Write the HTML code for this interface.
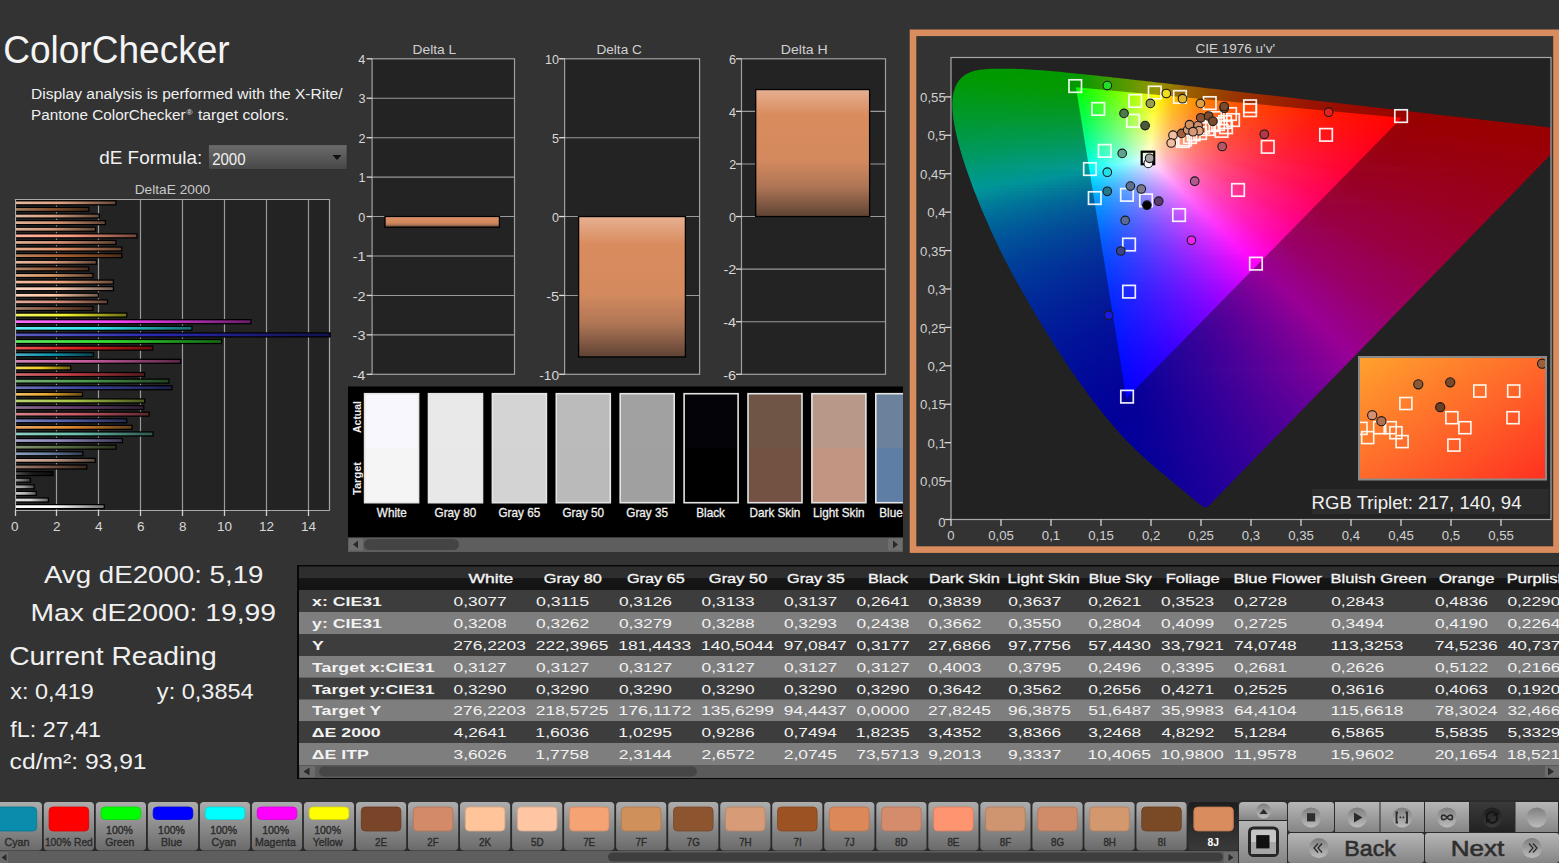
<!DOCTYPE html>
<html><head><meta charset="utf-8"><title>ColorChecker</title>
<style>html,body{margin:0;padding:0;background:#333;overflow:hidden;width:1559px;height:863px;font-family:"Liberation Sans",sans-serif}svg{display:block}</style>
</head><body>
<svg width="1559" height="863" viewBox="0 0 1559 863" font-family="Liberation Sans, sans-serif"><defs><linearGradient id="dd" x1="0" y1="0" x2="0" y2="1"><stop offset="0" stop-color="#6c6c6c"/><stop offset="1" stop-color="#474747"/></linearGradient><linearGradient id="b0" x1="0" y1="0" x2="1" y2="0"><stop offset="0" stop-color="#ffffff"/><stop offset="0.45" stop-color="#ffffff"/><stop offset="1" stop-color="#737373"/></linearGradient><linearGradient id="b1" x1="0" y1="0" x2="1" y2="0"><stop offset="0" stop-color="#e2e2e2"/><stop offset="0.45" stop-color="#d8d8d8"/><stop offset="1" stop-color="#616161"/></linearGradient><linearGradient id="b2" x1="0" y1="0" x2="1" y2="0"><stop offset="0" stop-color="#cacaca"/><stop offset="0.45" stop-color="#b8b8b8"/><stop offset="1" stop-color="#535353"/></linearGradient><linearGradient id="b3" x1="0" y1="0" x2="1" y2="0"><stop offset="0" stop-color="#b3b3b3"/><stop offset="0.45" stop-color="#9a9a9a"/><stop offset="1" stop-color="#454545"/></linearGradient><linearGradient id="b4" x1="0" y1="0" x2="1" y2="0"><stop offset="0" stop-color="#999999"/><stop offset="0.45" stop-color="#777777"/><stop offset="1" stop-color="#363636"/></linearGradient><linearGradient id="b5" x1="0" y1="0" x2="1" y2="0"><stop offset="0" stop-color="#535353"/><stop offset="0.45" stop-color="#1a1a1a"/><stop offset="1" stop-color="#0c0c0c"/></linearGradient><linearGradient id="b6" x1="0" y1="0" x2="1" y2="0"><stop offset="0" stop-color="#9b8074"/><stop offset="0.45" stop-color="#7a5646"/><stop offset="1" stop-color="#37271f"/></linearGradient><linearGradient id="b7" x1="0" y1="0" x2="1" y2="0"><stop offset="0" stop-color="#d3b3a4"/><stop offset="0.45" stop-color="#c49a86"/><stop offset="1" stop-color="#58453c"/></linearGradient><linearGradient id="b8" x1="0" y1="0" x2="1" y2="0"><stop offset="0" stop-color="#8fa3be"/><stop offset="0.45" stop-color="#6a84a8"/><stop offset="1" stop-color="#303b4c"/></linearGradient><linearGradient id="b9" x1="0" y1="0" x2="1" y2="0"><stop offset="0" stop-color="#869574"/><stop offset="0.45" stop-color="#5d7245"/><stop offset="1" stop-color="#2a331f"/></linearGradient><linearGradient id="b10" x1="0" y1="0" x2="1" y2="0"><stop offset="0" stop-color="#a7a3ca"/><stop offset="0.45" stop-color="#8a84b8"/><stop offset="1" stop-color="#3e3b53"/></linearGradient><linearGradient id="b11" x1="0" y1="0" x2="1" y2="0"><stop offset="0" stop-color="#8fd0c1"/><stop offset="0.45" stop-color="#6ac0ac"/><stop offset="1" stop-color="#30564d"/></linearGradient><linearGradient id="b12" x1="0" y1="0" x2="1" y2="0"><stop offset="0" stop-color="#e8a764"/><stop offset="0.45" stop-color="#e08a30"/><stop offset="1" stop-color="#653e16"/></linearGradient><linearGradient id="b13" x1="0" y1="0" x2="1" y2="0"><stop offset="0" stop-color="#7f88c1"/><stop offset="0.45" stop-color="#5460ac"/><stop offset="1" stop-color="#262b4d"/></linearGradient><linearGradient id="b14" x1="0" y1="0" x2="1" y2="0"><stop offset="0" stop-color="#d6838c"/><stop offset="0.45" stop-color="#c85a66"/><stop offset="1" stop-color="#5a282e"/></linearGradient><linearGradient id="b15" x1="0" y1="0" x2="1" y2="0"><stop offset="0" stop-color="#8c7092"/><stop offset="0.45" stop-color="#66406e"/><stop offset="1" stop-color="#2e1d31"/></linearGradient><linearGradient id="b16" x1="0" y1="0" x2="1" y2="0"><stop offset="0" stop-color="#bcd373"/><stop offset="0.45" stop-color="#a6c444"/><stop offset="1" stop-color="#4b581f"/></linearGradient><linearGradient id="b17" x1="0" y1="0" x2="1" y2="0"><stop offset="0" stop-color="#eebe64"/><stop offset="0.45" stop-color="#e8a830"/><stop offset="1" stop-color="#684c16"/></linearGradient><linearGradient id="b18" x1="0" y1="0" x2="1" y2="0"><stop offset="0" stop-color="#6d73b8"/><stop offset="0.45" stop-color="#3c44a0"/><stop offset="1" stop-color="#1b1f48"/></linearGradient><linearGradient id="b19" x1="0" y1="0" x2="1" y2="0"><stop offset="0" stop-color="#79b57a"/><stop offset="0.45" stop-color="#4c9c4e"/><stop offset="1" stop-color="#224623"/></linearGradient><linearGradient id="b20" x1="0" y1="0" x2="1" y2="0"><stop offset="0" stop-color="#ca6b70"/><stop offset="0.45" stop-color="#b83a40"/><stop offset="1" stop-color="#531a1d"/></linearGradient><linearGradient id="b21" x1="0" y1="0" x2="1" y2="0"><stop offset="0" stop-color="#f4d95b"/><stop offset="0.45" stop-color="#f0cc24"/><stop offset="1" stop-color="#6c5c10"/></linearGradient><linearGradient id="b22" x1="0" y1="0" x2="1" y2="0"><stop offset="0" stop-color="#d383b5"/><stop offset="0.45" stop-color="#c45a9c"/><stop offset="1" stop-color="#582846"/></linearGradient><linearGradient id="b23" x1="0" y1="0" x2="1" y2="0"><stop offset="0" stop-color="#4cacbf"/><stop offset="0.45" stop-color="#1090aa"/><stop offset="1" stop-color="#07414c"/></linearGradient><linearGradient id="b24" x1="0" y1="0" x2="1" y2="0"><stop offset="0" stop-color="#e85858"/><stop offset="0.45" stop-color="#e02020"/><stop offset="1" stop-color="#650e0e"/></linearGradient><linearGradient id="b25" x1="0" y1="0" x2="1" y2="0"><stop offset="0" stop-color="#64e864"/><stop offset="0.45" stop-color="#30e030"/><stop offset="1" stop-color="#166516"/></linearGradient><linearGradient id="b26" x1="0" y1="0" x2="1" y2="0"><stop offset="0" stop-color="#5e5ec4"/><stop offset="0.45" stop-color="#2828b0"/><stop offset="1" stop-color="#12124f"/></linearGradient><linearGradient id="b27" x1="0" y1="0" x2="1" y2="0"><stop offset="0" stop-color="#64eef4"/><stop offset="0.45" stop-color="#30e8f0"/><stop offset="1" stop-color="#16686c"/></linearGradient><linearGradient id="b28" x1="0" y1="0" x2="1" y2="0"><stop offset="0" stop-color="#f470f4"/><stop offset="0.45" stop-color="#f040f0"/><stop offset="1" stop-color="#6c1d6c"/></linearGradient><linearGradient id="b29" x1="0" y1="0" x2="1" y2="0"><stop offset="0" stop-color="#f4f464"/><stop offset="0.45" stop-color="#f0f030"/><stop offset="1" stop-color="#6c6c16"/></linearGradient><linearGradient id="b30" x1="0" y1="0" x2="1" y2="0"><stop offset="0" stop-color="#a78370"/><stop offset="0.45" stop-color="#8a5a40"/><stop offset="1" stop-color="#3e281d"/></linearGradient><linearGradient id="b31" x1="0" y1="0" x2="1" y2="0"><stop offset="0" stop-color="#e2ac9b"/><stop offset="0.45" stop-color="#d8907a"/><stop offset="1" stop-color="#614137"/></linearGradient><linearGradient id="b32" x1="0" y1="0" x2="1" y2="0"><stop offset="0" stop-color="#ffd6be"/><stop offset="0.45" stop-color="#ffc8a8"/><stop offset="1" stop-color="#735a4c"/></linearGradient><linearGradient id="b33" x1="0" y1="0" x2="1" y2="0"><stop offset="0" stop-color="#fad6c4"/><stop offset="0.45" stop-color="#f8c8b0"/><stop offset="1" stop-color="#705a4f"/></linearGradient><linearGradient id="b34" x1="0" y1="0" x2="1" y2="0"><stop offset="0" stop-color="#f4bea0"/><stop offset="0.45" stop-color="#f0a880"/><stop offset="1" stop-color="#6c4c3a"/></linearGradient><linearGradient id="b35" x1="0" y1="0" x2="1" y2="0"><stop offset="0" stop-color="#e2b28e"/><stop offset="0.45" stop-color="#d89868"/><stop offset="1" stop-color="#61442f"/></linearGradient><linearGradient id="b36" x1="0" y1="0" x2="1" y2="0"><stop offset="0" stop-color="#b38870"/><stop offset="0.45" stop-color="#9a6040"/><stop offset="1" stop-color="#452b1d"/></linearGradient><linearGradient id="b37" x1="0" y1="0" x2="1" y2="0"><stop offset="0" stop-color="#e5b8a0"/><stop offset="0.45" stop-color="#dca080"/><stop offset="1" stop-color="#63483a"/></linearGradient><linearGradient id="b38" x1="0" y1="0" x2="1" y2="0"><stop offset="0" stop-color="#be8864"/><stop offset="0.45" stop-color="#a86030"/><stop offset="1" stop-color="#4c2b16"/></linearGradient><linearGradient id="b39" x1="0" y1="0" x2="1" y2="0"><stop offset="0" stop-color="#e8ac8e"/><stop offset="0.45" stop-color="#e09068"/><stop offset="1" stop-color="#65412f"/></linearGradient><linearGradient id="b40" x1="0" y1="0" x2="1" y2="0"><stop offset="0" stop-color="#dfac94"/><stop offset="0.45" stop-color="#d49070"/><stop offset="1" stop-color="#5f4132"/></linearGradient><linearGradient id="b41" x1="0" y1="0" x2="1" y2="0"><stop offset="0" stop-color="#ffb5a0"/><stop offset="0.45" stop-color="#ff9c80"/><stop offset="1" stop-color="#73463a"/></linearGradient><linearGradient id="b42" x1="0" y1="0" x2="1" y2="0"><stop offset="0" stop-color="#dcb29a"/><stop offset="0.45" stop-color="#d09878"/><stop offset="1" stop-color="#5e4436"/></linearGradient><linearGradient id="b43" x1="0" y1="0" x2="1" y2="0"><stop offset="0" stop-color="#dfaf94"/><stop offset="0.45" stop-color="#d49470"/><stop offset="1" stop-color="#5f4332"/></linearGradient><linearGradient id="b44" x1="0" y1="0" x2="1" y2="0"><stop offset="0" stop-color="#e2b8a0"/><stop offset="0.45" stop-color="#d8a080"/><stop offset="1" stop-color="#61483a"/></linearGradient><linearGradient id="b45" x1="0" y1="0" x2="1" y2="0"><stop offset="0" stop-color="#a77f64"/><stop offset="0.45" stop-color="#8a5430"/><stop offset="1" stop-color="#3e2616"/></linearGradient><linearGradient id="b46" x1="0" y1="0" x2="1" y2="0"><stop offset="0" stop-color="#e8b8a0"/><stop offset="0.45" stop-color="#e0a080"/><stop offset="1" stop-color="#65483a"/></linearGradient><linearGradient id="dbar" x1="0" y1="0" x2="0" y2="1"><stop offset="0" stop-color="#e6b092"/><stop offset="0.2" stop-color="#d98c5e"/><stop offset="0.55" stop-color="#d48a5e"/><stop offset="0.76" stop-color="#b07656"/><stop offset="0.92" stop-color="#7a5440"/><stop offset="1" stop-color="#5e4232"/></linearGradient><clipPath id="hs"><path d="M1207.80 506.75 L1207.79 506.75 L1207.77 506.74 L1207.76 506.74 L1207.73 506.73 L1207.71 506.73 L1207.69 506.73 L1207.66 506.74 L1207.64 506.75 L1207.61 506.77 L1207.59 506.80 L1207.56 506.84 L1207.54 506.88 L1207.51 506.91 L1207.48 506.95 L1207.45 506.98 L1207.42 507.00 L1207.38 507.01 L1207.34 507.01 L1207.30 507.01 L1207.26 507.00 L1207.22 507.00 L1207.17 506.99 L1207.13 506.99 L1207.08 507.00 L1207.04 507.02 L1206.99 507.05 L1206.95 507.09 L1206.90 507.13 L1206.85 507.17 L1206.80 507.20 L1206.75 507.23 L1206.70 507.26 L1206.64 507.27 L1206.59 507.27 L1206.53 507.27 L1206.47 507.27 L1206.40 507.27 L1206.34 507.26 L1206.27 507.26 L1206.20 507.26 L1206.13 507.26 L1206.05 507.26 L1205.97 507.26 L1205.89 507.26 L1205.80 507.26 L1205.72 507.26 L1205.63 507.26 L1205.53 507.26 L1205.44 507.27 L1205.35 507.28 L1205.26 507.30 L1205.17 507.31 L1205.07 507.32 L1204.96 507.32 L1204.84 507.30 L1204.70 507.27 L1204.56 507.22 L1204.40 507.16 L1204.24 507.09 L1204.07 507.00 L1203.88 506.91 L1203.67 506.80 L1203.45 506.67 L1203.21 506.53 L1202.94 506.36 L1202.66 506.19 L1202.36 505.99 L1202.04 505.79 L1201.70 505.56 L1201.35 505.32 L1200.99 505.07 L1200.62 504.80 L1200.23 504.52 L1199.84 504.23 L1199.44 503.93 L1199.02 503.61 L1198.58 503.27 L1198.12 502.91 L1197.64 502.53 L1197.12 502.12 L1196.57 501.68 L1196.00 501.22 L1195.40 500.74 L1194.77 500.24 L1194.12 499.72 L1193.46 499.17 L1192.77 498.61 L1192.06 498.02 L1191.34 497.42 L1190.60 496.79 L1189.84 496.14 L1189.06 495.47 L1188.26 494.78 L1187.43 494.07 L1186.58 493.34 L1185.69 492.60 L1184.78 491.84 L1183.85 491.07 L1182.90 490.28 L1181.92 489.47 L1180.91 488.63 L1179.86 487.77 L1178.77 486.87 L1177.63 485.94 L1176.44 484.96 L1175.21 483.96 L1173.94 482.92 L1172.64 481.86 L1171.29 480.76 L1169.91 479.63 L1168.50 478.47 L1167.06 477.28 L1165.59 476.07 L1164.10 474.84 L1162.57 473.59 L1161.02 472.30 L1159.42 470.98 L1157.77 469.60 L1156.08 468.16 L1154.34 466.65 L1152.55 465.09 L1150.71 463.49 L1148.83 461.84 L1146.91 460.13 L1144.93 458.36 L1142.91 456.52 L1140.84 454.59 L1138.72 452.56 L1136.57 450.49 L1134.40 448.40 L1132.19 446.25 L1129.92 444.02 L1127.58 441.66 L1125.16 439.14 L1122.62 436.42 L1119.96 433.48 L1117.18 430.33 L1114.28 427.01 L1111.28 423.52 L1108.18 419.85 L1105.01 416.02 L1101.76 412.01 L1098.44 407.84 L1095.08 403.48 L1091.64 398.95 L1088.10 394.24 L1084.50 389.35 L1080.82 384.29 L1077.09 379.06 L1073.32 373.68 L1069.52 368.14 L1065.69 362.46 L1061.82 356.58 L1057.87 350.50 L1053.87 344.23 L1049.84 337.81 L1045.79 331.29 L1041.76 324.69 L1037.76 318.05 L1033.82 311.40 L1029.88 304.68 L1025.90 297.83 L1021.93 290.90 L1017.98 283.91 L1014.10 276.91 L1010.31 269.93 L1006.64 263.00 L1003.13 256.18 L999.76 249.39 L996.49 242.58 L993.31 235.77 L990.25 229.02 L987.29 222.34 L984.45 215.78 L981.74 209.38 L979.16 203.17 L976.70 197.10 L974.37 191.14 L972.15 185.29 L970.05 179.58 L968.08 174.03 L966.22 168.64 L964.50 163.45 L962.89 158.47 L961.42 153.70 L960.08 149.13 L958.88 144.73 L957.79 140.52 L956.82 136.47 L955.94 132.58 L955.17 128.85 L954.47 125.26 L953.88 121.84 L953.39 118.60 L953.01 115.53 L952.73 112.61 L952.54 109.83 L952.43 107.17 L952.40 104.61 L952.44 102.13 L952.56 99.76 L952.77 97.52 L953.06 95.39 L953.44 93.37 L953.89 91.46 L954.41 89.64 L954.99 87.90 L955.64 86.24 L956.36 84.67 L957.17 83.20 L958.04 81.82 L958.99 80.53 L959.99 79.32 L961.05 78.20 L962.15 77.14 L963.28 76.16 L964.47 75.26 L965.72 74.45 L967.02 73.72 L968.37 73.07 L969.76 72.49 L971.19 71.95 L972.64 71.46 L974.12 71.01 L975.62 70.61 L977.17 70.27 L978.75 70.00 L980.36 69.77 L982.00 69.57 L983.66 69.41 L985.33 69.26 L987.01 69.11 L988.71 68.98 L990.43 68.87 L992.18 68.80 L993.95 68.74 L995.72 68.70 L997.50 68.68 L999.28 68.66 L1001.06 68.64 L1002.83 68.63 L1004.60 68.63 L1006.37 68.63 L1008.14 68.65 L1009.93 68.68 L1011.72 68.72 L1013.52 68.76 L1015.34 68.82 L1017.16 68.88 L1018.99 68.94 L1020.82 69.02 L1022.67 69.10 L1024.53 69.19 L1026.41 69.29 L1028.30 69.40 L1030.22 69.51 L1032.17 69.63 L1034.12 69.76 L1036.10 69.89 L1038.09 70.04 L1040.10 70.18 L1042.13 70.34 L1044.19 70.50 L1046.27 70.67 L1048.37 70.84 L1050.49 71.02 L1052.63 71.21 L1054.79 71.40 L1056.98 71.60 L1059.19 71.81 L1061.43 72.02 L1063.70 72.24 L1066.00 72.46 L1068.32 72.69 L1070.67 72.92 L1073.04 73.16 L1075.45 73.41 L1077.88 73.66 L1080.35 73.91 L1082.86 74.17 L1085.40 74.44 L1087.97 74.71 L1090.57 74.98 L1093.21 75.27 L1095.88 75.55 L1098.58 75.85 L1101.32 76.14 L1104.10 76.45 L1106.91 76.76 L1109.76 77.07 L1112.63 77.39 L1115.55 77.72 L1118.50 78.05 L1121.48 78.38 L1124.51 78.72 L1127.59 79.07 L1130.70 79.42 L1133.85 79.77 L1137.04 80.13 L1140.27 80.49 L1143.54 80.86 L1146.85 81.24 L1150.20 81.62 L1153.60 82.00 L1157.03 82.39 L1160.50 82.79 L1164.01 83.19 L1167.56 83.60 L1171.15 84.01 L1174.78 84.42 L1178.46 84.85 L1182.17 85.27 L1185.93 85.70 L1189.72 86.14 L1193.56 86.58 L1197.44 87.03 L1201.36 87.48 L1205.32 87.93 L1209.31 88.39 L1213.34 88.86 L1217.41 89.33 L1221.53 89.80 L1225.68 90.28 L1229.88 90.76 L1234.10 91.25 L1238.36 91.74 L1242.65 92.23 L1246.96 92.72 L1251.30 93.22 L1255.69 93.72 L1260.11 94.23 L1264.56 94.73 L1269.03 95.25 L1273.52 95.76 L1278.02 96.27 L1282.53 96.79 L1287.06 97.31 L1291.62 97.84 L1296.21 98.37 L1300.80 98.90 L1305.40 99.43 L1309.98 99.96 L1314.54 100.49 L1319.06 101.01 L1323.55 101.53 L1328.01 102.04 L1332.46 102.55 L1336.90 103.06 L1341.31 103.57 L1345.71 104.07 L1350.10 104.57 L1354.47 105.08 L1358.85 105.58 L1363.23 106.08 L1367.61 106.58 L1371.97 107.09 L1376.30 107.58 L1380.58 108.07 L1384.80 108.56 L1388.94 109.03 L1393.03 109.50 L1397.06 109.96 L1401.05 110.41 L1404.99 110.86 L1408.87 111.30 L1412.69 111.73 L1416.46 112.16 L1420.17 112.59 L1423.82 113.00 L1427.42 113.42 L1430.97 113.83 L1434.45 114.23 L1437.88 114.63 L1441.24 115.01 L1444.54 115.40 L1447.77 115.77 L1450.93 116.13 L1454.02 116.49 L1457.05 116.84 L1460.01 117.18 L1462.91 117.52 L1465.75 117.84 L1468.53 118.16 L1471.26 118.48 L1473.92 118.78 L1476.51 119.08 L1479.05 119.37 L1481.52 119.65 L1483.94 119.92 L1486.31 120.19 L1488.64 120.46 L1490.92 120.72 L1493.16 120.97 L1495.33 121.22 L1497.46 121.47 L1499.54 121.71 L1501.58 121.95 L1503.58 122.18 L1505.56 122.41 L1507.50 122.63 L1509.42 122.85 L1511.30 123.07 L1513.15 123.28 L1514.97 123.49 L1516.75 123.70 L1518.49 123.90 L1520.20 124.09 L1521.88 124.29 L1523.52 124.48 L1525.13 124.66 L1526.70 124.84 L1528.24 125.02 L1529.75 125.20 L1531.21 125.37 L1532.64 125.53 L1534.04 125.69 L1535.39 125.84 L1536.71 125.99 L1537.99 126.13 L1539.23 126.27 L1540.44 126.41 L1541.62 126.54 L1542.76 126.67 L1543.87 126.79 L1544.91 126.91 L1545.86 127.02 L1546.77 127.13 L1547.65 127.23 L1548.53 127.33 L1549.45 127.44 L1550.43 127.55 L1551.50 127.67 L1552.67 127.81 L1553.93 127.95 L1555.25 128.11 L1556.60 128.26 L1557.96 128.42 L1559.31 128.57 L1560.63 128.73 L1561.88 128.87 L1563.11 129.01 L1564.36 129.16 L1565.60 129.30 L1566.82 129.44 L1567.98 129.57 L1569.06 129.70 L1570.04 129.81 L1570.90 129.91 L1571.62 129.99 L1572.24 130.06 L1572.77 130.12 L1573.21 130.18 L1573.58 130.22 L1573.89 130.25 L1574.16 130.29 L1574.39 130.31 Z"/></clipPath><clipPath id="plot"><rect x="951.0" y="57.5" width="600.0" height="462.0"/></clipPath><clipPath id="tri"><path d="M1401.70 117.71 L1076.00 87.28 L1126.44 398.17 Z"/></clipPath><linearGradient id="r0" gradientUnits="userSpaceOnUse" x1="972.0" y1="0" x2="1053.0" y2="0"><stop offset="0.000" stop-color="#009900"/><stop offset="1.000" stop-color="#009900"/></linearGradient><linearGradient id="r1" gradientUnits="userSpaceOnUse" x1="964.0" y1="0" x2="1084.0" y2="0"><stop offset="0.000" stop-color="#009900"/><stop offset="0.933" stop-color="#039900"/><stop offset="1.000" stop-color="#0f9900"/></linearGradient><linearGradient id="r2" gradientUnits="userSpaceOnUse" x1="960.0" y1="0" x2="1112.0" y2="0"><stop offset="0.000" stop-color="#009900"/><stop offset="0.763" stop-color="#039900"/><stop offset="1.000" stop-color="#3d9900"/></linearGradient><linearGradient id="r3" gradientUnits="userSpaceOnUse" x1="957.0" y1="0" x2="1138.0" y2="0"><stop offset="0.000" stop-color="#009902"/><stop offset="0.663" stop-color="#049900"/><stop offset="0.967" stop-color="#639900"/><stop offset="1.000" stop-color="#6f9900"/></linearGradient><linearGradient id="r4" gradientUnits="userSpaceOnUse" x1="955.0" y1="0" x2="1165.0" y2="0"><stop offset="0.000" stop-color="#009906"/><stop offset="0.581" stop-color="#039900"/><stop offset="0.843" stop-color="#639900"/><stop offset="0.967" stop-color="#999500"/><stop offset="1.000" stop-color="#998600"/></linearGradient><linearGradient id="r5" gradientUnits="userSpaceOnUse" x1="953.0" y1="0" x2="1191.0" y2="0"><stop offset="0.000" stop-color="#009909"/><stop offset="0.525" stop-color="#049900"/><stop offset="0.752" stop-color="#639900"/><stop offset="0.857" stop-color="#999600"/><stop offset="0.979" stop-color="#996300"/><stop offset="1.000" stop-color="#995d00"/></linearGradient><linearGradient id="r6" gradientUnits="userSpaceOnUse" x1="952.0" y1="0" x2="1217.0" y2="0"><stop offset="0.000" stop-color="#00990c"/><stop offset="0.475" stop-color="#039900"/><stop offset="0.679" stop-color="#639900"/><stop offset="0.774" stop-color="#999600"/><stop offset="0.883" stop-color="#996300"/><stop offset="1.000" stop-color="#994300"/></linearGradient><linearGradient id="r7" gradientUnits="userSpaceOnUse" x1="951.0" y1="0" x2="1243.0" y2="0"><stop offset="0.000" stop-color="#00990f"/><stop offset="0.438" stop-color="#049904"/><stop offset="0.620" stop-color="#639900"/><stop offset="0.705" stop-color="#999500"/><stop offset="0.805" stop-color="#996200"/><stop offset="0.969" stop-color="#993700"/><stop offset="1.000" stop-color="#993100"/></linearGradient><linearGradient id="r8" gradientUnits="userSpaceOnUse" x1="951.0" y1="0" x2="1269.0" y2="0"><stop offset="0.000" stop-color="#009913"/><stop offset="0.403" stop-color="#039908"/><stop offset="0.569" stop-color="#639902"/><stop offset="0.645" stop-color="#999700"/><stop offset="0.733" stop-color="#996400"/><stop offset="0.881" stop-color="#993800"/><stop offset="1.000" stop-color="#992400"/></linearGradient><linearGradient id="r9" gradientUnits="userSpaceOnUse" x1="951.0" y1="0" x2="1296.0" y2="0"><stop offset="0.000" stop-color="#009916"/><stop offset="0.374" stop-color="#04990d"/><stop offset="0.525" stop-color="#639907"/><stop offset="0.594" stop-color="#999603"/><stop offset="0.675" stop-color="#996300"/><stop offset="0.812" stop-color="#993700"/><stop offset="1.000" stop-color="#991a00"/></linearGradient><linearGradient id="r10" gradientUnits="userSpaceOnUse" x1="951.0" y1="0" x2="1321.0" y2="0"><stop offset="0.000" stop-color="#009919"/><stop offset="0.349" stop-color="#039911"/><stop offset="0.486" stop-color="#61990c"/><stop offset="0.554" stop-color="#999509"/><stop offset="0.630" stop-color="#996203"/><stop offset="0.757" stop-color="#993600"/><stop offset="0.989" stop-color="#991300"/><stop offset="1.000" stop-color="#991200"/></linearGradient><linearGradient id="r11" gradientUnits="userSpaceOnUse" x1="951.0" y1="0" x2="1348.0" y2="0"><stop offset="0.000" stop-color="#00991d"/><stop offset="0.327" stop-color="#049916"/><stop offset="0.456" stop-color="#649911"/><stop offset="0.514" stop-color="#99970f"/><stop offset="0.582" stop-color="#996407"/><stop offset="0.695" stop-color="#993801"/><stop offset="0.904" stop-color="#991400"/><stop offset="1.000" stop-color="#990b00"/></linearGradient><linearGradient id="r12" gradientUnits="userSpaceOnUse" x1="951.0" y1="0" x2="1374.0" y2="0"><stop offset="0.000" stop-color="#009920"/><stop offset="0.307" stop-color="#03991a"/><stop offset="0.426" stop-color="#629917"/><stop offset="0.482" stop-color="#999614"/><stop offset="0.546" stop-color="#99630c"/><stop offset="0.652" stop-color="#993804"/><stop offset="0.849" stop-color="#991400"/><stop offset="1.000" stop-color="#990600"/></linearGradient><linearGradient id="r13" gradientUnits="userSpaceOnUse" x1="951.0" y1="0" x2="1400.0" y2="0"><stop offset="0.000" stop-color="#009923"/><stop offset="0.290" stop-color="#03991f"/><stop offset="0.401" stop-color="#62991c"/><stop offset="0.454" stop-color="#99951a"/><stop offset="0.514" stop-color="#996210"/><stop offset="0.615" stop-color="#993707"/><stop offset="0.800" stop-color="#991300"/><stop offset="1.000" stop-color="#990100"/></linearGradient><linearGradient id="r14" gradientUnits="userSpaceOnUse" x1="951.0" y1="0" x2="1426.0" y2="0"><stop offset="0.000" stop-color="#009927"/><stop offset="0.276" stop-color="#039924"/><stop offset="0.379" stop-color="#629922"/><stop offset="0.429" stop-color="#999520"/><stop offset="0.486" stop-color="#996214"/><stop offset="0.581" stop-color="#99360a"/><stop offset="0.756" stop-color="#991301"/><stop offset="1.000" stop-color="#990000"/></linearGradient><linearGradient id="r15" gradientUnits="userSpaceOnUse" x1="951.0" y1="0" x2="1452.0" y2="0"><stop offset="0.000" stop-color="#00992a"/><stop offset="0.261" stop-color="#039929"/><stop offset="0.359" stop-color="#629928"/><stop offset="0.405" stop-color="#999727"/><stop offset="0.457" stop-color="#996419"/><stop offset="0.543" stop-color="#99380d"/><stop offset="0.701" stop-color="#991504"/><stop offset="0.948" stop-color="#990000"/><stop offset="1.000" stop-color="#990000"/></linearGradient><linearGradient id="r16" gradientUnits="userSpaceOnUse" x1="951.0" y1="0" x2="1478.0" y2="0"><stop offset="0.000" stop-color="#00992e"/><stop offset="0.250" stop-color="#03992e"/><stop offset="0.342" stop-color="#62992e"/><stop offset="0.385" stop-color="#99962d"/><stop offset="0.435" stop-color="#99631e"/><stop offset="0.516" stop-color="#993811"/><stop offset="0.668" stop-color="#991406"/><stop offset="0.898" stop-color="#990000"/><stop offset="1.000" stop-color="#990000"/></linearGradient><linearGradient id="r17" gradientUnits="userSpaceOnUse" x1="951.0" y1="0" x2="1505.0" y2="0"><stop offset="0.000" stop-color="#009932"/><stop offset="0.238" stop-color="#039933"/><stop offset="0.325" stop-color="#629934"/><stop offset="0.366" stop-color="#999533"/><stop offset="0.413" stop-color="#996222"/><stop offset="0.491" stop-color="#993714"/><stop offset="0.635" stop-color="#991308"/><stop offset="0.850" stop-color="#990000"/><stop offset="1.000" stop-color="#990000"/></linearGradient><linearGradient id="r18" gradientUnits="userSpaceOnUse" x1="951.0" y1="0" x2="1531.0" y2="0"><stop offset="0.000" stop-color="#009935"/><stop offset="0.229" stop-color="#049938"/><stop offset="0.310" stop-color="#62993a"/><stop offset="0.348" stop-color="#99973a"/><stop offset="0.391" stop-color="#996428"/><stop offset="0.464" stop-color="#993818"/><stop offset="0.597" stop-color="#99140a"/><stop offset="0.803" stop-color="#990002"/><stop offset="1.000" stop-color="#990000"/></linearGradient><linearGradient id="r19" gradientUnits="userSpaceOnUse" x1="952.0" y1="0" x2="1551.0" y2="0"><stop offset="0.000" stop-color="#009939"/><stop offset="0.220" stop-color="#03993e"/><stop offset="0.299" stop-color="#629940"/><stop offset="0.336" stop-color="#999641"/><stop offset="0.377" stop-color="#99632c"/><stop offset="0.447" stop-color="#99381b"/><stop offset="0.576" stop-color="#99140c"/><stop offset="0.773" stop-color="#990003"/><stop offset="1.000" stop-color="#990000"/></linearGradient><linearGradient id="r20" gradientUnits="userSpaceOnUse" x1="953.0" y1="0" x2="1551.0" y2="0"><stop offset="0.000" stop-color="#00993d"/><stop offset="0.221" stop-color="#049943"/><stop offset="0.298" stop-color="#639947"/><stop offset="0.334" stop-color="#999547"/><stop offset="0.376" stop-color="#996231"/><stop offset="0.446" stop-color="#99371e"/><stop offset="0.575" stop-color="#99130e"/><stop offset="0.768" stop-color="#990005"/><stop offset="1.000" stop-color="#990000"/></linearGradient><linearGradient id="r21" gradientUnits="userSpaceOnUse" x1="953.0" y1="0" x2="1551.0" y2="0"><stop offset="0.000" stop-color="#009941"/><stop offset="0.221" stop-color="#039949"/><stop offset="0.298" stop-color="#63994d"/><stop offset="0.333" stop-color="#99974f"/><stop offset="0.373" stop-color="#996537"/><stop offset="0.440" stop-color="#993923"/><stop offset="0.564" stop-color="#991511"/><stop offset="0.759" stop-color="#990006"/><stop offset="1.000" stop-color="#990000"/></linearGradient><linearGradient id="r22" gradientUnits="userSpaceOnUse" x1="954.0" y1="0" x2="1551.0" y2="0"><stop offset="0.000" stop-color="#009944"/><stop offset="0.221" stop-color="#04994e"/><stop offset="0.296" stop-color="#639954"/><stop offset="0.332" stop-color="#999656"/><stop offset="0.372" stop-color="#99643c"/><stop offset="0.439" stop-color="#993826"/><stop offset="0.563" stop-color="#991414"/><stop offset="0.754" stop-color="#990008"/><stop offset="1.000" stop-color="#990001"/></linearGradient><linearGradient id="r23" gradientUnits="userSpaceOnUse" x1="954.0" y1="0" x2="1551.0" y2="0"><stop offset="0.000" stop-color="#009948"/><stop offset="0.221" stop-color="#039954"/><stop offset="0.296" stop-color="#63995b"/><stop offset="0.332" stop-color="#99965d"/><stop offset="0.372" stop-color="#996341"/><stop offset="0.439" stop-color="#993729"/><stop offset="0.563" stop-color="#991416"/><stop offset="0.750" stop-color="#990009"/><stop offset="1.000" stop-color="#990002"/></linearGradient><linearGradient id="r24" gradientUnits="userSpaceOnUse" x1="955.0" y1="0" x2="1551.0" y2="0"><stop offset="0.000" stop-color="#00994c"/><stop offset="0.221" stop-color="#04995a"/><stop offset="0.295" stop-color="#639962"/><stop offset="0.331" stop-color="#999564"/><stop offset="0.371" stop-color="#996246"/><stop offset="0.438" stop-color="#99372d"/><stop offset="0.562" stop-color="#991318"/><stop offset="0.747" stop-color="#99000b"/><stop offset="1.000" stop-color="#990003"/></linearGradient><linearGradient id="r25" gradientUnits="userSpaceOnUse" x1="956.0" y1="0" x2="1551.0" y2="0"><stop offset="0.000" stop-color="#009951"/><stop offset="0.220" stop-color="#039960"/><stop offset="0.294" stop-color="#639969"/><stop offset="0.328" stop-color="#99976d"/><stop offset="0.366" stop-color="#99644d"/><stop offset="0.430" stop-color="#993932"/><stop offset="0.548" stop-color="#99151c"/><stop offset="0.736" stop-color="#99000d"/><stop offset="1.000" stop-color="#990004"/></linearGradient><linearGradient id="r26" gradientUnits="userSpaceOnUse" x1="957.0" y1="0" x2="1551.0" y2="0"><stop offset="0.000" stop-color="#009955"/><stop offset="0.219" stop-color="#029966"/><stop offset="0.291" stop-color="#619970"/><stop offset="0.327" stop-color="#999674"/><stop offset="0.365" stop-color="#996353"/><stop offset="0.429" stop-color="#993836"/><stop offset="0.547" stop-color="#99141e"/><stop offset="0.731" stop-color="#99000e"/><stop offset="1.000" stop-color="#990005"/></linearGradient><linearGradient id="r27" gradientUnits="userSpaceOnUse" x1="958.0" y1="0" x2="1551.0" y2="0"><stop offset="0.000" stop-color="#009959"/><stop offset="0.219" stop-color="#03996d"/><stop offset="0.292" stop-color="#639978"/><stop offset="0.325" stop-color="#99957c"/><stop offset="0.364" stop-color="#996258"/><stop offset="0.428" stop-color="#993739"/><stop offset="0.548" stop-color="#991320"/><stop offset="0.728" stop-color="#990010"/><stop offset="1.000" stop-color="#990006"/></linearGradient><linearGradient id="r28" gradientUnits="userSpaceOnUse" x1="958.0" y1="0" x2="1551.0" y2="0"><stop offset="0.000" stop-color="#00995d"/><stop offset="0.219" stop-color="#029973"/><stop offset="0.290" stop-color="#619980"/><stop offset="0.324" stop-color="#999786"/><stop offset="0.361" stop-color="#996560"/><stop offset="0.423" stop-color="#99393f"/><stop offset="0.538" stop-color="#991524"/><stop offset="0.718" stop-color="#990012"/><stop offset="1.000" stop-color="#990007"/></linearGradient><linearGradient id="r29" gradientUnits="userSpaceOnUse" x1="959.0" y1="0" x2="1551.0" y2="0"><stop offset="0.000" stop-color="#009962"/><stop offset="0.220" stop-color="#03997a"/><stop offset="0.291" stop-color="#649988"/><stop offset="0.323" stop-color="#99968e"/><stop offset="0.360" stop-color="#996465"/><stop offset="0.422" stop-color="#993843"/><stop offset="0.537" stop-color="#991426"/><stop offset="0.715" stop-color="#990014"/><stop offset="1.000" stop-color="#990008"/></linearGradient><linearGradient id="r30" gradientUnits="userSpaceOnUse" x1="960.0" y1="0" x2="1550.0" y2="0"><stop offset="0.000" stop-color="#009966"/><stop offset="0.219" stop-color="#029981"/><stop offset="0.288" stop-color="#619990"/><stop offset="0.322" stop-color="#999596"/><stop offset="0.359" stop-color="#99636b"/><stop offset="0.422" stop-color="#993746"/><stop offset="0.537" stop-color="#991428"/><stop offset="0.712" stop-color="#990015"/><stop offset="1.000" stop-color="#990009"/></linearGradient><linearGradient id="r31" gradientUnits="userSpaceOnUse" x1="961.0" y1="0" x2="1547.0" y2="0"><stop offset="0.000" stop-color="#00996b"/><stop offset="0.220" stop-color="#049988"/><stop offset="0.288" stop-color="#619998"/><stop offset="0.328" stop-color="#998c96"/><stop offset="0.369" stop-color="#995a6a"/><stop offset="0.437" stop-color="#993045"/><stop offset="0.567" stop-color="#990e26"/><stop offset="0.720" stop-color="#990017"/><stop offset="1.000" stop-color="#99000a"/></linearGradient><linearGradient id="r32" gradientUnits="userSpaceOnUse" x1="962.0" y1="0" x2="1544.0" y2="0"><stop offset="0.000" stop-color="#009970"/><stop offset="0.220" stop-color="#039990"/><stop offset="0.285" stop-color="#589299"/><stop offset="0.333" stop-color="#998296"/><stop offset="0.378" stop-color="#995268"/><stop offset="0.454" stop-color="#992943"/><stop offset="0.601" stop-color="#990824"/><stop offset="0.741" stop-color="#990017"/><stop offset="1.000" stop-color="#99000b"/></linearGradient><linearGradient id="r33" gradientUnits="userSpaceOnUse" x1="963.0" y1="0" x2="1541.0" y2="0"><stop offset="0.000" stop-color="#009975"/><stop offset="0.221" stop-color="#049997"/><stop offset="0.339" stop-color="#997a96"/><stop offset="0.388" stop-color="#994a67"/><stop offset="0.471" stop-color="#992341"/><stop offset="0.637" stop-color="#990422"/><stop offset="1.000" stop-color="#99000c"/></linearGradient><linearGradient id="r34" gradientUnits="userSpaceOnUse" x1="964.0" y1="0" x2="1538.0" y2="0"><stop offset="0.000" stop-color="#00997a"/><stop offset="0.216" stop-color="#009599"/><stop offset="0.315" stop-color="#757c99"/><stop offset="0.345" stop-color="#997296"/><stop offset="0.395" stop-color="#994567"/><stop offset="0.484" stop-color="#991f40"/><stop offset="0.662" stop-color="#990121"/><stop offset="1.000" stop-color="#99000d"/></linearGradient><linearGradient id="r35" gradientUnits="userSpaceOnUse" x1="965.0" y1="0" x2="1535.0" y2="0"><stop offset="0.000" stop-color="#00997f"/><stop offset="0.186" stop-color="#009599"/><stop offset="0.223" stop-color="#048c99"/><stop offset="0.351" stop-color="#996b96"/><stop offset="0.404" stop-color="#994068"/><stop offset="0.496" stop-color="#991b40"/><stop offset="0.677" stop-color="#990022"/><stop offset="1.000" stop-color="#99000e"/></linearGradient><linearGradient id="r36" gradientUnits="userSpaceOnUse" x1="966.0" y1="0" x2="1532.0" y2="0"><stop offset="0.000" stop-color="#009984"/><stop offset="0.155" stop-color="#009499"/><stop offset="0.223" stop-color="#038699"/><stop offset="0.357" stop-color="#996496"/><stop offset="0.412" stop-color="#993b68"/><stop offset="0.507" stop-color="#991841"/><stop offset="0.684" stop-color="#990023"/><stop offset="1.000" stop-color="#99000f"/></linearGradient><linearGradient id="r37" gradientUnits="userSpaceOnUse" x1="967.0" y1="0" x2="1529.0" y2="0"><stop offset="0.000" stop-color="#009989"/><stop offset="0.125" stop-color="#009499"/><stop offset="0.224" stop-color="#038099"/><stop offset="0.363" stop-color="#995d97"/><stop offset="0.420" stop-color="#993668"/><stop offset="0.520" stop-color="#991541"/><stop offset="0.690" stop-color="#990024"/><stop offset="1.000" stop-color="#990011"/></linearGradient><linearGradient id="r38" gradientUnits="userSpaceOnUse" x1="968.0" y1="0" x2="1527.0" y2="0"><stop offset="0.000" stop-color="#00998e"/><stop offset="0.098" stop-color="#009399"/><stop offset="0.225" stop-color="#047a99"/><stop offset="0.369" stop-color="#995797"/><stop offset="0.428" stop-color="#993268"/><stop offset="0.531" stop-color="#991241"/><stop offset="0.694" stop-color="#990026"/><stop offset="1.000" stop-color="#990012"/></linearGradient><linearGradient id="r39" gradientUnits="userSpaceOnUse" x1="970.0" y1="0" x2="1524.0" y2="0"><stop offset="0.000" stop-color="#009994"/><stop offset="0.117" stop-color="#008a99"/><stop offset="0.224" stop-color="#037599"/><stop offset="0.375" stop-color="#995095"/><stop offset="0.437" stop-color="#992d67"/><stop offset="0.545" stop-color="#990f40"/><stop offset="0.697" stop-color="#990027"/><stop offset="1.000" stop-color="#990013"/></linearGradient><linearGradient id="r40" gradientUnits="userSpaceOnUse" x1="971.0" y1="0" x2="1521.0" y2="0"><stop offset="0.000" stop-color="#009899"/><stop offset="0.225" stop-color="#046f99"/><stop offset="0.382" stop-color="#994b95"/><stop offset="0.447" stop-color="#992966"/><stop offset="0.562" stop-color="#990c3f"/><stop offset="0.700" stop-color="#990029"/><stop offset="1.000" stop-color="#990014"/></linearGradient><linearGradient id="r41" gradientUnits="userSpaceOnUse" x1="972.0" y1="0" x2="1518.0" y2="0"><stop offset="0.000" stop-color="#009399"/><stop offset="0.225" stop-color="#036b99"/><stop offset="0.388" stop-color="#994695"/><stop offset="0.454" stop-color="#992667"/><stop offset="0.571" stop-color="#990a40"/><stop offset="0.703" stop-color="#99002b"/><stop offset="1.000" stop-color="#990015"/></linearGradient><linearGradient id="r42" gradientUnits="userSpaceOnUse" x1="973.0" y1="0" x2="1515.0" y2="0"><stop offset="0.000" stop-color="#008e99"/><stop offset="0.227" stop-color="#046699"/><stop offset="0.395" stop-color="#994195"/><stop offset="0.463" stop-color="#992267"/><stop offset="0.585" stop-color="#990840"/><stop offset="0.716" stop-color="#99002c"/><stop offset="1.000" stop-color="#990017"/></linearGradient><linearGradient id="r43" gradientUnits="userSpaceOnUse" x1="974.0" y1="0" x2="1512.0" y2="0"><stop offset="0.000" stop-color="#008999"/><stop offset="0.227" stop-color="#036299"/><stop offset="0.401" stop-color="#993d95"/><stop offset="0.472" stop-color="#991f67"/><stop offset="0.597" stop-color="#990640"/><stop offset="0.749" stop-color="#99002a"/><stop offset="1.000" stop-color="#990018"/></linearGradient><linearGradient id="r44" gradientUnits="userSpaceOnUse" x1="975.0" y1="0" x2="1509.0" y2="0"><stop offset="0.000" stop-color="#008499"/><stop offset="0.228" stop-color="#045e99"/><stop offset="0.408" stop-color="#993996"/><stop offset="0.481" stop-color="#991c67"/><stop offset="0.610" stop-color="#990440"/><stop offset="0.869" stop-color="#990021"/><stop offset="1.000" stop-color="#990019"/></linearGradient><linearGradient id="r45" gradientUnits="userSpaceOnUse" x1="977.0" y1="0" x2="1506.0" y2="0"><stop offset="0.000" stop-color="#007f99"/><stop offset="0.227" stop-color="#035a99"/><stop offset="0.414" stop-color="#993596"/><stop offset="0.490" stop-color="#991967"/><stop offset="0.624" stop-color="#990240"/><stop offset="0.892" stop-color="#990021"/><stop offset="1.000" stop-color="#99001b"/></linearGradient><linearGradient id="r46" gradientUnits="userSpaceOnUse" x1="978.0" y1="0" x2="1503.0" y2="0"><stop offset="0.000" stop-color="#007b99"/><stop offset="0.229" stop-color="#035699"/><stop offset="0.421" stop-color="#993196"/><stop offset="0.499" stop-color="#991668"/><stop offset="0.638" stop-color="#990040"/><stop offset="0.916" stop-color="#990021"/><stop offset="1.000" stop-color="#99001c"/></linearGradient><linearGradient id="r47" gradientUnits="userSpaceOnUse" x1="979.0" y1="0" x2="1500.0" y2="0"><stop offset="0.000" stop-color="#007799"/><stop offset="0.230" stop-color="#045399"/><stop offset="0.428" stop-color="#992d96"/><stop offset="0.511" stop-color="#991367"/><stop offset="0.655" stop-color="#990040"/><stop offset="0.944" stop-color="#990021"/><stop offset="1.000" stop-color="#99001e"/></linearGradient><linearGradient id="r48" gradientUnits="userSpaceOnUse" x1="980.0" y1="0" x2="1497.0" y2="0"><stop offset="0.000" stop-color="#007399"/><stop offset="0.230" stop-color="#035099"/><stop offset="0.435" stop-color="#992a96"/><stop offset="0.520" stop-color="#991167"/><stop offset="0.667" stop-color="#990040"/><stop offset="0.965" stop-color="#990021"/><stop offset="1.000" stop-color="#99001f"/></linearGradient><linearGradient id="r49" gradientUnits="userSpaceOnUse" x1="982.0" y1="0" x2="1494.0" y2="0"><stop offset="0.000" stop-color="#006f99"/><stop offset="0.230" stop-color="#044c99"/><stop offset="0.441" stop-color="#992696"/><stop offset="0.529" stop-color="#990f67"/><stop offset="0.668" stop-color="#990043"/><stop offset="0.959" stop-color="#990023"/><stop offset="1.000" stop-color="#990020"/></linearGradient><linearGradient id="r50" gradientUnits="userSpaceOnUse" x1="983.0" y1="0" x2="1491.0" y2="0"><stop offset="0.000" stop-color="#006b99"/><stop offset="0.230" stop-color="#034a99"/><stop offset="0.449" stop-color="#992396"/><stop offset="0.539" stop-color="#990c67"/><stop offset="0.669" stop-color="#990045"/><stop offset="0.955" stop-color="#990025"/><stop offset="1.000" stop-color="#990022"/></linearGradient><linearGradient id="r51" gradientUnits="userSpaceOnUse" x1="984.0" y1="0" x2="1489.0" y2="0"><stop offset="0.000" stop-color="#006899"/><stop offset="0.232" stop-color="#044799"/><stop offset="0.457" stop-color="#992095"/><stop offset="0.550" stop-color="#990a66"/><stop offset="0.671" stop-color="#990047"/><stop offset="0.952" stop-color="#990026"/><stop offset="1.000" stop-color="#990023"/></linearGradient><linearGradient id="r52" gradientUnits="userSpaceOnUse" x1="986.0" y1="0" x2="1486.0" y2="0"><stop offset="0.000" stop-color="#006499"/><stop offset="0.230" stop-color="#034499"/><stop offset="0.464" stop-color="#991d95"/><stop offset="0.560" stop-color="#990867"/><stop offset="0.680" stop-color="#990048"/><stop offset="0.966" stop-color="#990027"/><stop offset="1.000" stop-color="#990025"/></linearGradient><linearGradient id="r53" gradientUnits="userSpaceOnUse" x1="987.0" y1="0" x2="1483.0" y2="0"><stop offset="0.000" stop-color="#006199"/><stop offset="0.232" stop-color="#044199"/><stop offset="0.472" stop-color="#991a95"/><stop offset="0.571" stop-color="#990667"/><stop offset="0.712" stop-color="#990045"/><stop offset="1.000" stop-color="#990026"/></linearGradient><linearGradient id="r54" gradientUnits="userSpaceOnUse" x1="988.0" y1="0" x2="1480.0" y2="0"><stop offset="0.000" stop-color="#005e99"/><stop offset="0.232" stop-color="#033f99"/><stop offset="0.480" stop-color="#991795"/><stop offset="0.581" stop-color="#990467"/><stop offset="0.760" stop-color="#990040"/><stop offset="1.000" stop-color="#990028"/></linearGradient><linearGradient id="r55" gradientUnits="userSpaceOnUse" x1="990.0" y1="0" x2="1477.0" y2="0"><stop offset="0.000" stop-color="#005b99"/><stop offset="0.232" stop-color="#043c99"/><stop offset="0.487" stop-color="#991595"/><stop offset="0.591" stop-color="#990267"/><stop offset="0.776" stop-color="#990040"/><stop offset="1.000" stop-color="#990029"/></linearGradient><linearGradient id="r56" gradientUnits="userSpaceOnUse" x1="991.0" y1="0" x2="1474.0" y2="0"><stop offset="0.000" stop-color="#005899"/><stop offset="0.234" stop-color="#043a99"/><stop offset="0.495" stop-color="#991295"/><stop offset="0.602" stop-color="#990167"/><stop offset="0.793" stop-color="#990040"/><stop offset="1.000" stop-color="#99002b"/></linearGradient><linearGradient id="r57" gradientUnits="userSpaceOnUse" x1="992.0" y1="0" x2="1471.0" y2="0"><stop offset="0.000" stop-color="#005599"/><stop offset="0.234" stop-color="#033899"/><stop offset="0.503" stop-color="#991096"/><stop offset="0.614" stop-color="#990067"/><stop offset="0.808" stop-color="#990040"/><stop offset="1.000" stop-color="#99002d"/></linearGradient><linearGradient id="r58" gradientUnits="userSpaceOnUse" x1="994.0" y1="0" x2="1468.0" y2="0"><stop offset="0.000" stop-color="#005299"/><stop offset="0.234" stop-color="#043599"/><stop offset="0.511" stop-color="#990e96"/><stop offset="0.624" stop-color="#990067"/><stop offset="0.825" stop-color="#990040"/><stop offset="1.000" stop-color="#99002f"/></linearGradient><linearGradient id="r59" gradientUnits="userSpaceOnUse" x1="995.0" y1="0" x2="1465.0" y2="0"><stop offset="0.000" stop-color="#005099"/><stop offset="0.234" stop-color="#033499"/><stop offset="0.519" stop-color="#990c96"/><stop offset="0.636" stop-color="#990067"/><stop offset="0.843" stop-color="#990040"/><stop offset="1.000" stop-color="#990030"/></linearGradient><linearGradient id="r60" gradientUnits="userSpaceOnUse" x1="997.0" y1="0" x2="1462.0" y2="0"><stop offset="0.000" stop-color="#004d99"/><stop offset="0.234" stop-color="#043199"/><stop offset="0.527" stop-color="#990a96"/><stop offset="0.639" stop-color="#99006a"/><stop offset="0.843" stop-color="#990042"/><stop offset="1.000" stop-color="#990032"/></linearGradient><linearGradient id="r61" gradientUnits="userSpaceOnUse" x1="998.0" y1="0" x2="1459.0" y2="0"><stop offset="0.000" stop-color="#004b99"/><stop offset="0.234" stop-color="#033099"/><stop offset="0.536" stop-color="#990896"/><stop offset="0.649" stop-color="#99006a"/><stop offset="0.857" stop-color="#990043"/><stop offset="1.000" stop-color="#990034"/></linearGradient><linearGradient id="r62" gradientUnits="userSpaceOnUse" x1="1000.0" y1="0" x2="1456.0" y2="0"><stop offset="0.000" stop-color="#004899"/><stop offset="0.235" stop-color="#042e99"/><stop offset="0.544" stop-color="#990696"/><stop offset="0.671" stop-color="#990067"/><stop offset="0.895" stop-color="#990040"/><stop offset="1.000" stop-color="#990036"/></linearGradient><linearGradient id="r63" gradientUnits="userSpaceOnUse" x1="1001.0" y1="0" x2="1454.0" y2="0"><stop offset="0.000" stop-color="#004699"/><stop offset="0.236" stop-color="#042c99"/><stop offset="0.554" stop-color="#990395"/><stop offset="0.687" stop-color="#990066"/><stop offset="0.921" stop-color="#99003f"/><stop offset="1.000" stop-color="#990037"/></linearGradient><linearGradient id="r64" gradientUnits="userSpaceOnUse" x1="1003.0" y1="0" x2="1451.0" y2="0"><stop offset="0.000" stop-color="#004399"/><stop offset="0.234" stop-color="#042a99"/><stop offset="0.562" stop-color="#990295"/><stop offset="0.699" stop-color="#990066"/><stop offset="0.938" stop-color="#99003f"/><stop offset="1.000" stop-color="#990039"/></linearGradient><linearGradient id="r65" gradientUnits="userSpaceOnUse" x1="1004.0" y1="0" x2="1448.0" y2="0"><stop offset="0.000" stop-color="#004199"/><stop offset="0.236" stop-color="#042899"/><stop offset="0.572" stop-color="#990095"/><stop offset="0.712" stop-color="#990066"/><stop offset="0.957" stop-color="#99003f"/><stop offset="1.000" stop-color="#99003b"/></linearGradient><linearGradient id="r66" gradientUnits="userSpaceOnUse" x1="1006.0" y1="0" x2="1445.0" y2="0"><stop offset="0.000" stop-color="#003f99"/><stop offset="0.235" stop-color="#032799"/><stop offset="0.581" stop-color="#990095"/><stop offset="0.724" stop-color="#990066"/><stop offset="0.977" stop-color="#99003f"/><stop offset="1.000" stop-color="#99003d"/></linearGradient><linearGradient id="r67" gradientUnits="userSpaceOnUse" x1="1007.0" y1="0" x2="1442.0" y2="0"><stop offset="0.000" stop-color="#003d99"/><stop offset="0.237" stop-color="#042599"/><stop offset="0.591" stop-color="#990095"/><stop offset="0.738" stop-color="#990066"/><stop offset="0.998" stop-color="#99003f"/><stop offset="1.000" stop-color="#99003f"/></linearGradient><linearGradient id="r68" gradientUnits="userSpaceOnUse" x1="1009.0" y1="0" x2="1439.0" y2="0"><stop offset="0.000" stop-color="#003b99"/><stop offset="0.235" stop-color="#032499"/><stop offset="0.598" stop-color="#990096"/><stop offset="0.747" stop-color="#990068"/><stop offset="1.000" stop-color="#990041"/></linearGradient><linearGradient id="r69" gradientUnits="userSpaceOnUse" x1="1011.0" y1="0" x2="1436.0" y2="0"><stop offset="0.000" stop-color="#003999"/><stop offset="0.235" stop-color="#042299"/><stop offset="0.593" stop-color="#950099"/><stop offset="0.779" stop-color="#990064"/><stop offset="1.000" stop-color="#990043"/></linearGradient><linearGradient id="r70" gradientUnits="userSpaceOnUse" x1="1012.0" y1="0" x2="1433.0" y2="0"><stop offset="0.000" stop-color="#003799"/><stop offset="0.238" stop-color="#042199"/><stop offset="0.591" stop-color="#900099"/><stop offset="0.629" stop-color="#990092"/><stop offset="0.796" stop-color="#990063"/><stop offset="1.000" stop-color="#990046"/></linearGradient><linearGradient id="r71" gradientUnits="userSpaceOnUse" x1="1014.0" y1="0" x2="1430.0" y2="0"><stop offset="0.000" stop-color="#003599"/><stop offset="0.236" stop-color="#042099"/><stop offset="0.587" stop-color="#8a0099"/><stop offset="0.635" stop-color="#990094"/><stop offset="0.800" stop-color="#990065"/><stop offset="1.000" stop-color="#990048"/></linearGradient><linearGradient id="r72" gradientUnits="userSpaceOnUse" x1="1016.0" y1="0" x2="1427.0" y2="0"><stop offset="0.000" stop-color="#003399"/><stop offset="0.236" stop-color="#041e99"/><stop offset="0.584" stop-color="#860099"/><stop offset="0.642" stop-color="#990095"/><stop offset="0.813" stop-color="#990066"/><stop offset="1.000" stop-color="#99004a"/></linearGradient><linearGradient id="r73" gradientUnits="userSpaceOnUse" x1="1017.0" y1="0" x2="1424.0" y2="0"><stop offset="0.000" stop-color="#003299"/><stop offset="0.236" stop-color="#041d99"/><stop offset="0.580" stop-color="#800099"/><stop offset="0.654" stop-color="#990095"/><stop offset="0.828" stop-color="#990066"/><stop offset="1.000" stop-color="#99004c"/></linearGradient><linearGradient id="r74" gradientUnits="userSpaceOnUse" x1="1019.0" y1="0" x2="1421.0" y2="0"><stop offset="0.000" stop-color="#003099"/><stop offset="0.236" stop-color="#041c99"/><stop offset="0.577" stop-color="#7c0099"/><stop offset="0.664" stop-color="#990095"/><stop offset="0.843" stop-color="#990066"/><stop offset="1.000" stop-color="#99004f"/></linearGradient><linearGradient id="r75" gradientUnits="userSpaceOnUse" x1="1021.0" y1="0" x2="1418.0" y2="0"><stop offset="0.000" stop-color="#002e99"/><stop offset="0.234" stop-color="#041b99"/><stop offset="0.572" stop-color="#770099"/><stop offset="0.675" stop-color="#990095"/><stop offset="0.859" stop-color="#990066"/><stop offset="1.000" stop-color="#990051"/></linearGradient><linearGradient id="r76" gradientUnits="userSpaceOnUse" x1="1022.0" y1="0" x2="1416.0" y2="0"><stop offset="0.000" stop-color="#002d99"/><stop offset="0.236" stop-color="#041999"/><stop offset="0.569" stop-color="#730099"/><stop offset="0.685" stop-color="#990095"/><stop offset="0.873" stop-color="#990066"/><stop offset="1.000" stop-color="#990053"/></linearGradient><linearGradient id="r77" gradientUnits="userSpaceOnUse" x1="1024.0" y1="0" x2="1413.0" y2="0"><stop offset="0.000" stop-color="#002b99"/><stop offset="0.237" stop-color="#041899"/><stop offset="0.563" stop-color="#6e0099"/><stop offset="0.697" stop-color="#990095"/><stop offset="0.889" stop-color="#990066"/><stop offset="1.000" stop-color="#990056"/></linearGradient><linearGradient id="r78" gradientUnits="userSpaceOnUse" x1="1026.0" y1="0" x2="1410.0" y2="0"><stop offset="0.000" stop-color="#002999"/><stop offset="0.234" stop-color="#041799"/><stop offset="0.560" stop-color="#6a0099"/><stop offset="0.708" stop-color="#990095"/><stop offset="0.906" stop-color="#990066"/><stop offset="1.000" stop-color="#990058"/></linearGradient><linearGradient id="r79" gradientUnits="userSpaceOnUse" x1="1028.0" y1="0" x2="1407.0" y2="0"><stop offset="0.000" stop-color="#002899"/><stop offset="0.235" stop-color="#041699"/><stop offset="0.554" stop-color="#660099"/><stop offset="0.720" stop-color="#990095"/><stop offset="0.923" stop-color="#990066"/><stop offset="1.000" stop-color="#99005b"/></linearGradient><linearGradient id="r80" gradientUnits="userSpaceOnUse" x1="1029.0" y1="0" x2="1404.0" y2="0"><stop offset="0.000" stop-color="#002799"/><stop offset="0.235" stop-color="#041599"/><stop offset="0.552" stop-color="#620099"/><stop offset="0.733" stop-color="#990095"/><stop offset="0.941" stop-color="#990066"/><stop offset="1.000" stop-color="#99005e"/></linearGradient><linearGradient id="r81" gradientUnits="userSpaceOnUse" x1="1031.0" y1="0" x2="1401.0" y2="0"><stop offset="0.000" stop-color="#002599"/><stop offset="0.235" stop-color="#041499"/><stop offset="0.549" stop-color="#5f0099"/><stop offset="0.746" stop-color="#990095"/><stop offset="0.959" stop-color="#990066"/><stop offset="1.000" stop-color="#990060"/></linearGradient><linearGradient id="r82" gradientUnits="userSpaceOnUse" x1="1033.0" y1="0" x2="1398.0" y2="0"><stop offset="0.000" stop-color="#002499"/><stop offset="0.233" stop-color="#041399"/><stop offset="0.542" stop-color="#5b0099"/><stop offset="0.759" stop-color="#990095"/><stop offset="0.978" stop-color="#990066"/><stop offset="1.000" stop-color="#990063"/></linearGradient><linearGradient id="r83" gradientUnits="userSpaceOnUse" x1="1035.0" y1="0" x2="1395.0" y2="0"><stop offset="0.000" stop-color="#002299"/><stop offset="0.233" stop-color="#041299"/><stop offset="0.539" stop-color="#570099"/><stop offset="0.772" stop-color="#990095"/><stop offset="0.997" stop-color="#990066"/><stop offset="1.000" stop-color="#990066"/></linearGradient><linearGradient id="r84" gradientUnits="userSpaceOnUse" x1="1036.0" y1="0" x2="1392.0" y2="0"><stop offset="0.000" stop-color="#002199"/><stop offset="0.236" stop-color="#041199"/><stop offset="0.537" stop-color="#540099"/><stop offset="0.787" stop-color="#990096"/><stop offset="1.000" stop-color="#990069"/></linearGradient><linearGradient id="r85" gradientUnits="userSpaceOnUse" x1="1038.0" y1="0" x2="1389.0" y2="0"><stop offset="0.000" stop-color="#002099"/><stop offset="0.234" stop-color="#041099"/><stop offset="0.533" stop-color="#510099"/><stop offset="0.803" stop-color="#990095"/><stop offset="1.000" stop-color="#99006c"/></linearGradient><linearGradient id="r86" gradientUnits="userSpaceOnUse" x1="1040.0" y1="0" x2="1386.0" y2="0"><stop offset="0.000" stop-color="#001e99"/><stop offset="0.234" stop-color="#040f99"/><stop offset="0.529" stop-color="#4e0099"/><stop offset="0.818" stop-color="#990095"/><stop offset="1.000" stop-color="#99006f"/></linearGradient><linearGradient id="r87" gradientUnits="userSpaceOnUse" x1="1042.0" y1="0" x2="1383.0" y2="0"><stop offset="0.000" stop-color="#001d99"/><stop offset="0.232" stop-color="#040e99"/><stop offset="0.525" stop-color="#4b0099"/><stop offset="0.833" stop-color="#990095"/><stop offset="1.000" stop-color="#990072"/></linearGradient><linearGradient id="r88" gradientUnits="userSpaceOnUse" x1="1044.0" y1="0" x2="1380.0" y2="0"><stop offset="0.000" stop-color="#001c99"/><stop offset="0.232" stop-color="#040d99"/><stop offset="0.521" stop-color="#490099"/><stop offset="0.848" stop-color="#990095"/><stop offset="1.000" stop-color="#990076"/></linearGradient><linearGradient id="r89" gradientUnits="userSpaceOnUse" x1="1046.0" y1="0" x2="1378.0" y2="0"><stop offset="0.000" stop-color="#001a99"/><stop offset="0.232" stop-color="#040c99"/><stop offset="0.515" stop-color="#460099"/><stop offset="0.861" stop-color="#990095"/><stop offset="1.000" stop-color="#990078"/></linearGradient><linearGradient id="r90" gradientUnits="userSpaceOnUse" x1="1047.0" y1="0" x2="1375.0" y2="0"><stop offset="0.000" stop-color="#001999"/><stop offset="0.232" stop-color="#040c99"/><stop offset="0.512" stop-color="#430099"/><stop offset="0.878" stop-color="#990095"/><stop offset="1.000" stop-color="#99007c"/></linearGradient><linearGradient id="r91" gradientUnits="userSpaceOnUse" x1="1049.0" y1="0" x2="1372.0" y2="0"><stop offset="0.000" stop-color="#001899"/><stop offset="0.232" stop-color="#040b99"/><stop offset="0.511" stop-color="#410099"/><stop offset="0.895" stop-color="#990095"/><stop offset="1.000" stop-color="#99007f"/></linearGradient><linearGradient id="r92" gradientUnits="userSpaceOnUse" x1="1051.0" y1="0" x2="1369.0" y2="0"><stop offset="0.000" stop-color="#001799"/><stop offset="0.230" stop-color="#040a99"/><stop offset="0.509" stop-color="#400099"/><stop offset="0.912" stop-color="#990095"/><stop offset="1.000" stop-color="#990083"/></linearGradient><linearGradient id="r93" gradientUnits="userSpaceOnUse" x1="1053.0" y1="0" x2="1366.0" y2="0"><stop offset="0.000" stop-color="#001699"/><stop offset="0.230" stop-color="#040999"/><stop offset="0.511" stop-color="#3f0099"/><stop offset="0.930" stop-color="#990095"/><stop offset="1.000" stop-color="#990087"/></linearGradient><linearGradient id="r94" gradientUnits="userSpaceOnUse" x1="1055.0" y1="0" x2="1363.0" y2="0"><stop offset="0.000" stop-color="#001599"/><stop offset="0.231" stop-color="#050899"/><stop offset="0.516" stop-color="#3e0099"/><stop offset="0.948" stop-color="#990095"/><stop offset="1.000" stop-color="#99008b"/></linearGradient><linearGradient id="r95" gradientUnits="userSpaceOnUse" x1="1057.0" y1="0" x2="1360.0" y2="0"><stop offset="0.000" stop-color="#001499"/><stop offset="0.228" stop-color="#040899"/><stop offset="0.521" stop-color="#3e0099"/><stop offset="0.967" stop-color="#990095"/><stop offset="1.000" stop-color="#99008f"/></linearGradient><linearGradient id="r96" gradientUnits="userSpaceOnUse" x1="1059.0" y1="0" x2="1357.0" y2="0"><stop offset="0.000" stop-color="#001399"/><stop offset="0.228" stop-color="#040799"/><stop offset="0.537" stop-color="#3f0099"/><stop offset="0.987" stop-color="#990095"/><stop offset="1.000" stop-color="#990093"/></linearGradient><linearGradient id="r97" gradientUnits="userSpaceOnUse" x1="1061.0" y1="0" x2="1354.0" y2="0"><stop offset="0.000" stop-color="#001299"/><stop offset="0.225" stop-color="#040699"/><stop offset="0.556" stop-color="#420099"/><stop offset="1.000" stop-color="#990097"/></linearGradient><linearGradient id="r98" gradientUnits="userSpaceOnUse" x1="1063.0" y1="0" x2="1351.0" y2="0"><stop offset="0.000" stop-color="#001199"/><stop offset="0.226" stop-color="#040699"/><stop offset="0.615" stop-color="#4b0099"/><stop offset="1.000" stop-color="#970099"/></linearGradient><linearGradient id="r99" gradientUnits="userSpaceOnUse" x1="1065.0" y1="0" x2="1348.0" y2="0"><stop offset="0.000" stop-color="#001099"/><stop offset="0.223" stop-color="#040599"/><stop offset="0.714" stop-color="#5c0099"/><stop offset="1.000" stop-color="#930099"/></linearGradient><linearGradient id="r100" gradientUnits="userSpaceOnUse" x1="1067.0" y1="0" x2="1345.0" y2="0"><stop offset="0.000" stop-color="#000f99"/><stop offset="0.223" stop-color="#040499"/><stop offset="1.000" stop-color="#8f0099"/></linearGradient><linearGradient id="r101" gradientUnits="userSpaceOnUse" x1="1069.0" y1="0" x2="1343.0" y2="0"><stop offset="0.000" stop-color="#000e99"/><stop offset="0.223" stop-color="#050499"/><stop offset="1.000" stop-color="#8b0099"/></linearGradient><linearGradient id="r102" gradientUnits="userSpaceOnUse" x1="1071.0" y1="0" x2="1340.0" y2="0"><stop offset="0.000" stop-color="#000d99"/><stop offset="0.219" stop-color="#040399"/><stop offset="1.000" stop-color="#870099"/></linearGradient><linearGradient id="r103" gradientUnits="userSpaceOnUse" x1="1073.0" y1="0" x2="1337.0" y2="0"><stop offset="0.000" stop-color="#000c99"/><stop offset="0.220" stop-color="#040299"/><stop offset="1.000" stop-color="#840099"/></linearGradient><linearGradient id="r104" gradientUnits="userSpaceOnUse" x1="1075.0" y1="0" x2="1334.0" y2="0"><stop offset="0.000" stop-color="#000b99"/><stop offset="0.220" stop-color="#050299"/><stop offset="1.000" stop-color="#800099"/></linearGradient><linearGradient id="r105" gradientUnits="userSpaceOnUse" x1="1077.0" y1="0" x2="1331.0" y2="0"><stop offset="0.000" stop-color="#000a99"/><stop offset="0.217" stop-color="#040199"/><stop offset="1.000" stop-color="#7c0099"/></linearGradient><linearGradient id="r106" gradientUnits="userSpaceOnUse" x1="1080.0" y1="0" x2="1328.0" y2="0"><stop offset="0.000" stop-color="#000999"/><stop offset="0.214" stop-color="#050199"/><stop offset="1.000" stop-color="#790099"/></linearGradient><linearGradient id="r107" gradientUnits="userSpaceOnUse" x1="1082.0" y1="0" x2="1325.0" y2="0"><stop offset="0.000" stop-color="#000899"/><stop offset="0.210" stop-color="#040099"/><stop offset="1.000" stop-color="#750099"/></linearGradient><linearGradient id="r108" gradientUnits="userSpaceOnUse" x1="1084.0" y1="0" x2="1322.0" y2="0"><stop offset="0.000" stop-color="#000799"/><stop offset="0.210" stop-color="#050099"/><stop offset="1.000" stop-color="#720099"/></linearGradient><linearGradient id="r109" gradientUnits="userSpaceOnUse" x1="1086.0" y1="0" x2="1319.0" y2="0"><stop offset="0.000" stop-color="#000699"/><stop offset="0.210" stop-color="#050099"/><stop offset="1.000" stop-color="#6e0099"/></linearGradient><linearGradient id="r110" gradientUnits="userSpaceOnUse" x1="1088.0" y1="0" x2="1316.0" y2="0"><stop offset="0.000" stop-color="#000699"/><stop offset="0.211" stop-color="#050099"/><stop offset="1.000" stop-color="#6b0099"/></linearGradient><linearGradient id="r111" gradientUnits="userSpaceOnUse" x1="1091.0" y1="0" x2="1313.0" y2="0"><stop offset="0.000" stop-color="#000599"/><stop offset="0.203" stop-color="#050099"/><stop offset="1.000" stop-color="#680099"/></linearGradient><linearGradient id="r112" gradientUnits="userSpaceOnUse" x1="1093.0" y1="0" x2="1310.0" y2="0"><stop offset="0.000" stop-color="#000499"/><stop offset="0.203" stop-color="#050099"/><stop offset="1.000" stop-color="#650099"/></linearGradient><linearGradient id="r113" gradientUnits="userSpaceOnUse" x1="1095.0" y1="0" x2="1307.0" y2="0"><stop offset="0.000" stop-color="#000399"/><stop offset="0.203" stop-color="#050099"/><stop offset="1.000" stop-color="#620099"/></linearGradient><linearGradient id="r114" gradientUnits="userSpaceOnUse" x1="1098.0" y1="0" x2="1305.0" y2="0"><stop offset="0.000" stop-color="#000299"/><stop offset="0.198" stop-color="#050099"/><stop offset="1.000" stop-color="#600099"/></linearGradient><linearGradient id="r115" gradientUnits="userSpaceOnUse" x1="1100.0" y1="0" x2="1302.0" y2="0"><stop offset="0.000" stop-color="#000299"/><stop offset="0.193" stop-color="#050099"/><stop offset="1.000" stop-color="#5d0099"/></linearGradient><linearGradient id="r116" gradientUnits="userSpaceOnUse" x1="1102.0" y1="0" x2="1299.0" y2="0"><stop offset="0.000" stop-color="#000199"/><stop offset="0.193" stop-color="#050099"/><stop offset="1.000" stop-color="#5a0099"/></linearGradient><linearGradient id="r117" gradientUnits="userSpaceOnUse" x1="1105.0" y1="0" x2="1296.0" y2="0"><stop offset="0.000" stop-color="#000099"/><stop offset="0.188" stop-color="#050099"/><stop offset="1.000" stop-color="#570099"/></linearGradient><linearGradient id="r118" gradientUnits="userSpaceOnUse" x1="1107.0" y1="0" x2="1293.0" y2="0"><stop offset="0.000" stop-color="#000099"/><stop offset="0.194" stop-color="#060099"/><stop offset="1.000" stop-color="#540099"/></linearGradient><linearGradient id="r119" gradientUnits="userSpaceOnUse" x1="1110.0" y1="0" x2="1290.0" y2="0"><stop offset="0.000" stop-color="#000099"/><stop offset="0.189" stop-color="#060099"/><stop offset="1.000" stop-color="#520099"/></linearGradient><linearGradient id="r120" gradientUnits="userSpaceOnUse" x1="1113.0" y1="0" x2="1287.0" y2="0"><stop offset="0.000" stop-color="#000099"/><stop offset="0.190" stop-color="#070099"/><stop offset="1.000" stop-color="#4f0099"/></linearGradient><linearGradient id="r121" gradientUnits="userSpaceOnUse" x1="1115.0" y1="0" x2="1284.0" y2="0"><stop offset="0.000" stop-color="#000099"/><stop offset="0.195" stop-color="#080099"/><stop offset="1.000" stop-color="#4d0099"/></linearGradient><linearGradient id="r122" gradientUnits="userSpaceOnUse" x1="1118.0" y1="0" x2="1281.0" y2="0"><stop offset="0.000" stop-color="#000099"/><stop offset="0.215" stop-color="#0a0099"/><stop offset="1.000" stop-color="#4a0099"/></linearGradient><linearGradient id="r123" gradientUnits="userSpaceOnUse" x1="1121.0" y1="0" x2="1278.0" y2="0"><stop offset="0.000" stop-color="#000099"/><stop offset="0.248" stop-color="#0d0099"/><stop offset="1.000" stop-color="#480099"/></linearGradient><linearGradient id="r124" gradientUnits="userSpaceOnUse" x1="1123.0" y1="0" x2="1275.0" y2="0"><stop offset="0.000" stop-color="#000099"/><stop offset="0.362" stop-color="#150099"/><stop offset="1.000" stop-color="#450099"/></linearGradient><linearGradient id="r125" gradientUnits="userSpaceOnUse" x1="1126.0" y1="0" x2="1272.0" y2="0"><stop offset="0.000" stop-color="#000099"/><stop offset="1.000" stop-color="#430099"/></linearGradient><linearGradient id="r126" gradientUnits="userSpaceOnUse" x1="1129.0" y1="0" x2="1269.0" y2="0"><stop offset="0.000" stop-color="#000099"/><stop offset="1.000" stop-color="#410099"/></linearGradient><linearGradient id="r127" gradientUnits="userSpaceOnUse" x1="1133.0" y1="0" x2="1267.0" y2="0"><stop offset="0.000" stop-color="#000099"/><stop offset="1.000" stop-color="#3f0099"/></linearGradient><linearGradient id="r128" gradientUnits="userSpaceOnUse" x1="1136.0" y1="0" x2="1264.0" y2="0"><stop offset="0.000" stop-color="#000099"/><stop offset="1.000" stop-color="#3d0099"/></linearGradient><linearGradient id="r129" gradientUnits="userSpaceOnUse" x1="1139.0" y1="0" x2="1261.0" y2="0"><stop offset="0.000" stop-color="#010099"/><stop offset="1.000" stop-color="#3a0099"/></linearGradient><linearGradient id="r130" gradientUnits="userSpaceOnUse" x1="1142.0" y1="0" x2="1258.0" y2="0"><stop offset="0.000" stop-color="#030099"/><stop offset="1.000" stop-color="#380099"/></linearGradient><linearGradient id="r131" gradientUnits="userSpaceOnUse" x1="1145.0" y1="0" x2="1255.0" y2="0"><stop offset="0.000" stop-color="#040099"/><stop offset="1.000" stop-color="#360099"/></linearGradient><linearGradient id="r132" gradientUnits="userSpaceOnUse" x1="1149.0" y1="0" x2="1252.0" y2="0"><stop offset="0.000" stop-color="#050099"/><stop offset="1.000" stop-color="#340099"/></linearGradient><linearGradient id="r133" gradientUnits="userSpaceOnUse" x1="1152.0" y1="0" x2="1249.0" y2="0"><stop offset="0.000" stop-color="#060099"/><stop offset="1.000" stop-color="#320099"/></linearGradient><linearGradient id="r134" gradientUnits="userSpaceOnUse" x1="1156.0" y1="0" x2="1246.0" y2="0"><stop offset="0.000" stop-color="#080099"/><stop offset="1.000" stop-color="#300099"/></linearGradient><linearGradient id="r135" gradientUnits="userSpaceOnUse" x1="1159.0" y1="0" x2="1243.0" y2="0"><stop offset="0.000" stop-color="#090099"/><stop offset="1.000" stop-color="#2e0099"/></linearGradient><linearGradient id="r136" gradientUnits="userSpaceOnUse" x1="1163.0" y1="0" x2="1240.0" y2="0"><stop offset="0.000" stop-color="#0a0099"/><stop offset="1.000" stop-color="#2c0099"/></linearGradient><linearGradient id="r137" gradientUnits="userSpaceOnUse" x1="1167.0" y1="0" x2="1237.0" y2="0"><stop offset="0.000" stop-color="#0c0099"/><stop offset="1.000" stop-color="#2a0099"/></linearGradient><linearGradient id="r138" gradientUnits="userSpaceOnUse" x1="1170.0" y1="0" x2="1234.0" y2="0"><stop offset="0.000" stop-color="#0d0099"/><stop offset="1.000" stop-color="#280099"/></linearGradient><linearGradient id="r139" gradientUnits="userSpaceOnUse" x1="1174.0" y1="0" x2="1231.0" y2="0"><stop offset="0.000" stop-color="#0e0099"/><stop offset="1.000" stop-color="#260099"/></linearGradient><linearGradient id="r140" gradientUnits="userSpaceOnUse" x1="1178.0" y1="0" x2="1229.0" y2="0"><stop offset="0.000" stop-color="#0f0099"/><stop offset="1.000" stop-color="#250099"/></linearGradient><linearGradient id="r141" gradientUnits="userSpaceOnUse" x1="1181.0" y1="0" x2="1226.0" y2="0"><stop offset="0.000" stop-color="#100099"/><stop offset="1.000" stop-color="#230099"/></linearGradient><linearGradient id="r142" gradientUnits="userSpaceOnUse" x1="1185.0" y1="0" x2="1223.0" y2="0"><stop offset="0.000" stop-color="#120099"/><stop offset="1.000" stop-color="#220099"/></linearGradient><linearGradient id="r143" gradientUnits="userSpaceOnUse" x1="1188.0" y1="0" x2="1220.0" y2="0"><stop offset="0.000" stop-color="#130099"/><stop offset="1.000" stop-color="#200099"/></linearGradient><linearGradient id="r144" gradientUnits="userSpaceOnUse" x1="1192.0" y1="0" x2="1217.0" y2="0"><stop offset="0.000" stop-color="#140099"/><stop offset="1.000" stop-color="#1e0099"/></linearGradient><linearGradient id="r145" gradientUnits="userSpaceOnUse" x1="1196.0" y1="0" x2="1214.0" y2="0"><stop offset="0.000" stop-color="#150099"/><stop offset="1.000" stop-color="#1d0099"/></linearGradient><linearGradient id="r146" gradientUnits="userSpaceOnUse" x1="1200.0" y1="0" x2="1211.0" y2="0"><stop offset="0.000" stop-color="#160099"/><stop offset="1.000" stop-color="#1b0099"/></linearGradient><linearGradient id="r147" gradientUnits="userSpaceOnUse" x1="1074.0" y1="0" x2="1097.0" y2="0"><stop offset="0.000" stop-color="#00ff02"/><stop offset="0.391" stop-color="#11ff00"/><stop offset="1.000" stop-color="#37ff00"/></linearGradient><linearGradient id="r148" gradientUnits="userSpaceOnUse" x1="1074.0" y1="0" x2="1118.0" y2="0"><stop offset="0.000" stop-color="#00ff07"/><stop offset="0.182" stop-color="#0eff05"/><stop offset="1.000" stop-color="#76ff00"/></linearGradient><linearGradient id="r149" gradientUnits="userSpaceOnUse" x1="1074.0" y1="0" x2="1140.0" y2="0"><stop offset="0.000" stop-color="#00ff0b"/><stop offset="0.091" stop-color="#08ff0a"/><stop offset="0.727" stop-color="#83ff01"/><stop offset="1.000" stop-color="#c3ff00"/></linearGradient><linearGradient id="r150" gradientUnits="userSpaceOnUse" x1="1074.0" y1="0" x2="1161.0" y2="0"><stop offset="0.000" stop-color="#00ff10"/><stop offset="0.069" stop-color="#07ff0f"/><stop offset="0.540" stop-color="#80ff07"/><stop offset="0.931" stop-color="#ffff00"/><stop offset="1.000" stop-color="#ffe800"/></linearGradient><linearGradient id="r151" gradientUnits="userSpaceOnUse" x1="1075.0" y1="0" x2="1183.0" y2="0"><stop offset="0.000" stop-color="#00ff15"/><stop offset="0.074" stop-color="#0fff14"/><stop offset="0.454" stop-color="#8aff0c"/><stop offset="0.741" stop-color="#fffe04"/><stop offset="0.926" stop-color="#ffbb00"/><stop offset="1.000" stop-color="#ffa700"/></linearGradient><linearGradient id="r152" gradientUnits="userSpaceOnUse" x1="1075.0" y1="0" x2="1204.0" y2="0"><stop offset="0.000" stop-color="#00ff1a"/><stop offset="0.047" stop-color="#08ff19"/><stop offset="0.364" stop-color="#83ff12"/><stop offset="0.620" stop-color="#fffd0a"/><stop offset="0.775" stop-color="#ffba04"/><stop offset="1.000" stop-color="#ff7f00"/></linearGradient><linearGradient id="r153" gradientUnits="userSpaceOnUse" x1="1075.0" y1="0" x2="1225.0" y2="0"><stop offset="0.000" stop-color="#00ff1f"/><stop offset="0.040" stop-color="#08ff1e"/><stop offset="0.313" stop-color="#83ff17"/><stop offset="0.533" stop-color="#fffd11"/><stop offset="0.667" stop-color="#ffb909"/><stop offset="0.860" stop-color="#ff7e01"/><stop offset="1.000" stop-color="#ff6100"/></linearGradient><linearGradient id="r154" gradientUnits="userSpaceOnUse" x1="1076.0" y1="0" x2="1247.0" y2="0"><stop offset="0.000" stop-color="#00ff24"/><stop offset="0.047" stop-color="#0fff23"/><stop offset="0.281" stop-color="#89ff1d"/><stop offset="0.462" stop-color="#fffc17"/><stop offset="0.579" stop-color="#ffb80d"/><stop offset="0.749" stop-color="#ff7d05"/><stop offset="1.000" stop-color="#ff4a00"/></linearGradient><linearGradient id="r155" gradientUnits="userSpaceOnUse" x1="1076.0" y1="0" x2="1268.0" y2="0"><stop offset="0.000" stop-color="#00ff29"/><stop offset="0.031" stop-color="#09ff28"/><stop offset="0.240" stop-color="#82ff23"/><stop offset="0.411" stop-color="#fffb1d"/><stop offset="0.516" stop-color="#ffb812"/><stop offset="0.667" stop-color="#ff7c09"/><stop offset="0.901" stop-color="#ff4801"/><stop offset="1.000" stop-color="#ff3900"/></linearGradient><linearGradient id="r156" gradientUnits="userSpaceOnUse" x1="1076.0" y1="0" x2="1290.0" y2="0"><stop offset="0.000" stop-color="#00ff2e"/><stop offset="0.028" stop-color="#08ff2d"/><stop offset="0.215" stop-color="#82ff29"/><stop offset="0.364" stop-color="#fffe24"/><stop offset="0.453" stop-color="#ffbc18"/><stop offset="0.584" stop-color="#ff800e"/><stop offset="0.785" stop-color="#ff4c04"/><stop offset="1.000" stop-color="#ff2b00"/></linearGradient><linearGradient id="r157" gradientUnits="userSpaceOnUse" x1="1077.0" y1="0" x2="1311.0" y2="0"><stop offset="0.000" stop-color="#00ff33"/><stop offset="0.030" stop-color="#0dff32"/><stop offset="0.197" stop-color="#86ff2f"/><stop offset="0.329" stop-color="#fffe2b"/><stop offset="0.410" stop-color="#ffbb1e"/><stop offset="0.530" stop-color="#ff7f12"/><stop offset="0.714" stop-color="#ff4b07"/><stop offset="1.000" stop-color="#ff2000"/></linearGradient><linearGradient id="r158" gradientUnits="userSpaceOnUse" x1="1077.0" y1="0" x2="1332.0" y2="0"><stop offset="0.000" stop-color="#00ff38"/><stop offset="0.024" stop-color="#09ff38"/><stop offset="0.176" stop-color="#82ff35"/><stop offset="0.302" stop-color="#fffd31"/><stop offset="0.376" stop-color="#ffba23"/><stop offset="0.486" stop-color="#ff7e16"/><stop offset="0.655" stop-color="#ff4a0a"/><stop offset="0.933" stop-color="#ff1e00"/><stop offset="1.000" stop-color="#ff1700"/></linearGradient><linearGradient id="r159" gradientUnits="userSpaceOnUse" x1="1077.0" y1="0" x2="1354.0" y2="0"><stop offset="0.000" stop-color="#00ff3d"/><stop offset="0.018" stop-color="#05ff3d"/><stop offset="0.159" stop-color="#7eff3b"/><stop offset="0.278" stop-color="#fffc38"/><stop offset="0.347" stop-color="#ffb928"/><stop offset="0.448" stop-color="#ff7e1a"/><stop offset="0.603" stop-color="#ff490d"/><stop offset="0.859" stop-color="#ff1d02"/><stop offset="1.000" stop-color="#ff0e00"/></linearGradient><linearGradient id="r160" gradientUnits="userSpaceOnUse" x1="1078.0" y1="0" x2="1375.0" y2="0"><stop offset="0.000" stop-color="#00ff43"/><stop offset="0.024" stop-color="#0dff43"/><stop offset="0.152" stop-color="#86ff41"/><stop offset="0.256" stop-color="#fffb3f"/><stop offset="0.320" stop-color="#ffb92d"/><stop offset="0.414" stop-color="#ff7d1e"/><stop offset="0.559" stop-color="#ff4910"/><stop offset="0.798" stop-color="#ff1c04"/><stop offset="1.000" stop-color="#ff0800"/></linearGradient><linearGradient id="r161" gradientUnits="userSpaceOnUse" x1="1078.0" y1="0" x2="1397.0" y2="0"><stop offset="0.000" stop-color="#00ff48"/><stop offset="0.019" stop-color="#09ff48"/><stop offset="0.138" stop-color="#82ff47"/><stop offset="0.235" stop-color="#ffff47"/><stop offset="0.295" stop-color="#ffba33"/><stop offset="0.379" stop-color="#ff7f23"/><stop offset="0.511" stop-color="#ff4b14"/><stop offset="0.727" stop-color="#ff1e07"/><stop offset="1.000" stop-color="#ff0200"/></linearGradient><linearGradient id="r162" gradientUnits="userSpaceOnUse" x1="1078.0" y1="0" x2="1404.0" y2="0"><stop offset="0.000" stop-color="#00ff4e"/><stop offset="0.015" stop-color="#06ff4e"/><stop offset="0.132" stop-color="#7eff4e"/><stop offset="0.230" stop-color="#fffe4e"/><stop offset="0.288" stop-color="#ffba39"/><stop offset="0.371" stop-color="#ff7e27"/><stop offset="0.500" stop-color="#ff4a17"/><stop offset="0.712" stop-color="#ff1d09"/><stop offset="1.000" stop-color="#ff0000"/></linearGradient><linearGradient id="r163" gradientUnits="userSpaceOnUse" x1="1079.0" y1="0" x2="1403.0" y2="0"><stop offset="0.000" stop-color="#00ff53"/><stop offset="0.022" stop-color="#0dff54"/><stop offset="0.139" stop-color="#89ff54"/><stop offset="0.228" stop-color="#fffd55"/><stop offset="0.284" stop-color="#ffbb3f"/><stop offset="0.367" stop-color="#ff7f2b"/><stop offset="0.494" stop-color="#ff4b1a"/><stop offset="0.704" stop-color="#ff1e0c"/><stop offset="1.000" stop-color="#ff0002"/></linearGradient><linearGradient id="r164" gradientUnits="userSpaceOnUse" x1="1079.0" y1="0" x2="1401.0" y2="0"><stop offset="0.000" stop-color="#00ff59"/><stop offset="0.019" stop-color="#0aff59"/><stop offset="0.134" stop-color="#81ff5b"/><stop offset="0.230" stop-color="#fffc5c"/><stop offset="0.286" stop-color="#ffbb45"/><stop offset="0.370" stop-color="#ff7e30"/><stop offset="0.497" stop-color="#ff4a1d"/><stop offset="0.708" stop-color="#ff1e0e"/><stop offset="1.000" stop-color="#ff0003"/></linearGradient><linearGradient id="r165" gradientUnits="userSpaceOnUse" x1="1079.0" y1="0" x2="1399.0" y2="0"><stop offset="0.000" stop-color="#00ff5f"/><stop offset="0.016" stop-color="#06ff5f"/><stop offset="0.131" stop-color="#7eff62"/><stop offset="0.231" stop-color="#fffb63"/><stop offset="0.287" stop-color="#ffba4a"/><stop offset="0.372" stop-color="#ff7d34"/><stop offset="0.500" stop-color="#ff4921"/><stop offset="0.713" stop-color="#ff1d10"/><stop offset="1.000" stop-color="#ff0005"/></linearGradient><linearGradient id="r166" gradientUnits="userSpaceOnUse" x1="1080.0" y1="0" x2="1397.0" y2="0"><stop offset="0.000" stop-color="#00ff65"/><stop offset="0.022" stop-color="#0eff65"/><stop offset="0.139" stop-color="#89ff69"/><stop offset="0.227" stop-color="#ffff6c"/><stop offset="0.284" stop-color="#ffbc51"/><stop offset="0.366" stop-color="#ff8039"/><stop offset="0.492" stop-color="#ff4b25"/><stop offset="0.700" stop-color="#ff1f13"/><stop offset="1.000" stop-color="#ff0007"/></linearGradient><linearGradient id="r167" gradientUnits="userSpaceOnUse" x1="1080.0" y1="0" x2="1395.0" y2="0"><stop offset="0.000" stop-color="#00ff6b"/><stop offset="0.019" stop-color="#0aff6b"/><stop offset="0.137" stop-color="#85ff6f"/><stop offset="0.229" stop-color="#fffe73"/><stop offset="0.286" stop-color="#ffbb57"/><stop offset="0.368" stop-color="#ff7f3e"/><stop offset="0.495" stop-color="#ff4b28"/><stop offset="0.705" stop-color="#ff1e15"/><stop offset="1.000" stop-color="#ff0008"/></linearGradient><linearGradient id="r168" gradientUnits="userSpaceOnUse" x1="1080.0" y1="0" x2="1393.0" y2="0"><stop offset="0.000" stop-color="#00ff71"/><stop offset="0.016" stop-color="#06ff71"/><stop offset="0.134" stop-color="#81ff76"/><stop offset="0.230" stop-color="#fffd7b"/><stop offset="0.288" stop-color="#ffba5d"/><stop offset="0.371" stop-color="#ff7e42"/><stop offset="0.498" stop-color="#ff4a2b"/><stop offset="0.709" stop-color="#ff1d17"/><stop offset="1.000" stop-color="#ff000a"/></linearGradient><linearGradient id="r169" gradientUnits="userSpaceOnUse" x1="1081.0" y1="0" x2="1391.0" y2="0"><stop offset="0.000" stop-color="#00ff77"/><stop offset="0.023" stop-color="#0eff78"/><stop offset="0.139" stop-color="#89ff7e"/><stop offset="0.229" stop-color="#fffc82"/><stop offset="0.287" stop-color="#ffb962"/><stop offset="0.371" stop-color="#ff7d47"/><stop offset="0.500" stop-color="#ff492e"/><stop offset="0.713" stop-color="#ff1d1a"/><stop offset="1.000" stop-color="#ff000c"/></linearGradient><linearGradient id="r170" gradientUnits="userSpaceOnUse" x1="1081.0" y1="0" x2="1389.0" y2="0"><stop offset="0.000" stop-color="#00ff7d"/><stop offset="0.019" stop-color="#0aff7e"/><stop offset="0.136" stop-color="#85ff85"/><stop offset="0.231" stop-color="#fffb8a"/><stop offset="0.289" stop-color="#ffb868"/><stop offset="0.373" stop-color="#ff7c4b"/><stop offset="0.503" stop-color="#ff4832"/><stop offset="0.718" stop-color="#ff1c1c"/><stop offset="1.000" stop-color="#ff000e"/></linearGradient><linearGradient id="r171" gradientUnits="userSpaceOnUse" x1="1081.0" y1="0" x2="1387.0" y2="0"><stop offset="0.000" stop-color="#00ff83"/><stop offset="0.016" stop-color="#06ff84"/><stop offset="0.134" stop-color="#81ff8c"/><stop offset="0.229" stop-color="#ffff94"/><stop offset="0.288" stop-color="#ffba70"/><stop offset="0.369" stop-color="#ff7f51"/><stop offset="0.497" stop-color="#ff4a36"/><stop offset="0.706" stop-color="#ff1e1f"/><stop offset="1.000" stop-color="#ff000f"/></linearGradient><linearGradient id="r172" gradientUnits="userSpaceOnUse" x1="1082.0" y1="0" x2="1385.0" y2="0"><stop offset="0.000" stop-color="#00ff8a"/><stop offset="0.020" stop-color="#0bff8b"/><stop offset="0.135" stop-color="#84ff93"/><stop offset="0.228" stop-color="#fffe9c"/><stop offset="0.284" stop-color="#ffbc78"/><stop offset="0.366" stop-color="#ff8057"/><stop offset="0.492" stop-color="#ff4c3b"/><stop offset="0.700" stop-color="#ff1f22"/><stop offset="1.000" stop-color="#ff0011"/></linearGradient><linearGradient id="r173" gradientUnits="userSpaceOnUse" x1="1082.0" y1="0" x2="1383.0" y2="0"><stop offset="0.000" stop-color="#00ff90"/><stop offset="0.020" stop-color="#0aff92"/><stop offset="0.136" stop-color="#84ff9b"/><stop offset="0.229" stop-color="#fffda4"/><stop offset="0.286" stop-color="#ffbb7e"/><stop offset="0.369" stop-color="#ff7f5c"/><stop offset="0.495" stop-color="#ff4b3e"/><stop offset="0.704" stop-color="#ff1e25"/><stop offset="1.000" stop-color="#ff0013"/></linearGradient><linearGradient id="r174" gradientUnits="userSpaceOnUse" x1="1082.0" y1="0" x2="1381.0" y2="0"><stop offset="0.000" stop-color="#00ff97"/><stop offset="0.017" stop-color="#06ff98"/><stop offset="0.134" stop-color="#80ffa2"/><stop offset="0.231" stop-color="#fffdac"/><stop offset="0.288" stop-color="#ffba84"/><stop offset="0.371" stop-color="#ff7e60"/><stop offset="0.498" stop-color="#ff4a41"/><stop offset="0.709" stop-color="#ff1e27"/><stop offset="1.000" stop-color="#ff0015"/></linearGradient><linearGradient id="r175" gradientUnits="userSpaceOnUse" x1="1083.0" y1="0" x2="1379.0" y2="0"><stop offset="0.000" stop-color="#00ff9e"/><stop offset="0.020" stop-color="#0cff9f"/><stop offset="0.135" stop-color="#84ffaa"/><stop offset="0.230" stop-color="#fffcb4"/><stop offset="0.287" stop-color="#ffb98a"/><stop offset="0.372" stop-color="#ff7d65"/><stop offset="0.500" stop-color="#ff4945"/><stop offset="0.713" stop-color="#ff1d29"/><stop offset="1.000" stop-color="#ff0017"/></linearGradient><linearGradient id="r176" gradientUnits="userSpaceOnUse" x1="1083.0" y1="0" x2="1377.0" y2="0"><stop offset="0.000" stop-color="#00ffa4"/><stop offset="0.020" stop-color="#0bffa6"/><stop offset="0.136" stop-color="#84ffb2"/><stop offset="0.228" stop-color="#feffbf"/><stop offset="0.286" stop-color="#ffbb92"/><stop offset="0.367" stop-color="#ff806c"/><stop offset="0.493" stop-color="#ff4b4a"/><stop offset="0.701" stop-color="#ff1f2d"/><stop offset="1.000" stop-color="#ff0019"/></linearGradient><linearGradient id="r177" gradientUnits="userSpaceOnUse" x1="1083.0" y1="0" x2="1375.0" y2="0"><stop offset="0.000" stop-color="#00ffab"/><stop offset="0.017" stop-color="#07ffad"/><stop offset="0.134" stop-color="#80ffba"/><stop offset="0.229" stop-color="#ffffc7"/><stop offset="0.284" stop-color="#ffbd9b"/><stop offset="0.366" stop-color="#ff8172"/><stop offset="0.490" stop-color="#ff4d4f"/><stop offset="0.692" stop-color="#ff2031"/><stop offset="1.000" stop-color="#ff001b"/></linearGradient><linearGradient id="r178" gradientUnits="userSpaceOnUse" x1="1084.0" y1="0" x2="1373.0" y2="0"><stop offset="0.000" stop-color="#00ffb2"/><stop offset="0.017" stop-color="#09ffb4"/><stop offset="0.135" stop-color="#84ffc2"/><stop offset="0.228" stop-color="#fffed0"/><stop offset="0.284" stop-color="#ffbca2"/><stop offset="0.367" stop-color="#ff8077"/><stop offset="0.491" stop-color="#ff4c53"/><stop offset="0.699" stop-color="#ff1f33"/><stop offset="1.000" stop-color="#ff001d"/></linearGradient><linearGradient id="r179" gradientUnits="userSpaceOnUse" x1="1084.0" y1="0" x2="1372.0" y2="0"><stop offset="0.000" stop-color="#00ffb9"/><stop offset="0.021" stop-color="#0bffbc"/><stop offset="0.135" stop-color="#84ffcb"/><stop offset="0.229" stop-color="#fffdd8"/><stop offset="0.285" stop-color="#ffbba8"/><stop offset="0.368" stop-color="#ff7f7c"/><stop offset="0.493" stop-color="#ff4b56"/><stop offset="0.701" stop-color="#ff1e36"/><stop offset="1.000" stop-color="#ff001f"/></linearGradient><linearGradient id="r180" gradientUnits="userSpaceOnUse" x1="1084.0" y1="0" x2="1370.0" y2="0"><stop offset="0.000" stop-color="#00ffc1"/><stop offset="0.017" stop-color="#07ffc3"/><stop offset="0.133" stop-color="#7fffd3"/><stop offset="0.231" stop-color="#fffce1"/><stop offset="0.287" stop-color="#ffbaaf"/><stop offset="0.371" stop-color="#ff7e81"/><stop offset="0.497" stop-color="#ff4a5a"/><stop offset="0.706" stop-color="#ff1e38"/><stop offset="1.000" stop-color="#ff0021"/></linearGradient><linearGradient id="r181" gradientUnits="userSpaceOnUse" x1="1084.0" y1="0" x2="1368.0" y2="0"><stop offset="0.000" stop-color="#00ffc8"/><stop offset="0.018" stop-color="#06ffca"/><stop offset="0.134" stop-color="#7fffdb"/><stop offset="0.229" stop-color="#feffed"/><stop offset="0.289" stop-color="#ffb9b6"/><stop offset="0.370" stop-color="#ff7f88"/><stop offset="0.496" stop-color="#ff4a5e"/><stop offset="0.704" stop-color="#ff1e3c"/><stop offset="1.000" stop-color="#ff0023"/></linearGradient><linearGradient id="r182" gradientUnits="userSpaceOnUse" x1="1085.0" y1="0" x2="1366.0" y2="0"><stop offset="0.000" stop-color="#00ffd0"/><stop offset="0.018" stop-color="#08ffd2"/><stop offset="0.135" stop-color="#83ffe4"/><stop offset="0.228" stop-color="#fffff7"/><stop offset="0.285" stop-color="#ffbbbf"/><stop offset="0.367" stop-color="#ff808e"/><stop offset="0.491" stop-color="#ff4c64"/><stop offset="0.698" stop-color="#ff1f3f"/><stop offset="1.000" stop-color="#ff0025"/></linearGradient><linearGradient id="r183" gradientUnits="userSpaceOnUse" x1="1085.0" y1="0" x2="1364.0" y2="0"><stop offset="0.000" stop-color="#00ffd7"/><stop offset="0.018" stop-color="#07ffda"/><stop offset="0.133" stop-color="#7fffed"/><stop offset="0.229" stop-color="#fefdff"/><stop offset="0.290" stop-color="#ffb7c3"/><stop offset="0.373" stop-color="#ff7d92"/><stop offset="0.502" stop-color="#ff4966"/><stop offset="0.713" stop-color="#ff1d41"/><stop offset="1.000" stop-color="#ff0027"/></linearGradient><linearGradient id="r184" gradientUnits="userSpaceOnUse" x1="1085.0" y1="0" x2="1362.0" y2="0"><stop offset="0.000" stop-color="#00ffdf"/><stop offset="0.018" stop-color="#06ffe1"/><stop offset="0.134" stop-color="#7ffff5"/><stop offset="0.209" stop-color="#dbf8ff"/><stop offset="0.242" stop-color="#ffeefc"/><stop offset="0.303" stop-color="#ffacc2"/><stop offset="0.394" stop-color="#ff728f"/><stop offset="0.534" stop-color="#ff4063"/><stop offset="0.769" stop-color="#ff153d"/><stop offset="1.000" stop-color="#ff002a"/></linearGradient><linearGradient id="r185" gradientUnits="userSpaceOnUse" x1="1086.0" y1="0" x2="1360.0" y2="0"><stop offset="0.000" stop-color="#00ffe7"/><stop offset="0.018" stop-color="#08ffea"/><stop offset="0.142" stop-color="#8bfdff"/><stop offset="0.248" stop-color="#ffe3fc"/><stop offset="0.314" stop-color="#ffa2c1"/><stop offset="0.409" stop-color="#ff6a8e"/><stop offset="0.558" stop-color="#ff3961"/><stop offset="0.814" stop-color="#ff103b"/><stop offset="1.000" stop-color="#ff002c"/></linearGradient><linearGradient id="r186" gradientUnits="userSpaceOnUse" x1="1086.0" y1="0" x2="1358.0" y2="0"><stop offset="0.000" stop-color="#00ffef"/><stop offset="0.018" stop-color="#07fff2"/><stop offset="0.118" stop-color="#6bf9ff"/><stop offset="0.257" stop-color="#ffd9fc"/><stop offset="0.327" stop-color="#ff99bf"/><stop offset="0.430" stop-color="#ff628b"/><stop offset="0.592" stop-color="#ff325e"/><stop offset="0.875" stop-color="#ff0a38"/><stop offset="1.000" stop-color="#ff002e"/></linearGradient><linearGradient id="r187" gradientUnits="userSpaceOnUse" x1="1086.0" y1="0" x2="1356.0" y2="0"><stop offset="0.000" stop-color="#00fff7"/><stop offset="0.019" stop-color="#06fffa"/><stop offset="0.133" stop-color="#76eeff"/><stop offset="0.267" stop-color="#ffd0fc"/><stop offset="0.337" stop-color="#ff93c1"/><stop offset="0.444" stop-color="#ff5c8b"/><stop offset="0.615" stop-color="#ff2d5e"/><stop offset="0.915" stop-color="#ff0637"/><stop offset="1.000" stop-color="#ff0031"/></linearGradient><linearGradient id="r188" gradientUnits="userSpaceOnUse" x1="1087.0" y1="0" x2="1354.0" y2="0"><stop offset="0.000" stop-color="#00ffff"/><stop offset="0.019" stop-color="#09fbff"/><stop offset="0.243" stop-color="#e2cfff"/><stop offset="0.273" stop-color="#ffc7fc"/><stop offset="0.348" stop-color="#ff8ac0"/><stop offset="0.461" stop-color="#ff568a"/><stop offset="0.644" stop-color="#ff285c"/><stop offset="0.970" stop-color="#ff0135"/><stop offset="1.000" stop-color="#ff0033"/></linearGradient><linearGradient id="r189" gradientUnits="userSpaceOnUse" x1="1087.0" y1="0" x2="1352.0" y2="0"><stop offset="0.000" stop-color="#00f7ff"/><stop offset="0.019" stop-color="#07f3ff"/><stop offset="0.253" stop-color="#e3c6ff"/><stop offset="0.283" stop-color="#ffbefc"/><stop offset="0.362" stop-color="#ff83be"/><stop offset="0.483" stop-color="#ff4e88"/><stop offset="0.675" stop-color="#ff225a"/><stop offset="1.000" stop-color="#ff0035"/></linearGradient><linearGradient id="r190" gradientUnits="userSpaceOnUse" x1="1087.0" y1="0" x2="1350.0" y2="0"><stop offset="0.000" stop-color="#00efff"/><stop offset="0.019" stop-color="#06ecff"/><stop offset="0.259" stop-color="#e0bfff"/><stop offset="0.293" stop-color="#ffb6fc"/><stop offset="0.373" stop-color="#ff7dc0"/><stop offset="0.494" stop-color="#ff4b8a"/><stop offset="0.692" stop-color="#ff205b"/><stop offset="1.000" stop-color="#ff0038"/></linearGradient><linearGradient id="r191" gradientUnits="userSpaceOnUse" x1="1088.0" y1="0" x2="1348.0" y2="0"><stop offset="0.000" stop-color="#00e7ff"/><stop offset="0.023" stop-color="#0be3ff"/><stop offset="0.273" stop-color="#e8b5ff"/><stop offset="0.300" stop-color="#ffaefc"/><stop offset="0.385" stop-color="#ff76bf"/><stop offset="0.512" stop-color="#ff4689"/><stop offset="0.715" stop-color="#ff1c5b"/><stop offset="1.000" stop-color="#ff003a"/></linearGradient><linearGradient id="r192" gradientUnits="userSpaceOnUse" x1="1088.0" y1="0" x2="1346.0" y2="0"><stop offset="0.000" stop-color="#00e0ff"/><stop offset="0.019" stop-color="#07ddff"/><stop offset="0.275" stop-color="#e1afff"/><stop offset="0.310" stop-color="#ffa6fd"/><stop offset="0.395" stop-color="#ff71c0"/><stop offset="0.523" stop-color="#ff438a"/><stop offset="0.733" stop-color="#ff1a5c"/><stop offset="1.000" stop-color="#ff003d"/></linearGradient><linearGradient id="r193" gradientUnits="userSpaceOnUse" x1="1088.0" y1="0" x2="1344.0" y2="0"><stop offset="0.000" stop-color="#00daff"/><stop offset="0.020" stop-color="#06d6ff"/><stop offset="0.285" stop-color="#e2a7ff"/><stop offset="0.320" stop-color="#ff9ffd"/><stop offset="0.410" stop-color="#ff6bbf"/><stop offset="0.543" stop-color="#ff3d89"/><stop offset="0.758" stop-color="#ff175b"/><stop offset="1.000" stop-color="#ff0040"/></linearGradient><linearGradient id="r194" gradientUnits="userSpaceOnUse" x1="1089.0" y1="0" x2="1342.0" y2="0"><stop offset="0.000" stop-color="#00d3ff"/><stop offset="0.024" stop-color="#0bcfff"/><stop offset="0.296" stop-color="#e69fff"/><stop offset="0.328" stop-color="#ff98fd"/><stop offset="0.419" stop-color="#ff66c0"/><stop offset="0.557" stop-color="#ff3a8a"/><stop offset="0.779" stop-color="#ff145c"/><stop offset="1.000" stop-color="#ff0042"/></linearGradient><linearGradient id="r195" gradientUnits="userSpaceOnUse" x1="1089.0" y1="0" x2="1340.0" y2="0"><stop offset="0.000" stop-color="#00cdff"/><stop offset="0.024" stop-color="#0ac9ff"/><stop offset="0.307" stop-color="#e699ff"/><stop offset="0.339" stop-color="#ff91fd"/><stop offset="0.434" stop-color="#ff60bf"/><stop offset="0.578" stop-color="#ff3589"/><stop offset="0.809" stop-color="#ff105b"/><stop offset="1.000" stop-color="#ff0045"/></linearGradient><linearGradient id="r196" gradientUnits="userSpaceOnUse" x1="1089.0" y1="0" x2="1338.0" y2="0"><stop offset="0.000" stop-color="#00c7ff"/><stop offset="0.020" stop-color="#06c4ff"/><stop offset="0.309" stop-color="#e093ff"/><stop offset="0.349" stop-color="#ff8bfd"/><stop offset="0.446" stop-color="#ff5cc0"/><stop offset="0.590" stop-color="#ff328a"/><stop offset="0.827" stop-color="#ff0e5c"/><stop offset="1.000" stop-color="#ff0048"/></linearGradient><linearGradient id="r197" gradientUnits="userSpaceOnUse" x1="1090.0" y1="0" x2="1336.0" y2="0"><stop offset="0.000" stop-color="#00c1ff"/><stop offset="0.028" stop-color="#0dbcff"/><stop offset="0.325" stop-color="#e78cff"/><stop offset="0.358" stop-color="#ff85fd"/><stop offset="0.459" stop-color="#ff56bf"/><stop offset="0.610" stop-color="#ff2e89"/><stop offset="0.854" stop-color="#ff0c5b"/><stop offset="1.000" stop-color="#ff004b"/></linearGradient><linearGradient id="r198" gradientUnits="userSpaceOnUse" x1="1090.0" y1="0" x2="1334.0" y2="0"><stop offset="0.000" stop-color="#00bbff"/><stop offset="0.025" stop-color="#09b8ff"/><stop offset="0.332" stop-color="#e486ff"/><stop offset="0.369" stop-color="#ff7ffd"/><stop offset="0.471" stop-color="#ff52c0"/><stop offset="0.627" stop-color="#ff2b8a"/><stop offset="0.877" stop-color="#ff095c"/><stop offset="1.000" stop-color="#ff004d"/></linearGradient><linearGradient id="r199" gradientUnits="userSpaceOnUse" x1="1090.0" y1="0" x2="1332.0" y2="0"><stop offset="0.000" stop-color="#00b6ff"/><stop offset="0.025" stop-color="#08b3ff"/><stop offset="0.339" stop-color="#e281ff"/><stop offset="0.380" stop-color="#ff79fd"/><stop offset="0.488" stop-color="#ff4dbf"/><stop offset="0.649" stop-color="#ff2789"/><stop offset="0.909" stop-color="#ff065b"/><stop offset="1.000" stop-color="#ff0050"/></linearGradient><linearGradient id="r200" gradientUnits="userSpaceOnUse" x1="1091.0" y1="0" x2="1330.0" y2="0"><stop offset="0.000" stop-color="#00b1ff"/><stop offset="0.033" stop-color="#0facff"/><stop offset="0.360" stop-color="#eb7aff"/><stop offset="0.393" stop-color="#ff72fa"/><stop offset="0.506" stop-color="#ff47bc"/><stop offset="0.674" stop-color="#ff2387"/><stop offset="0.946" stop-color="#ff0359"/><stop offset="1.000" stop-color="#ff0053"/></linearGradient><linearGradient id="r201" gradientUnits="userSpaceOnUse" x1="1091.0" y1="0" x2="1328.0" y2="0"><stop offset="0.000" stop-color="#00acff"/><stop offset="0.030" stop-color="#0ba8ff"/><stop offset="0.363" stop-color="#e676ff"/><stop offset="0.405" stop-color="#ff6dfa"/><stop offset="0.519" stop-color="#ff44bd"/><stop offset="0.692" stop-color="#ff2087"/><stop offset="0.970" stop-color="#ff015a"/><stop offset="1.000" stop-color="#ff0056"/></linearGradient><linearGradient id="r202" gradientUnits="userSpaceOnUse" x1="1091.0" y1="0" x2="1326.0" y2="0"><stop offset="0.000" stop-color="#00a7ff"/><stop offset="0.026" stop-color="#08a4ff"/><stop offset="0.370" stop-color="#e371ff"/><stop offset="0.417" stop-color="#ff68fa"/><stop offset="0.532" stop-color="#ff40be"/><stop offset="0.706" stop-color="#ff1e89"/><stop offset="0.991" stop-color="#ff005a"/><stop offset="1.000" stop-color="#ff0059"/></linearGradient><linearGradient id="r203" gradientUnits="userSpaceOnUse" x1="1092.0" y1="0" x2="1324.0" y2="0"><stop offset="0.000" stop-color="#00a3ff"/><stop offset="0.043" stop-color="#139dff"/><stop offset="0.397" stop-color="#ef69ff"/><stop offset="0.427" stop-color="#ff63fb"/><stop offset="0.547" stop-color="#ff3cbd"/><stop offset="0.728" stop-color="#ff1a88"/><stop offset="1.000" stop-color="#ff005d"/></linearGradient><linearGradient id="r204" gradientUnits="userSpaceOnUse" x1="1092.0" y1="0" x2="1322.0" y2="0"><stop offset="0.000" stop-color="#009eff"/><stop offset="0.035" stop-color="#0d9aff"/><stop offset="0.400" stop-color="#ea66ff"/><stop offset="0.439" stop-color="#ff5efb"/><stop offset="0.561" stop-color="#ff39be"/><stop offset="0.748" stop-color="#ff1888"/><stop offset="1.000" stop-color="#ff0060"/></linearGradient><linearGradient id="r205" gradientUnits="userSpaceOnUse" x1="1092.0" y1="0" x2="1320.0" y2="0"><stop offset="0.000" stop-color="#009aff"/><stop offset="0.026" stop-color="#0797ff"/><stop offset="0.399" stop-color="#e263ff"/><stop offset="0.452" stop-color="#ff5afb"/><stop offset="0.579" stop-color="#ff35bd"/><stop offset="0.772" stop-color="#ff1588"/><stop offset="1.000" stop-color="#ff0063"/></linearGradient><linearGradient id="r206" gradientUnits="userSpaceOnUse" x1="1093.0" y1="0" x2="1319.0" y2="0"><stop offset="0.000" stop-color="#0096ff"/><stop offset="0.049" stop-color="#1590ff"/><stop offset="0.429" stop-color="#f05bff"/><stop offset="0.460" stop-color="#ff55fb"/><stop offset="0.588" stop-color="#ff32be"/><stop offset="0.783" stop-color="#ff1389"/><stop offset="1.000" stop-color="#ff0066"/></linearGradient><linearGradient id="r207" gradientUnits="userSpaceOnUse" x1="1093.0" y1="0" x2="1317.0" y2="0"><stop offset="0.000" stop-color="#0092ff"/><stop offset="0.040" stop-color="#0f8dff"/><stop offset="0.433" stop-color="#eb58ff"/><stop offset="0.473" stop-color="#ff51fb"/><stop offset="0.607" stop-color="#ff2ebe"/><stop offset="0.808" stop-color="#ff1088"/><stop offset="1.000" stop-color="#ff0069"/></linearGradient><linearGradient id="r208" gradientUnits="userSpaceOnUse" x1="1093.0" y1="0" x2="1315.0" y2="0"><stop offset="0.000" stop-color="#008eff"/><stop offset="0.032" stop-color="#098aff"/><stop offset="0.437" stop-color="#e655ff"/><stop offset="0.486" stop-color="#ff4dfb"/><stop offset="0.622" stop-color="#ff2cbe"/><stop offset="0.829" stop-color="#ff0e88"/><stop offset="1.000" stop-color="#ff006d"/></linearGradient><linearGradient id="r209" gradientUnits="userSpaceOnUse" x1="1094.0" y1="0" x2="1313.0" y2="0"><stop offset="0.000" stop-color="#008aff"/><stop offset="0.064" stop-color="#1a82ff"/><stop offset="0.475" stop-color="#f64dff"/><stop offset="0.507" stop-color="#ff47f6"/><stop offset="0.653" stop-color="#ff26b9"/><stop offset="0.877" stop-color="#ff0984"/><stop offset="1.000" stop-color="#ff0070"/></linearGradient><linearGradient id="r210" gradientUnits="userSpaceOnUse" x1="1094.0" y1="0" x2="1311.0" y2="0"><stop offset="0.000" stop-color="#0087ff"/><stop offset="0.046" stop-color="#1081ff"/><stop offset="0.470" stop-color="#ec4cff"/><stop offset="0.512" stop-color="#ff45fb"/><stop offset="0.654" stop-color="#ff26bf"/><stop offset="0.871" stop-color="#ff0a89"/><stop offset="1.000" stop-color="#ff0074"/></linearGradient><linearGradient id="r211" gradientUnits="userSpaceOnUse" x1="1094.0" y1="0" x2="1309.0" y2="0"><stop offset="0.000" stop-color="#0083ff"/><stop offset="0.037" stop-color="#0b7fff"/><stop offset="0.474" stop-color="#e749ff"/><stop offset="0.526" stop-color="#ff42fb"/><stop offset="0.674" stop-color="#ff22be"/><stop offset="0.898" stop-color="#ff0788"/><stop offset="1.000" stop-color="#ff0078"/></linearGradient><linearGradient id="r212" gradientUnits="userSpaceOnUse" x1="1095.0" y1="0" x2="1307.0" y2="0"><stop offset="0.000" stop-color="#0080ff"/><stop offset="0.085" stop-color="#2276ff"/><stop offset="0.538" stop-color="#ff3efb"/><stop offset="0.689" stop-color="#ff20bf"/><stop offset="0.920" stop-color="#ff0588"/><stop offset="1.000" stop-color="#ff007c"/></linearGradient><linearGradient id="r213" gradientUnits="userSpaceOnUse" x1="1095.0" y1="0" x2="1305.0" y2="0"><stop offset="0.000" stop-color="#007cff"/><stop offset="0.052" stop-color="#1277ff"/><stop offset="0.514" stop-color="#ef40ff"/><stop offset="0.557" stop-color="#ff39f9"/><stop offset="0.714" stop-color="#ff1cbc"/><stop offset="0.952" stop-color="#ff0287"/><stop offset="1.000" stop-color="#ff0080"/></linearGradient><linearGradient id="r214" gradientUnits="userSpaceOnUse" x1="1095.0" y1="0" x2="1303.0" y2="0"><stop offset="0.000" stop-color="#0079ff"/><stop offset="0.043" stop-color="#0d75ff"/><stop offset="0.514" stop-color="#e83fff"/><stop offset="0.567" stop-color="#ff37fc"/><stop offset="0.726" stop-color="#ff1bbf"/><stop offset="0.966" stop-color="#ff0189"/><stop offset="1.000" stop-color="#ff0084"/></linearGradient><linearGradient id="r215" gradientUnits="userSpaceOnUse" x1="1096.0" y1="0" x2="1301.0" y2="0"><stop offset="0.000" stop-color="#0076ff"/><stop offset="0.122" stop-color="#2f69ff"/><stop offset="0.580" stop-color="#ff34fc"/><stop offset="0.746" stop-color="#ff18be"/><stop offset="0.995" stop-color="#ff0088"/><stop offset="1.000" stop-color="#ff0088"/></linearGradient><linearGradient id="r216" gradientUnits="userSpaceOnUse" x1="1096.0" y1="0" x2="1299.0" y2="0"><stop offset="0.000" stop-color="#0073ff"/><stop offset="0.069" stop-color="#176cff"/><stop offset="0.567" stop-color="#f435ff"/><stop offset="0.601" stop-color="#ff30fa"/><stop offset="0.773" stop-color="#ff14bc"/><stop offset="1.000" stop-color="#ff008c"/></linearGradient><linearGradient id="r217" gradientUnits="userSpaceOnUse" x1="1096.0" y1="0" x2="1297.0" y2="0"><stop offset="0.000" stop-color="#0070ff"/><stop offset="0.050" stop-color="#0e6bff"/><stop offset="0.562" stop-color="#eb34ff"/><stop offset="0.617" stop-color="#ff2dfa"/><stop offset="0.791" stop-color="#ff12bd"/><stop offset="1.000" stop-color="#ff0090"/></linearGradient><linearGradient id="r218" gradientUnits="userSpaceOnUse" x1="1096.0" y1="0" x2="1295.0" y2="0"><stop offset="0.000" stop-color="#006eff"/><stop offset="0.045" stop-color="#0b69ff"/><stop offset="0.568" stop-color="#e732ff"/><stop offset="0.628" stop-color="#ff2bfc"/><stop offset="0.804" stop-color="#ff11bf"/><stop offset="1.000" stop-color="#ff0094"/></linearGradient><linearGradient id="r219" gradientUnits="userSpaceOnUse" x1="1097.0" y1="0" x2="1293.0" y2="0"><stop offset="0.000" stop-color="#006aff"/><stop offset="0.087" stop-color="#1c62ff"/><stop offset="0.622" stop-color="#f92aff"/><stop offset="0.663" stop-color="#ff24f3"/><stop offset="0.857" stop-color="#ff0bb6"/><stop offset="1.000" stop-color="#ff0099"/></linearGradient><linearGradient id="r220" gradientUnits="userSpaceOnUse" x1="1097.0" y1="0" x2="1291.0" y2="0"><stop offset="0.000" stop-color="#0068ff"/><stop offset="0.057" stop-color="#1063ff"/><stop offset="0.608" stop-color="#ec2bff"/><stop offset="0.665" stop-color="#ff24fa"/><stop offset="0.856" stop-color="#ff0bbc"/><stop offset="1.000" stop-color="#ff009d"/></linearGradient><linearGradient id="r221" gradientUnits="userSpaceOnUse" x1="1097.0" y1="0" x2="1289.0" y2="0"><stop offset="0.000" stop-color="#0065ff"/><stop offset="0.052" stop-color="#0d61ff"/><stop offset="0.620" stop-color="#ea29ff"/><stop offset="0.682" stop-color="#ff21fa"/><stop offset="0.875" stop-color="#ff09bd"/><stop offset="1.000" stop-color="#ff00a2"/></linearGradient><linearGradient id="r222" gradientUnits="userSpaceOnUse" x1="1098.0" y1="0" x2="1287.0" y2="0"><stop offset="0.000" stop-color="#0063ff"/><stop offset="0.116" stop-color="#2458ff"/><stop offset="0.693" stop-color="#ff1ffc"/><stop offset="0.889" stop-color="#ff08bf"/><stop offset="1.000" stop-color="#ff00a7"/></linearGradient><linearGradient id="r223" gradientUnits="userSpaceOnUse" x1="1098.0" y1="0" x2="1285.0" y2="0"><stop offset="0.000" stop-color="#0060ff"/><stop offset="0.070" stop-color="#135aff"/><stop offset="0.663" stop-color="#ee22ff"/><stop offset="0.717" stop-color="#ff1cfa"/><stop offset="0.920" stop-color="#ff05bd"/><stop offset="1.000" stop-color="#ff00ac"/></linearGradient><linearGradient id="r224" gradientUnits="userSpaceOnUse" x1="1098.0" y1="0" x2="1283.0" y2="0"><stop offset="0.000" stop-color="#005eff"/><stop offset="0.059" stop-color="#0e59ff"/><stop offset="0.670" stop-color="#ea20ff"/><stop offset="0.735" stop-color="#ff19fa"/><stop offset="0.946" stop-color="#ff03bc"/><stop offset="1.000" stop-color="#ff00b1"/></linearGradient><linearGradient id="r225" gradientUnits="userSpaceOnUse" x1="1099.0" y1="0" x2="1281.0" y2="0"><stop offset="0.000" stop-color="#005bff"/><stop offset="0.176" stop-color="#354cff"/><stop offset="0.747" stop-color="#ff18fc"/><stop offset="0.962" stop-color="#ff02be"/><stop offset="1.000" stop-color="#ff00b6"/></linearGradient><linearGradient id="r226" gradientUnits="userSpaceOnUse" x1="1099.0" y1="0" x2="1279.0" y2="0"><stop offset="0.000" stop-color="#0059ff"/><stop offset="0.089" stop-color="#1752ff"/><stop offset="0.728" stop-color="#f319ff"/><stop offset="0.778" stop-color="#ff14f8"/><stop offset="1.000" stop-color="#ff00bb"/></linearGradient><linearGradient id="r227" gradientUnits="userSpaceOnUse" x1="1099.0" y1="0" x2="1277.0" y2="0"><stop offset="0.000" stop-color="#0057ff"/><stop offset="0.073" stop-color="#1151ff"/><stop offset="0.730" stop-color="#ed18ff"/><stop offset="0.792" stop-color="#ff12fb"/><stop offset="1.000" stop-color="#ff00c1"/></linearGradient><linearGradient id="r228" gradientUnits="userSpaceOnUse" x1="1100.0" y1="0" x2="1275.0" y2="0"><stop offset="0.000" stop-color="#0055ff"/><stop offset="0.280" stop-color="#523eff"/><stop offset="0.806" stop-color="#ff10fd"/><stop offset="1.000" stop-color="#ff00c6"/></linearGradient><linearGradient id="r229" gradientUnits="userSpaceOnUse" x1="1100.0" y1="0" x2="1273.0" y2="0"><stop offset="0.000" stop-color="#0053ff"/><stop offset="0.121" stop-color="#1f49ff"/><stop offset="0.809" stop-color="#fb10ff"/><stop offset="1.000" stop-color="#ff00cc"/></linearGradient><linearGradient id="r230" gradientUnits="userSpaceOnUse" x1="1100.0" y1="0" x2="1271.0" y2="0"><stop offset="0.000" stop-color="#0051ff"/><stop offset="0.082" stop-color="#124aff"/><stop offset="0.789" stop-color="#ee11ff"/><stop offset="0.854" stop-color="#ff0bfb"/><stop offset="1.000" stop-color="#ff00d2"/></linearGradient><linearGradient id="r231" gradientUnits="userSpaceOnUse" x1="1101.0" y1="0" x2="1269.0" y2="0"><stop offset="0.000" stop-color="#004eff"/><stop offset="0.435" stop-color="#792eff"/><stop offset="0.875" stop-color="#ff09fb"/><stop offset="1.000" stop-color="#ff00d8"/></linearGradient><linearGradient id="r232" gradientUnits="userSpaceOnUse" x1="1101.0" y1="0" x2="1267.0" y2="0"><stop offset="0.000" stop-color="#004cff"/><stop offset="0.169" stop-color="#2a40ff"/><stop offset="0.898" stop-color="#ff07fb"/><stop offset="1.000" stop-color="#ff00de"/></linearGradient><linearGradient id="r233" gradientUnits="userSpaceOnUse" x1="1101.0" y1="0" x2="1266.0" y2="0"><stop offset="0.000" stop-color="#004bff"/><stop offset="0.103" stop-color="#1743ff"/><stop offset="0.867" stop-color="#f409ff"/><stop offset="0.921" stop-color="#ff04f9"/><stop offset="1.000" stop-color="#ff00e3"/></linearGradient><linearGradient id="r234" gradientUnits="userSpaceOnUse" x1="1102.0" y1="0" x2="1264.0" y2="0"><stop offset="0.000" stop-color="#0048ff"/><stop offset="0.512" stop-color="#8624ff"/><stop offset="0.938" stop-color="#ff03fb"/><stop offset="1.000" stop-color="#ff00ea"/></linearGradient><linearGradient id="r235" gradientUnits="userSpaceOnUse" x1="1102.0" y1="0" x2="1262.0" y2="0"><stop offset="0.000" stop-color="#0047ff"/><stop offset="0.256" stop-color="#3e35ff"/><stop offset="0.963" stop-color="#ff01fb"/><stop offset="1.000" stop-color="#ff00f1"/></linearGradient><linearGradient id="r236" gradientUnits="userSpaceOnUse" x1="1102.0" y1="0" x2="1260.0" y2="0"><stop offset="0.000" stop-color="#0045ff"/><stop offset="0.127" stop-color="#1b3dff"/><stop offset="0.949" stop-color="#f802ff"/><stop offset="1.000" stop-color="#ff00f8"/></linearGradient><linearGradient id="r237" gradientUnits="userSpaceOnUse" x1="1103.0" y1="0" x2="1258.0" y2="0"><stop offset="0.000" stop-color="#0043ff"/><stop offset="0.581" stop-color="#8d1cff"/><stop offset="1.000" stop-color="#ff00ff"/></linearGradient><linearGradient id="r238" gradientUnits="userSpaceOnUse" x1="1103.0" y1="0" x2="1256.0" y2="0"><stop offset="0.000" stop-color="#0041ff"/><stop offset="0.431" stop-color="#6426ff"/><stop offset="1.000" stop-color="#f800ff"/></linearGradient><linearGradient id="r239" gradientUnits="userSpaceOnUse" x1="1103.0" y1="0" x2="1254.0" y2="0"><stop offset="0.000" stop-color="#0040ff"/><stop offset="0.166" stop-color="#2236ff"/><stop offset="1.000" stop-color="#f100ff"/></linearGradient><linearGradient id="r240" gradientUnits="userSpaceOnUse" x1="1104.0" y1="0" x2="1252.0" y2="0"><stop offset="0.000" stop-color="#003eff"/><stop offset="0.655" stop-color="#9415ff"/><stop offset="1.000" stop-color="#ea00ff"/></linearGradient><linearGradient id="r241" gradientUnits="userSpaceOnUse" x1="1104.0" y1="0" x2="1250.0" y2="0"><stop offset="0.000" stop-color="#003cff"/><stop offset="0.582" stop-color="#7f19ff"/><stop offset="1.000" stop-color="#e300ff"/></linearGradient><linearGradient id="r242" gradientUnits="userSpaceOnUse" x1="1104.0" y1="0" x2="1248.0" y2="0"><stop offset="0.000" stop-color="#003bff"/><stop offset="0.243" stop-color="#2f2dff"/><stop offset="1.000" stop-color="#dd00ff"/></linearGradient><linearGradient id="r243" gradientUnits="userSpaceOnUse" x1="1105.0" y1="0" x2="1246.0" y2="0"><stop offset="0.000" stop-color="#0039ff"/><stop offset="0.730" stop-color="#990fff"/><stop offset="1.000" stop-color="#d700ff"/></linearGradient><linearGradient id="r244" gradientUnits="userSpaceOnUse" x1="1105.0" y1="0" x2="1244.0" y2="0"><stop offset="0.000" stop-color="#0038ff"/><stop offset="0.669" stop-color="#8712ff"/><stop offset="1.000" stop-color="#d000ff"/></linearGradient><linearGradient id="r245" gradientUnits="userSpaceOnUse" x1="1105.0" y1="0" x2="1242.0" y2="0"><stop offset="0.000" stop-color="#0036ff"/><stop offset="0.387" stop-color="#4822ff"/><stop offset="1.000" stop-color="#ca00ff"/></linearGradient><linearGradient id="r246" gradientUnits="userSpaceOnUse" x1="1106.0" y1="0" x2="1240.0" y2="0"><stop offset="0.000" stop-color="#0035ff"/><stop offset="0.813" stop-color="#9d09ff"/><stop offset="1.000" stop-color="#c500ff"/></linearGradient><linearGradient id="r247" gradientUnits="userSpaceOnUse" x1="1106.0" y1="0" x2="1238.0" y2="0"><stop offset="0.000" stop-color="#0033ff"/><stop offset="0.765" stop-color="#8f0cff"/><stop offset="1.000" stop-color="#bf00ff"/></linearGradient><linearGradient id="r248" gradientUnits="userSpaceOnUse" x1="1106.0" y1="0" x2="1236.0" y2="0"><stop offset="0.000" stop-color="#0032ff"/><stop offset="0.646" stop-color="#7412ff"/><stop offset="1.000" stop-color="#b900ff"/></linearGradient><linearGradient id="r249" gradientUnits="userSpaceOnUse" x1="1107.0" y1="0" x2="1234.0" y2="0"><stop offset="0.000" stop-color="#0030ff"/><stop offset="0.906" stop-color="#a104ff"/><stop offset="1.000" stop-color="#b400ff"/></linearGradient><linearGradient id="r250" gradientUnits="userSpaceOnUse" x1="1107.0" y1="0" x2="1232.0" y2="0"><stop offset="0.000" stop-color="#002fff"/><stop offset="0.856" stop-color="#9306ff"/><stop offset="1.000" stop-color="#ae00ff"/></linearGradient><linearGradient id="r251" gradientUnits="userSpaceOnUse" x1="1107.0" y1="0" x2="1230.0" y2="0"><stop offset="0.000" stop-color="#002eff"/><stop offset="0.780" stop-color="#810aff"/><stop offset="1.000" stop-color="#a900ff"/></linearGradient><linearGradient id="r252" gradientUnits="userSpaceOnUse" x1="1108.0" y1="0" x2="1228.0" y2="0"><stop offset="0.000" stop-color="#002cff"/><stop offset="1.000" stop-color="#a400ff"/></linearGradient><linearGradient id="r253" gradientUnits="userSpaceOnUse" x1="1108.0" y1="0" x2="1226.0" y2="0"><stop offset="0.000" stop-color="#002bff"/><stop offset="0.966" stop-color="#9900ff"/><stop offset="1.000" stop-color="#9f00ff"/></linearGradient><linearGradient id="r254" gradientUnits="userSpaceOnUse" x1="1108.0" y1="0" x2="1224.0" y2="0"><stop offset="0.000" stop-color="#002aff"/><stop offset="0.897" stop-color="#8903ff"/><stop offset="1.000" stop-color="#9a00ff"/></linearGradient><linearGradient id="r255" gradientUnits="userSpaceOnUse" x1="1108.0" y1="0" x2="1222.0" y2="0"><stop offset="0.000" stop-color="#0029ff"/><stop offset="0.649" stop-color="#5e0eff"/><stop offset="1.000" stop-color="#9500ff"/></linearGradient><linearGradient id="r256" gradientUnits="userSpaceOnUse" x1="1109.0" y1="0" x2="1220.0" y2="0"><stop offset="0.000" stop-color="#0028ff"/><stop offset="1.000" stop-color="#9100ff"/></linearGradient><linearGradient id="r257" gradientUnits="userSpaceOnUse" x1="1109.0" y1="0" x2="1218.0" y2="0"><stop offset="0.000" stop-color="#0026ff"/><stop offset="1.000" stop-color="#8c00ff"/></linearGradient><linearGradient id="r258" gradientUnits="userSpaceOnUse" x1="1109.0" y1="0" x2="1216.0" y2="0"><stop offset="0.000" stop-color="#0025ff"/><stop offset="0.907" stop-color="#7a03ff"/><stop offset="1.000" stop-color="#8800ff"/></linearGradient><linearGradient id="r259" gradientUnits="userSpaceOnUse" x1="1110.0" y1="0" x2="1214.0" y2="0"><stop offset="0.000" stop-color="#0024ff"/><stop offset="1.000" stop-color="#8300ff"/></linearGradient><linearGradient id="r260" gradientUnits="userSpaceOnUse" x1="1110.0" y1="0" x2="1213.0" y2="0"><stop offset="0.000" stop-color="#0023ff"/><stop offset="1.000" stop-color="#8000ff"/></linearGradient><linearGradient id="r261" gradientUnits="userSpaceOnUse" x1="1110.0" y1="0" x2="1211.0" y2="0"><stop offset="0.000" stop-color="#0022ff"/><stop offset="1.000" stop-color="#7c00ff"/></linearGradient><linearGradient id="r262" gradientUnits="userSpaceOnUse" x1="1111.0" y1="0" x2="1209.0" y2="0"><stop offset="0.000" stop-color="#0021ff"/><stop offset="1.000" stop-color="#7800ff"/></linearGradient><linearGradient id="r263" gradientUnits="userSpaceOnUse" x1="1111.0" y1="0" x2="1207.0" y2="0"><stop offset="0.000" stop-color="#0020ff"/><stop offset="1.000" stop-color="#7400ff"/></linearGradient><linearGradient id="r264" gradientUnits="userSpaceOnUse" x1="1111.0" y1="0" x2="1205.0" y2="0"><stop offset="0.000" stop-color="#001fff"/><stop offset="1.000" stop-color="#7000ff"/></linearGradient><linearGradient id="r265" gradientUnits="userSpaceOnUse" x1="1112.0" y1="0" x2="1203.0" y2="0"><stop offset="0.000" stop-color="#001eff"/><stop offset="1.000" stop-color="#6c00ff"/></linearGradient><linearGradient id="r266" gradientUnits="userSpaceOnUse" x1="1112.0" y1="0" x2="1201.0" y2="0"><stop offset="0.000" stop-color="#001dff"/><stop offset="1.000" stop-color="#6800ff"/></linearGradient><linearGradient id="r267" gradientUnits="userSpaceOnUse" x1="1112.0" y1="0" x2="1199.0" y2="0"><stop offset="0.000" stop-color="#001cff"/><stop offset="1.000" stop-color="#6400ff"/></linearGradient><linearGradient id="r268" gradientUnits="userSpaceOnUse" x1="1113.0" y1="0" x2="1197.0" y2="0"><stop offset="0.000" stop-color="#001bff"/><stop offset="1.000" stop-color="#6000ff"/></linearGradient><linearGradient id="r269" gradientUnits="userSpaceOnUse" x1="1113.0" y1="0" x2="1195.0" y2="0"><stop offset="0.000" stop-color="#001aff"/><stop offset="1.000" stop-color="#5d00ff"/></linearGradient><linearGradient id="r270" gradientUnits="userSpaceOnUse" x1="1113.0" y1="0" x2="1193.0" y2="0"><stop offset="0.000" stop-color="#0019ff"/><stop offset="1.000" stop-color="#5900ff"/></linearGradient><linearGradient id="r271" gradientUnits="userSpaceOnUse" x1="1114.0" y1="0" x2="1191.0" y2="0"><stop offset="0.000" stop-color="#0018ff"/><stop offset="1.000" stop-color="#5600ff"/></linearGradient><linearGradient id="r272" gradientUnits="userSpaceOnUse" x1="1114.0" y1="0" x2="1189.0" y2="0"><stop offset="0.000" stop-color="#0017ff"/><stop offset="1.000" stop-color="#5200ff"/></linearGradient><linearGradient id="r273" gradientUnits="userSpaceOnUse" x1="1114.0" y1="0" x2="1187.0" y2="0"><stop offset="0.000" stop-color="#0016ff"/><stop offset="1.000" stop-color="#4f00ff"/></linearGradient><linearGradient id="r274" gradientUnits="userSpaceOnUse" x1="1115.0" y1="0" x2="1185.0" y2="0"><stop offset="0.000" stop-color="#0015ff"/><stop offset="1.000" stop-color="#4c00ff"/></linearGradient><linearGradient id="r275" gradientUnits="userSpaceOnUse" x1="1115.0" y1="0" x2="1183.0" y2="0"><stop offset="0.000" stop-color="#0014ff"/><stop offset="1.000" stop-color="#4800ff"/></linearGradient><linearGradient id="r276" gradientUnits="userSpaceOnUse" x1="1115.0" y1="0" x2="1181.0" y2="0"><stop offset="0.000" stop-color="#0013ff"/><stop offset="1.000" stop-color="#4500ff"/></linearGradient><linearGradient id="r277" gradientUnits="userSpaceOnUse" x1="1116.0" y1="0" x2="1179.0" y2="0"><stop offset="0.000" stop-color="#0012ff"/><stop offset="1.000" stop-color="#4200ff"/></linearGradient><linearGradient id="r278" gradientUnits="userSpaceOnUse" x1="1116.0" y1="0" x2="1177.0" y2="0"><stop offset="0.000" stop-color="#0012ff"/><stop offset="1.000" stop-color="#3f00ff"/></linearGradient><linearGradient id="r279" gradientUnits="userSpaceOnUse" x1="1116.0" y1="0" x2="1175.0" y2="0"><stop offset="0.000" stop-color="#0011ff"/><stop offset="1.000" stop-color="#3c00ff"/></linearGradient><linearGradient id="r280" gradientUnits="userSpaceOnUse" x1="1117.0" y1="0" x2="1173.0" y2="0"><stop offset="0.000" stop-color="#0010ff"/><stop offset="1.000" stop-color="#3900ff"/></linearGradient><linearGradient id="r281" gradientUnits="userSpaceOnUse" x1="1117.0" y1="0" x2="1171.0" y2="0"><stop offset="0.000" stop-color="#000fff"/><stop offset="1.000" stop-color="#3600ff"/></linearGradient><linearGradient id="r282" gradientUnits="userSpaceOnUse" x1="1117.0" y1="0" x2="1169.0" y2="0"><stop offset="0.000" stop-color="#000eff"/><stop offset="1.000" stop-color="#3300ff"/></linearGradient><linearGradient id="r283" gradientUnits="userSpaceOnUse" x1="1118.0" y1="0" x2="1167.0" y2="0"><stop offset="0.000" stop-color="#000dff"/><stop offset="1.000" stop-color="#3000ff"/></linearGradient><linearGradient id="r284" gradientUnits="userSpaceOnUse" x1="1118.0" y1="0" x2="1165.0" y2="0"><stop offset="0.000" stop-color="#000dff"/><stop offset="1.000" stop-color="#2e00ff"/></linearGradient><linearGradient id="r285" gradientUnits="userSpaceOnUse" x1="1118.0" y1="0" x2="1163.0" y2="0"><stop offset="0.000" stop-color="#000cff"/><stop offset="1.000" stop-color="#2b00ff"/></linearGradient><linearGradient id="r286" gradientUnits="userSpaceOnUse" x1="1119.0" y1="0" x2="1161.0" y2="0"><stop offset="0.000" stop-color="#000bff"/><stop offset="1.000" stop-color="#2800ff"/></linearGradient><linearGradient id="r287" gradientUnits="userSpaceOnUse" x1="1119.0" y1="0" x2="1160.0" y2="0"><stop offset="0.000" stop-color="#000bff"/><stop offset="1.000" stop-color="#2700ff"/></linearGradient><linearGradient id="r288" gradientUnits="userSpaceOnUse" x1="1119.0" y1="0" x2="1158.0" y2="0"><stop offset="0.000" stop-color="#000aff"/><stop offset="1.000" stop-color="#2400ff"/></linearGradient><linearGradient id="r289" gradientUnits="userSpaceOnUse" x1="1120.0" y1="0" x2="1156.0" y2="0"><stop offset="0.000" stop-color="#0009ff"/><stop offset="1.000" stop-color="#2100ff"/></linearGradient><linearGradient id="r290" gradientUnits="userSpaceOnUse" x1="1120.0" y1="0" x2="1154.0" y2="0"><stop offset="0.000" stop-color="#0008ff"/><stop offset="1.000" stop-color="#1f00ff"/></linearGradient><linearGradient id="r291" gradientUnits="userSpaceOnUse" x1="1120.0" y1="0" x2="1152.0" y2="0"><stop offset="0.000" stop-color="#0008ff"/><stop offset="1.000" stop-color="#1c00ff"/></linearGradient><linearGradient id="r292" gradientUnits="userSpaceOnUse" x1="1121.0" y1="0" x2="1150.0" y2="0"><stop offset="0.000" stop-color="#0007ff"/><stop offset="1.000" stop-color="#1a00ff"/></linearGradient><linearGradient id="r293" gradientUnits="userSpaceOnUse" x1="1121.0" y1="0" x2="1148.0" y2="0"><stop offset="0.000" stop-color="#0006ff"/><stop offset="1.000" stop-color="#1700ff"/></linearGradient><linearGradient id="r294" gradientUnits="userSpaceOnUse" x1="1121.0" y1="0" x2="1146.0" y2="0"><stop offset="0.000" stop-color="#0006ff"/><stop offset="1.000" stop-color="#1500ff"/></linearGradient><linearGradient id="r295" gradientUnits="userSpaceOnUse" x1="1121.0" y1="0" x2="1144.0" y2="0"><stop offset="0.000" stop-color="#0005ff"/><stop offset="1.000" stop-color="#1300ff"/></linearGradient><linearGradient id="r296" gradientUnits="userSpaceOnUse" x1="1122.0" y1="0" x2="1142.0" y2="0"><stop offset="0.000" stop-color="#0004ff"/><stop offset="1.000" stop-color="#1000ff"/></linearGradient><linearGradient id="r297" gradientUnits="userSpaceOnUse" x1="1122.0" y1="0" x2="1140.0" y2="0"><stop offset="0.000" stop-color="#0004ff"/><stop offset="1.000" stop-color="#0e00ff"/></linearGradient><linearGradient id="r298" gradientUnits="userSpaceOnUse" x1="1122.0" y1="0" x2="1138.0" y2="0"><stop offset="0.000" stop-color="#0003ff"/><stop offset="1.000" stop-color="#0c00ff"/></linearGradient><linearGradient id="r299" gradientUnits="userSpaceOnUse" x1="1123.0" y1="0" x2="1136.0" y2="0"><stop offset="0.000" stop-color="#0002ff"/><stop offset="1.000" stop-color="#0a00ff"/></linearGradient><linearGradient id="r300" gradientUnits="userSpaceOnUse" x1="1123.0" y1="0" x2="1134.0" y2="0"><stop offset="0.000" stop-color="#0002ff"/><stop offset="1.000" stop-color="#0700ff"/></linearGradient><linearGradient id="r301" gradientUnits="userSpaceOnUse" x1="1123.0" y1="0" x2="1132.0" y2="0"><stop offset="0.000" stop-color="#0001ff"/><stop offset="1.000" stop-color="#0500ff"/></linearGradient><linearGradient id="r302" gradientUnits="userSpaceOnUse" x1="1124.0" y1="0" x2="1130.0" y2="0"><stop offset="0.000" stop-color="#0001ff"/><stop offset="1.000" stop-color="#0300ff"/></linearGradient><linearGradient id="ins" x1="0" y1="0" x2="1" y2="1"><stop offset="0" stop-color="#ffa22e"/><stop offset="0.5" stop-color="#ff6a2a"/><stop offset="1" stop-color="#ff3020"/></linearGradient><clipPath id="insc"><rect x="1360" y="358" width="185" height="120.5"/></clipPath><linearGradient id="hdr" x1="0" y1="0" x2="0" y2="1"><stop offset="0" stop-color="#2e2e2e"/><stop offset="0.5" stop-color="#2e2e2e"/><stop offset="0.5" stop-color="#161616"/><stop offset="1" stop-color="#131313"/></linearGradient><linearGradient id="tile" x1="0" y1="0" x2="0" y2="1"><stop offset="0" stop-color="#adadad"/><stop offset="1" stop-color="#6a6a6a"/></linearGradient><linearGradient id="tsel" x1="0" y1="0" x2="0" y2="1"><stop offset="0" stop-color="#1e1e1e"/><stop offset="1" stop-color="#3a3a3a"/></linearGradient><linearGradient id="btn" x1="0" y1="0" x2="0" y2="1"><stop offset="0" stop-color="#b6b6b6"/><stop offset="1" stop-color="#858585"/></linearGradient><linearGradient id="btnd" x1="0" y1="0" x2="0" y2="1"><stop offset="0" stop-color="#3a3a3a"/><stop offset="1" stop-color="#222222"/></linearGradient><linearGradient id="circ" x1="0" y1="0" x2="0" y2="1"><stop offset="0" stop-color="#7e7e7e"/><stop offset="1" stop-color="#bcbcbc"/></linearGradient><linearGradient id="circd" x1="0" y1="0" x2="0" y2="1"><stop offset="0" stop-color="#1e1e1e"/><stop offset="1" stop-color="#3a3a3a"/></linearGradient></defs><rect x="0" y="0" width="1559" height="863" fill="#333333"/>
<text x="3.15" y="63.00" font-size="39.00" fill="#f4f4f4" textLength="226.54" lengthAdjust="spacingAndGlyphs">ColorChecker</text>
<text x="31.06" y="99.30" font-size="15.50" fill="#f0f0f0" textLength="311.42" lengthAdjust="spacingAndGlyphs">Display analysis is performed with the X-Rite/</text>
<text x="31.08" y="119.60" font-size="15.50" fill="#f0f0f0" textLength="154.58" lengthAdjust="spacingAndGlyphs">Pantone ColorChecker</text>
<text x="186.48" y="115.20" font-size="8.00" fill="#f0f0f0" textLength="6.06" lengthAdjust="spacingAndGlyphs">®</text>
<text x="197.96" y="119.60" font-size="15.50" fill="#f0f0f0" textLength="90.86" lengthAdjust="spacingAndGlyphs">target colors.</text>
<text x="99.24" y="163.50" font-size="18.40" fill="#f0f0f0" textLength="102.99" lengthAdjust="spacingAndGlyphs">dE Formula:</text>
<rect x="208.5" y="144.8" width="138.5" height="24.6" fill="url(#dd)" stroke="#2c2c2c" stroke-width="0.6"/>
<text x="212.15" y="165.00" font-size="15.80" fill="#f0f0f0" textLength="33.47" lengthAdjust="spacingAndGlyphs">2000</text>
<path d="M332.5 155 L341.5 155 L337 160 Z" fill="#111"/>
<text x="134.70" y="194.00" font-size="13.40" fill="#c8c8c8" textLength="75.46" lengthAdjust="spacingAndGlyphs">DeltaE 2000</text>
<rect x="15.5" y="199.5" width="314" height="310.5" fill="#232323"/>
<line x1="56.5" y1="200" x2="56.5" y2="510" stroke="#9a9a9a" stroke-width="1.2"/>
<line x1="98.5" y1="200" x2="98.5" y2="510" stroke="#9a9a9a" stroke-width="1.2"/>
<line x1="140.5" y1="200" x2="140.5" y2="510" stroke="#9a9a9a" stroke-width="1.2"/>
<line x1="182.5" y1="200" x2="182.5" y2="510" stroke="#9a9a9a" stroke-width="1.2"/>
<line x1="224.5" y1="200" x2="224.5" y2="510" stroke="#9a9a9a" stroke-width="1.2"/>
<line x1="266.5" y1="200" x2="266.5" y2="510" stroke="#9a9a9a" stroke-width="1.2"/>
<line x1="308.5" y1="200" x2="308.5" y2="510" stroke="#9a9a9a" stroke-width="1.2"/>
<path d="M15.5 510 L15.5 199.5 L329.5 199.5 L329.5 510" fill="none" stroke="#a8a8a8" stroke-width="1.2"/>
<line x1="15" y1="510.5" x2="330" y2="510.5" stroke="#a8a8a8" stroke-width="1.2"/>
<line x1="15.5" y1="510" x2="15.5" y2="516" stroke="#d0d0d0" stroke-width="1.3"/>
<text x="10.92" y="531.00" font-size="13.50" fill="#d8d8d8" textLength="7.51" lengthAdjust="spacingAndGlyphs">0</text>
<line x1="56.5" y1="510" x2="56.5" y2="516" stroke="#d0d0d0" stroke-width="1.3"/>
<text x="52.95" y="531.00" font-size="13.50" fill="#d8d8d8" textLength="7.51" lengthAdjust="spacingAndGlyphs">2</text>
<line x1="98.5" y1="510" x2="98.5" y2="516" stroke="#d0d0d0" stroke-width="1.3"/>
<text x="95.02" y="531.00" font-size="13.50" fill="#d8d8d8" textLength="7.51" lengthAdjust="spacingAndGlyphs">4</text>
<line x1="140.5" y1="510" x2="140.5" y2="516" stroke="#d0d0d0" stroke-width="1.3"/>
<text x="136.89" y="531.00" font-size="13.50" fill="#d8d8d8" textLength="7.51" lengthAdjust="spacingAndGlyphs">6</text>
<line x1="182.5" y1="510" x2="182.5" y2="516" stroke="#d0d0d0" stroke-width="1.3"/>
<text x="178.92" y="531.00" font-size="13.50" fill="#d8d8d8" textLength="7.51" lengthAdjust="spacingAndGlyphs">8</text>
<line x1="224.5" y1="510" x2="224.5" y2="516" stroke="#d0d0d0" stroke-width="1.3"/>
<text x="216.94" y="531.00" font-size="13.50" fill="#d8d8d8" textLength="15.02" lengthAdjust="spacingAndGlyphs">10</text>
<line x1="266.5" y1="510" x2="266.5" y2="516" stroke="#d0d0d0" stroke-width="1.3"/>
<text x="259.04" y="531.00" font-size="13.50" fill="#d8d8d8" textLength="15.02" lengthAdjust="spacingAndGlyphs">12</text>
<line x1="308.5" y1="510" x2="308.5" y2="516" stroke="#d0d0d0" stroke-width="1.3"/>
<text x="300.90" y="531.00" font-size="13.50" fill="#d8d8d8" textLength="15.02" lengthAdjust="spacingAndGlyphs">14</text>
<rect x="15.2" y="504.60" width="89.05" height="4.0" fill="url(#b0)" stroke="#000" stroke-width="1.25"/>
<rect x="15.2" y="498.00" width="33.18" height="4.0" fill="url(#b1)" stroke="#000" stroke-width="1.25"/>
<rect x="15.2" y="491.39" width="21.12" height="4.0" fill="url(#b2)" stroke="#000" stroke-width="1.25"/>
<rect x="15.2" y="484.79" width="19.00" height="4.0" fill="url(#b3)" stroke="#000" stroke-width="1.25"/>
<rect x="15.2" y="478.18" width="15.24" height="4.0" fill="url(#b4)" stroke="#000" stroke-width="1.25"/>
<rect x="15.2" y="471.58" width="37.79" height="4.0" fill="url(#b5)" stroke="#000" stroke-width="1.25"/>
<rect x="15.2" y="464.98" width="71.64" height="4.0" fill="url(#b6)" stroke="#000" stroke-width="1.25"/>
<rect x="15.2" y="458.37" width="80.07" height="4.0" fill="url(#b7)" stroke="#000" stroke-width="1.25"/>
<rect x="15.2" y="451.77" width="67.68" height="4.0" fill="url(#b8)" stroke="#000" stroke-width="1.25"/>
<rect x="15.2" y="445.16" width="100.91" height="4.0" fill="url(#b9)" stroke="#000" stroke-width="1.25"/>
<rect x="15.2" y="438.56" width="107.20" height="4.0" fill="url(#b10)" stroke="#000" stroke-width="1.25"/>
<rect x="15.2" y="431.96" width="137.82" height="4.0" fill="url(#b11)" stroke="#000" stroke-width="1.25"/>
<rect x="15.2" y="425.35" width="116.75" height="4.0" fill="url(#b12)" stroke="#000" stroke-width="1.25"/>
<rect x="15.2" y="418.75" width="111.49" height="4.0" fill="url(#b13)" stroke="#000" stroke-width="1.25"/>
<rect x="15.2" y="412.14" width="133.90" height="4.0" fill="url(#b14)" stroke="#000" stroke-width="1.25"/>
<rect x="15.2" y="405.54" width="128.65" height="4.0" fill="url(#b15)" stroke="#000" stroke-width="1.25"/>
<rect x="15.2" y="398.94" width="129.49" height="4.0" fill="url(#b16)" stroke="#000" stroke-width="1.25"/>
<rect x="15.2" y="392.33" width="67.33" height="4.0" fill="url(#b17)" stroke="#000" stroke-width="1.25"/>
<rect x="15.2" y="385.73" width="156.79" height="4.0" fill="url(#b18)" stroke="#000" stroke-width="1.25"/>
<rect x="15.2" y="379.12" width="153.85" height="4.0" fill="url(#b19)" stroke="#000" stroke-width="1.25"/>
<rect x="15.2" y="372.52" width="129.49" height="4.0" fill="url(#b20)" stroke="#000" stroke-width="1.25"/>
<rect x="15.2" y="365.92" width="55.57" height="4.0" fill="url(#b21)" stroke="#000" stroke-width="1.25"/>
<rect x="15.2" y="359.31" width="165.40" height="4.0" fill="url(#b22)" stroke="#000" stroke-width="1.25"/>
<rect x="15.2" y="352.71" width="78.25" height="4.0" fill="url(#b23)" stroke="#000" stroke-width="1.25"/>
<rect x="15.2" y="346.10" width="137.47" height="4.0" fill="url(#b24)" stroke="#000" stroke-width="1.25"/>
<rect x="15.2" y="339.50" width="206.35" height="4.0" fill="url(#b25)" stroke="#000" stroke-width="1.25"/>
<rect x="15.2" y="332.90" width="315.00" height="4.0" fill="url(#b26)" stroke="#000" stroke-width="1.25"/>
<rect x="15.2" y="326.29" width="176.74" height="4.0" fill="url(#b27)" stroke="#000" stroke-width="1.25"/>
<rect x="15.2" y="319.69" width="235.75" height="4.0" fill="url(#b28)" stroke="#000" stroke-width="1.25"/>
<rect x="15.2" y="313.08" width="111.64" height="4.0" fill="url(#b29)" stroke="#000" stroke-width="1.25"/>
<rect x="15.2" y="306.48" width="77.83" height="4.0" fill="url(#b30)" stroke="#000" stroke-width="1.25"/>
<rect x="15.2" y="299.88" width="92.32" height="4.0" fill="url(#b31)" stroke="#000" stroke-width="1.25"/>
<rect x="15.2" y="293.27" width="83.29" height="4.0" fill="url(#b32)" stroke="#000" stroke-width="1.25"/>
<rect x="15.2" y="286.67" width="98.20" height="4.0" fill="url(#b33)" stroke="#000" stroke-width="1.25"/>
<rect x="15.2" y="280.06" width="98.20" height="4.0" fill="url(#b34)" stroke="#000" stroke-width="1.25"/>
<rect x="15.2" y="273.46" width="77.83" height="4.0" fill="url(#b35)" stroke="#000" stroke-width="1.25"/>
<rect x="15.2" y="266.86" width="73.63" height="4.0" fill="url(#b36)" stroke="#000" stroke-width="1.25"/>
<rect x="15.2" y="260.25" width="81.19" height="4.0" fill="url(#b37)" stroke="#000" stroke-width="1.25"/>
<rect x="15.2" y="253.65" width="106.60" height="4.0" fill="url(#b38)" stroke="#000" stroke-width="1.25"/>
<rect x="15.2" y="247.04" width="106.60" height="4.0" fill="url(#b39)" stroke="#000" stroke-width="1.25"/>
<rect x="15.2" y="240.44" width="100.72" height="4.0" fill="url(#b40)" stroke="#000" stroke-width="1.25"/>
<rect x="15.2" y="233.84" width="121.72" height="4.0" fill="url(#b41)" stroke="#000" stroke-width="1.25"/>
<rect x="15.2" y="227.23" width="80.35" height="4.0" fill="url(#b42)" stroke="#000" stroke-width="1.25"/>
<rect x="15.2" y="220.63" width="90.22" height="4.0" fill="url(#b43)" stroke="#000" stroke-width="1.25"/>
<rect x="15.2" y="214.02" width="84.13" height="4.0" fill="url(#b44)" stroke="#000" stroke-width="1.25"/>
<rect x="15.2" y="207.42" width="73.63" height="4.0" fill="url(#b45)" stroke="#000" stroke-width="1.25"/>
<rect x="15.2" y="200.82" width="100.72" height="4.0" fill="url(#b46)" stroke="#000" stroke-width="1.25"/>
<path d="M15.5 510 L15.5 199.5 L329.5 199.5" fill="none" stroke="#a8a8a8" stroke-width="1.1"/>
<text x="412.44" y="53.80" font-size="12.60" fill="#d0d0d0" textLength="43.87" lengthAdjust="spacingAndGlyphs">Delta L</text>
<rect x="372.1" y="58.8" width="142.4" height="315.5" fill="#232323"/>
<line x1="372.1" y1="98.24" x2="514.5" y2="98.24" stroke="#9a9a9a" stroke-width="1.1"/>
<line x1="372.1" y1="137.68" x2="514.5" y2="137.68" stroke="#9a9a9a" stroke-width="1.1"/>
<line x1="372.1" y1="177.11" x2="514.5" y2="177.11" stroke="#9a9a9a" stroke-width="1.1"/>
<line x1="372.1" y1="216.55" x2="514.5" y2="216.55" stroke="#9a9a9a" stroke-width="1.1"/>
<line x1="372.1" y1="255.99" x2="514.5" y2="255.99" stroke="#9a9a9a" stroke-width="1.1"/>
<line x1="372.1" y1="295.43" x2="514.5" y2="295.43" stroke="#9a9a9a" stroke-width="1.1"/>
<line x1="372.1" y1="334.86" x2="514.5" y2="334.86" stroke="#9a9a9a" stroke-width="1.1"/>
<rect x="372.1" y="58.8" width="142.4" height="315.5" fill="none" stroke="#a0a0a0" stroke-width="1.2"/>
<line x1="366.6" y1="58.80" x2="372.1" y2="58.80" stroke="#e0e0e0" stroke-width="1.3"/>
<text x="358.28" y="64.00" font-size="12.60" fill="#d8d8d8" textLength="7.01" lengthAdjust="spacingAndGlyphs">4</text>
<line x1="366.6" y1="98.24" x2="372.1" y2="98.24" stroke="#e0e0e0" stroke-width="1.3"/>
<text x="358.41" y="103.44" font-size="12.60" fill="#d8d8d8" textLength="7.01" lengthAdjust="spacingAndGlyphs">3</text>
<line x1="366.6" y1="137.68" x2="372.1" y2="137.68" stroke="#e0e0e0" stroke-width="1.3"/>
<text x="358.54" y="142.88" font-size="12.60" fill="#d8d8d8" textLength="7.01" lengthAdjust="spacingAndGlyphs">2</text>
<line x1="366.6" y1="177.11" x2="372.1" y2="177.11" stroke="#e0e0e0" stroke-width="1.3"/>
<text x="358.47" y="182.31" font-size="12.60" fill="#d8d8d8" textLength="7.01" lengthAdjust="spacingAndGlyphs">1</text>
<line x1="366.6" y1="216.55" x2="372.1" y2="216.55" stroke="#e0e0e0" stroke-width="1.3"/>
<text x="358.35" y="221.75" font-size="12.60" fill="#d8d8d8" textLength="7.01" lengthAdjust="spacingAndGlyphs">0</text>
<line x1="366.6" y1="255.99" x2="372.1" y2="255.99" stroke="#e0e0e0" stroke-width="1.3"/>
<text x="352.67" y="261.19" font-size="12.60" fill="#d8d8d8" textLength="12.87" lengthAdjust="spacingAndGlyphs">-1</text>
<line x1="366.6" y1="295.43" x2="372.1" y2="295.43" stroke="#e0e0e0" stroke-width="1.3"/>
<text x="352.73" y="300.62" font-size="12.60" fill="#d8d8d8" textLength="12.88" lengthAdjust="spacingAndGlyphs">-2</text>
<line x1="366.6" y1="334.86" x2="372.1" y2="334.86" stroke="#e0e0e0" stroke-width="1.3"/>
<text x="352.61" y="340.06" font-size="12.60" fill="#d8d8d8" textLength="12.86" lengthAdjust="spacingAndGlyphs">-3</text>
<line x1="366.6" y1="374.30" x2="372.1" y2="374.30" stroke="#e0e0e0" stroke-width="1.3"/>
<text x="352.48" y="379.50" font-size="12.60" fill="#d8d8d8" textLength="12.84" lengthAdjust="spacingAndGlyphs">-4</text>
<rect x="385.0" y="216.55" width="114.4" height="10.65" fill="url(#dbar)" stroke="#000" stroke-width="1.3"/>
<text x="596.41" y="53.80" font-size="12.60" fill="#d0d0d0" textLength="45.43" lengthAdjust="spacingAndGlyphs">Delta C</text>
<rect x="564.6" y="58.8" width="135.0" height="315.5" fill="#232323"/>
<line x1="564.6" y1="137.68" x2="699.6" y2="137.68" stroke="#9a9a9a" stroke-width="1.1"/>
<line x1="564.6" y1="216.55" x2="699.6" y2="216.55" stroke="#9a9a9a" stroke-width="1.1"/>
<line x1="564.6" y1="295.43" x2="699.6" y2="295.43" stroke="#9a9a9a" stroke-width="1.1"/>
<rect x="564.6" y="58.8" width="135.0" height="315.5" fill="none" stroke="#a0a0a0" stroke-width="1.2"/>
<line x1="559.1" y1="58.80" x2="564.6" y2="58.80" stroke="#e0e0e0" stroke-width="1.3"/>
<text x="545.05" y="64.00" font-size="12.60" fill="#d8d8d8" textLength="14.02" lengthAdjust="spacingAndGlyphs">10</text>
<line x1="559.1" y1="137.68" x2="564.6" y2="137.68" stroke="#e0e0e0" stroke-width="1.3"/>
<text x="552.11" y="142.88" font-size="12.60" fill="#d8d8d8" textLength="7.01" lengthAdjust="spacingAndGlyphs">5</text>
<line x1="559.1" y1="216.55" x2="564.6" y2="216.55" stroke="#e0e0e0" stroke-width="1.3"/>
<text x="552.05" y="221.75" font-size="12.60" fill="#d8d8d8" textLength="7.01" lengthAdjust="spacingAndGlyphs">0</text>
<line x1="559.1" y1="295.43" x2="564.6" y2="295.43" stroke="#e0e0e0" stroke-width="1.3"/>
<text x="546.31" y="300.62" font-size="12.60" fill="#d8d8d8" textLength="12.86" lengthAdjust="spacingAndGlyphs">-5</text>
<line x1="559.1" y1="374.30" x2="564.6" y2="374.30" stroke="#e0e0e0" stroke-width="1.3"/>
<text x="539.28" y="379.50" font-size="12.60" fill="#d8d8d8" textLength="19.80" lengthAdjust="spacingAndGlyphs">-10</text>
<rect x="578.6" y="216.55" width="106.8" height="140.40" fill="url(#dbar)" stroke="#000" stroke-width="1.3"/>
<text x="780.87" y="53.80" font-size="12.60" fill="#d0d0d0" textLength="46.91" lengthAdjust="spacingAndGlyphs">Delta H</text>
<rect x="741.5" y="58.8" width="144.0" height="315.5" fill="#232323"/>
<line x1="741.5" y1="111.38" x2="885.5" y2="111.38" stroke="#9a9a9a" stroke-width="1.1"/>
<line x1="741.5" y1="163.97" x2="885.5" y2="163.97" stroke="#9a9a9a" stroke-width="1.1"/>
<line x1="741.5" y1="216.55" x2="885.5" y2="216.55" stroke="#9a9a9a" stroke-width="1.1"/>
<line x1="741.5" y1="269.13" x2="885.5" y2="269.13" stroke="#9a9a9a" stroke-width="1.1"/>
<line x1="741.5" y1="321.72" x2="885.5" y2="321.72" stroke="#9a9a9a" stroke-width="1.1"/>
<rect x="741.5" y="58.8" width="144.0" height="315.5" fill="none" stroke="#a0a0a0" stroke-width="1.2"/>
<line x1="736.0" y1="58.80" x2="741.5" y2="58.80" stroke="#e0e0e0" stroke-width="1.3"/>
<text x="729.11" y="64.00" font-size="12.60" fill="#d8d8d8" textLength="7.01" lengthAdjust="spacingAndGlyphs">6</text>
<line x1="736.0" y1="111.38" x2="741.5" y2="111.38" stroke="#e0e0e0" stroke-width="1.3"/>
<text x="728.99" y="116.58" font-size="12.60" fill="#d8d8d8" textLength="7.01" lengthAdjust="spacingAndGlyphs">4</text>
<line x1="736.0" y1="163.97" x2="741.5" y2="163.97" stroke="#e0e0e0" stroke-width="1.3"/>
<text x="729.24" y="169.17" font-size="12.60" fill="#d8d8d8" textLength="7.01" lengthAdjust="spacingAndGlyphs">2</text>
<line x1="736.0" y1="216.55" x2="741.5" y2="216.55" stroke="#e0e0e0" stroke-width="1.3"/>
<text x="729.05" y="221.75" font-size="12.60" fill="#d8d8d8" textLength="7.01" lengthAdjust="spacingAndGlyphs">0</text>
<line x1="736.0" y1="269.13" x2="741.5" y2="269.13" stroke="#e0e0e0" stroke-width="1.3"/>
<text x="723.43" y="274.33" font-size="12.60" fill="#d8d8d8" textLength="12.88" lengthAdjust="spacingAndGlyphs">-2</text>
<line x1="736.0" y1="321.72" x2="741.5" y2="321.72" stroke="#e0e0e0" stroke-width="1.3"/>
<text x="723.18" y="326.92" font-size="12.60" fill="#d8d8d8" textLength="12.84" lengthAdjust="spacingAndGlyphs">-4</text>
<line x1="736.0" y1="374.30" x2="741.5" y2="374.30" stroke="#e0e0e0" stroke-width="1.3"/>
<text x="723.31" y="379.50" font-size="12.60" fill="#d8d8d8" textLength="12.86" lengthAdjust="spacingAndGlyphs">-6</text>
<rect x="755.7" y="89.56" width="113.9" height="126.99" fill="url(#dbar)" stroke="#000" stroke-width="1.3"/>
<rect x="348" y="386.5" width="555" height="151" fill="#000"/>
<svg x="348" y="386.5" width="555" height="151" overflow="hidden">
<rect x="16.6" y="7.2" width="54" height="109" fill="#f5f5f5"/>
<rect x="16.6" y="7.2" width="54" height="54.2" fill="#f7f7fd"/>
<rect x="16.6" y="7.2" width="54" height="109" fill="none" stroke="#e4e4e4" stroke-width="1.6"/>
<text x="28.87" y="130.60" font-size="12.20" fill="#f0f0f0" textLength="29.94" lengthAdjust="spacingAndGlyphs" stroke="#f0f0f0" stroke-width="0.3">White</text>
<rect x="80.5" y="7.2" width="54" height="109" fill="#e8e8e8"/>
<rect x="80.5" y="7.2" width="54" height="54.2" fill="#e9e9e9"/>
<rect x="80.5" y="7.2" width="54" height="109" fill="none" stroke="#e4e4e4" stroke-width="1.6"/>
<text x="86.59" y="130.60" font-size="12.20" fill="#f0f0f0" textLength="41.66" lengthAdjust="spacingAndGlyphs" stroke="#f0f0f0" stroke-width="0.3">Gray 80</text>
<rect x="144.4" y="7.2" width="54" height="109" fill="#d3d3d3"/>
<rect x="144.4" y="7.2" width="54" height="54.2" fill="#d4d4d4"/>
<rect x="144.4" y="7.2" width="54" height="109" fill="none" stroke="#e4e4e4" stroke-width="1.6"/>
<text x="150.52" y="130.60" font-size="12.20" fill="#f0f0f0" textLength="41.66" lengthAdjust="spacingAndGlyphs" stroke="#f0f0f0" stroke-width="0.3">Gray 65</text>
<rect x="208.3" y="7.2" width="54" height="109" fill="#bababa"/>
<rect x="208.3" y="7.2" width="54" height="54.2" fill="#bbbbbb"/>
<rect x="208.3" y="7.2" width="54" height="109" fill="none" stroke="#e4e4e4" stroke-width="1.6"/>
<text x="214.39" y="130.60" font-size="12.20" fill="#f0f0f0" textLength="41.66" lengthAdjust="spacingAndGlyphs" stroke="#f0f0f0" stroke-width="0.3">Gray 50</text>
<rect x="272.2" y="7.2" width="54" height="109" fill="#a0a0a0"/>
<rect x="272.2" y="7.2" width="54" height="54.2" fill="#a1a1a1"/>
<rect x="272.2" y="7.2" width="54" height="109" fill="none" stroke="#e4e4e4" stroke-width="1.6"/>
<text x="278.32" y="130.60" font-size="12.20" fill="#f0f0f0" textLength="41.66" lengthAdjust="spacingAndGlyphs" stroke="#f0f0f0" stroke-width="0.3">Gray 35</text>
<rect x="336.1" y="7.2" width="54" height="109" fill="#000000"/>
<rect x="336.1" y="7.2" width="54" height="54.2" fill="#040408"/>
<rect x="336.1" y="7.2" width="54" height="109" fill="none" stroke="#e4e4e4" stroke-width="1.6"/>
<text x="348.31" y="130.60" font-size="12.20" fill="#f0f0f0" textLength="28.64" lengthAdjust="spacingAndGlyphs" stroke="#f0f0f0" stroke-width="0.3">Black</text>
<rect x="400.0" y="7.2" width="54" height="109" fill="#735244"/>
<rect x="400.0" y="7.2" width="54" height="54.2" fill="#6e5546"/>
<rect x="400.0" y="7.2" width="54" height="109" fill="none" stroke="#e4e4e4" stroke-width="1.6"/>
<text x="401.53" y="130.60" font-size="12.20" fill="#f0f0f0" textLength="50.77" lengthAdjust="spacingAndGlyphs" stroke="#f0f0f0" stroke-width="0.3">Dark Skin</text>
<rect x="463.9" y="7.2" width="54" height="109" fill="#c29482"/>
<rect x="463.9" y="7.2" width="54" height="54.2" fill="#b89888"/>
<rect x="463.9" y="7.2" width="54" height="109" fill="none" stroke="#e4e4e4" stroke-width="1.6"/>
<text x="465.10" y="130.60" font-size="12.20" fill="#f0f0f0" textLength="51.44" lengthAdjust="spacingAndGlyphs" stroke="#f0f0f0" stroke-width="0.3">Light Skin</text>
<rect x="527.8" y="7.2" width="54" height="109" fill="#5e7ea6"/>
<rect x="527.8" y="7.2" width="54" height="54.2" fill="#6c819c"/>
<rect x="527.8" y="7.2" width="54" height="109" fill="none" stroke="#e4e4e4" stroke-width="1.6"/>
<text x="531.23" y="130.60" font-size="12.20" fill="#f0f0f0" textLength="46.22" lengthAdjust="spacingAndGlyphs" stroke="#f0f0f0" stroke-width="0.3">Blue Sky</text>
</svg>
<text transform="translate(360.5 433) rotate(-90)" font-size="11.5" fill="#f0f0f0" font-weight="bold" textLength="32" lengthAdjust="spacingAndGlyphs">Actual</text>
<text transform="translate(360.5 495) rotate(-90)" font-size="11.5" fill="#f0f0f0" font-weight="bold" textLength="33" lengthAdjust="spacingAndGlyphs">Target</text>
<rect x="348" y="537.5" width="555" height="14.5" fill="#5e5e5e"/>
<rect x="349" y="538.5" width="14" height="12" rx="1" fill="#6e6e6e"/><path d="M353 544.5 L358 540.5 L358 548.5 Z" fill="#2a2a2a"/>
<rect x="888" y="538.5" width="14" height="12" rx="1" fill="#6e6e6e"/><path d="M898 544.5 L893 540.5 L893 548.5 Z" fill="#2a2a2a"/>
<rect x="364" y="539" width="95" height="11" rx="5.5" fill="#444"/>
<rect x="913" y="32.8" width="643.5" height="516.8" fill="none" stroke="#d98c5e" stroke-width="6.6"/>
<rect x="951.0" y="57.5" width="600.0" height="462.0" fill="#222222"/>
<text x="1195.52" y="53.20" font-size="13.00" fill="#d0d0d0" textLength="79.46" lengthAdjust="spacingAndGlyphs">CIE 1976 u'v'</text>
<g clip-path="url(#plot)"><g clip-path="url(#hs)"><rect x="972.0" y="68.0" width="81.0" height="3.40" fill="url(#r0)"/><rect x="964.0" y="71.0" width="120.0" height="3.40" fill="url(#r1)"/><rect x="960.0" y="74.0" width="152.0" height="3.40" fill="url(#r2)"/><rect x="957.0" y="77.0" width="181.0" height="3.40" fill="url(#r3)"/><rect x="955.0" y="80.0" width="210.0" height="3.40" fill="url(#r4)"/><rect x="953.0" y="83.0" width="238.0" height="3.40" fill="url(#r5)"/><rect x="952.0" y="86.0" width="265.0" height="3.40" fill="url(#r6)"/><rect x="951.0" y="89.0" width="292.0" height="3.40" fill="url(#r7)"/><rect x="951.0" y="92.0" width="318.0" height="3.40" fill="url(#r8)"/><rect x="951.0" y="95.0" width="345.0" height="3.40" fill="url(#r9)"/><rect x="951.0" y="98.0" width="370.0" height="3.40" fill="url(#r10)"/><rect x="951.0" y="101.0" width="397.0" height="3.40" fill="url(#r11)"/><rect x="951.0" y="104.0" width="423.0" height="3.40" fill="url(#r12)"/><rect x="951.0" y="107.0" width="449.0" height="3.40" fill="url(#r13)"/><rect x="951.0" y="110.0" width="475.0" height="3.40" fill="url(#r14)"/><rect x="951.0" y="113.0" width="501.0" height="3.40" fill="url(#r15)"/><rect x="951.0" y="116.0" width="527.0" height="3.40" fill="url(#r16)"/><rect x="951.0" y="119.0" width="554.0" height="3.40" fill="url(#r17)"/><rect x="951.0" y="122.0" width="580.0" height="3.40" fill="url(#r18)"/><rect x="952.0" y="125.0" width="599.0" height="3.40" fill="url(#r19)"/><rect x="953.0" y="128.0" width="598.0" height="3.40" fill="url(#r20)"/><rect x="953.0" y="131.0" width="598.0" height="3.40" fill="url(#r21)"/><rect x="954.0" y="134.0" width="597.0" height="3.40" fill="url(#r22)"/><rect x="954.0" y="137.0" width="597.0" height="3.40" fill="url(#r23)"/><rect x="955.0" y="140.0" width="596.0" height="3.40" fill="url(#r24)"/><rect x="956.0" y="143.0" width="595.0" height="3.40" fill="url(#r25)"/><rect x="957.0" y="146.0" width="594.0" height="3.40" fill="url(#r26)"/><rect x="958.0" y="149.0" width="593.0" height="3.40" fill="url(#r27)"/><rect x="958.0" y="152.0" width="593.0" height="3.40" fill="url(#r28)"/><rect x="959.0" y="155.0" width="592.0" height="3.40" fill="url(#r29)"/><rect x="960.0" y="158.0" width="590.0" height="3.40" fill="url(#r30)"/><rect x="961.0" y="161.0" width="586.0" height="3.40" fill="url(#r31)"/><rect x="962.0" y="164.0" width="582.0" height="3.40" fill="url(#r32)"/><rect x="963.0" y="167.0" width="578.0" height="3.40" fill="url(#r33)"/><rect x="964.0" y="170.0" width="574.0" height="3.40" fill="url(#r34)"/><rect x="965.0" y="173.0" width="570.0" height="3.40" fill="url(#r35)"/><rect x="966.0" y="176.0" width="566.0" height="3.40" fill="url(#r36)"/><rect x="967.0" y="179.0" width="562.0" height="3.40" fill="url(#r37)"/><rect x="968.0" y="182.0" width="559.0" height="3.40" fill="url(#r38)"/><rect x="970.0" y="185.0" width="554.0" height="3.40" fill="url(#r39)"/><rect x="971.0" y="188.0" width="550.0" height="3.40" fill="url(#r40)"/><rect x="972.0" y="191.0" width="546.0" height="3.40" fill="url(#r41)"/><rect x="973.0" y="194.0" width="542.0" height="3.40" fill="url(#r42)"/><rect x="974.0" y="197.0" width="538.0" height="3.40" fill="url(#r43)"/><rect x="975.0" y="200.0" width="534.0" height="3.40" fill="url(#r44)"/><rect x="977.0" y="203.0" width="529.0" height="3.40" fill="url(#r45)"/><rect x="978.0" y="206.0" width="525.0" height="3.40" fill="url(#r46)"/><rect x="979.0" y="209.0" width="521.0" height="3.40" fill="url(#r47)"/><rect x="980.0" y="212.0" width="517.0" height="3.40" fill="url(#r48)"/><rect x="982.0" y="215.0" width="512.0" height="3.40" fill="url(#r49)"/><rect x="983.0" y="218.0" width="508.0" height="3.40" fill="url(#r50)"/><rect x="984.0" y="221.0" width="505.0" height="3.40" fill="url(#r51)"/><rect x="986.0" y="224.0" width="500.0" height="3.40" fill="url(#r52)"/><rect x="987.0" y="227.0" width="496.0" height="3.40" fill="url(#r53)"/><rect x="988.0" y="230.0" width="492.0" height="3.40" fill="url(#r54)"/><rect x="990.0" y="233.0" width="487.0" height="3.40" fill="url(#r55)"/><rect x="991.0" y="236.0" width="483.0" height="3.40" fill="url(#r56)"/><rect x="992.0" y="239.0" width="479.0" height="3.40" fill="url(#r57)"/><rect x="994.0" y="242.0" width="474.0" height="3.40" fill="url(#r58)"/><rect x="995.0" y="245.0" width="470.0" height="3.40" fill="url(#r59)"/><rect x="997.0" y="248.0" width="465.0" height="3.40" fill="url(#r60)"/><rect x="998.0" y="251.0" width="461.0" height="3.40" fill="url(#r61)"/><rect x="1000.0" y="254.0" width="456.0" height="3.40" fill="url(#r62)"/><rect x="1001.0" y="257.0" width="453.0" height="3.40" fill="url(#r63)"/><rect x="1003.0" y="260.0" width="448.0" height="3.40" fill="url(#r64)"/><rect x="1004.0" y="263.0" width="444.0" height="3.40" fill="url(#r65)"/><rect x="1006.0" y="266.0" width="439.0" height="3.40" fill="url(#r66)"/><rect x="1007.0" y="269.0" width="435.0" height="3.40" fill="url(#r67)"/><rect x="1009.0" y="272.0" width="430.0" height="3.40" fill="url(#r68)"/><rect x="1011.0" y="275.0" width="425.0" height="3.40" fill="url(#r69)"/><rect x="1012.0" y="278.0" width="421.0" height="3.40" fill="url(#r70)"/><rect x="1014.0" y="281.0" width="416.0" height="3.40" fill="url(#r71)"/><rect x="1016.0" y="284.0" width="411.0" height="3.40" fill="url(#r72)"/><rect x="1017.0" y="287.0" width="407.0" height="3.40" fill="url(#r73)"/><rect x="1019.0" y="290.0" width="402.0" height="3.40" fill="url(#r74)"/><rect x="1021.0" y="293.0" width="397.0" height="3.40" fill="url(#r75)"/><rect x="1022.0" y="296.0" width="394.0" height="3.40" fill="url(#r76)"/><rect x="1024.0" y="299.0" width="389.0" height="3.40" fill="url(#r77)"/><rect x="1026.0" y="302.0" width="384.0" height="3.40" fill="url(#r78)"/><rect x="1028.0" y="305.0" width="379.0" height="3.40" fill="url(#r79)"/><rect x="1029.0" y="308.0" width="375.0" height="3.40" fill="url(#r80)"/><rect x="1031.0" y="311.0" width="370.0" height="3.40" fill="url(#r81)"/><rect x="1033.0" y="314.0" width="365.0" height="3.40" fill="url(#r82)"/><rect x="1035.0" y="317.0" width="360.0" height="3.40" fill="url(#r83)"/><rect x="1036.0" y="320.0" width="356.0" height="3.40" fill="url(#r84)"/><rect x="1038.0" y="323.0" width="351.0" height="3.40" fill="url(#r85)"/><rect x="1040.0" y="326.0" width="346.0" height="3.40" fill="url(#r86)"/><rect x="1042.0" y="329.0" width="341.0" height="3.40" fill="url(#r87)"/><rect x="1044.0" y="332.0" width="336.0" height="3.40" fill="url(#r88)"/><rect x="1046.0" y="335.0" width="332.0" height="3.40" fill="url(#r89)"/><rect x="1047.0" y="338.0" width="328.0" height="3.40" fill="url(#r90)"/><rect x="1049.0" y="341.0" width="323.0" height="3.40" fill="url(#r91)"/><rect x="1051.0" y="344.0" width="318.0" height="3.40" fill="url(#r92)"/><rect x="1053.0" y="347.0" width="313.0" height="3.40" fill="url(#r93)"/><rect x="1055.0" y="350.0" width="308.0" height="3.40" fill="url(#r94)"/><rect x="1057.0" y="353.0" width="303.0" height="3.40" fill="url(#r95)"/><rect x="1059.0" y="356.0" width="298.0" height="3.40" fill="url(#r96)"/><rect x="1061.0" y="359.0" width="293.0" height="3.40" fill="url(#r97)"/><rect x="1063.0" y="362.0" width="288.0" height="3.40" fill="url(#r98)"/><rect x="1065.0" y="365.0" width="283.0" height="3.40" fill="url(#r99)"/><rect x="1067.0" y="368.0" width="278.0" height="3.40" fill="url(#r100)"/><rect x="1069.0" y="371.0" width="274.0" height="3.40" fill="url(#r101)"/><rect x="1071.0" y="374.0" width="269.0" height="3.40" fill="url(#r102)"/><rect x="1073.0" y="377.0" width="264.0" height="3.40" fill="url(#r103)"/><rect x="1075.0" y="380.0" width="259.0" height="3.40" fill="url(#r104)"/><rect x="1077.0" y="383.0" width="254.0" height="3.40" fill="url(#r105)"/><rect x="1080.0" y="386.0" width="248.0" height="3.40" fill="url(#r106)"/><rect x="1082.0" y="389.0" width="243.0" height="3.40" fill="url(#r107)"/><rect x="1084.0" y="392.0" width="238.0" height="3.40" fill="url(#r108)"/><rect x="1086.0" y="395.0" width="233.0" height="3.40" fill="url(#r109)"/><rect x="1088.0" y="398.0" width="228.0" height="3.40" fill="url(#r110)"/><rect x="1091.0" y="401.0" width="222.0" height="3.40" fill="url(#r111)"/><rect x="1093.0" y="404.0" width="217.0" height="3.40" fill="url(#r112)"/><rect x="1095.0" y="407.0" width="212.0" height="3.40" fill="url(#r113)"/><rect x="1098.0" y="410.0" width="207.0" height="3.40" fill="url(#r114)"/><rect x="1100.0" y="413.0" width="202.0" height="3.40" fill="url(#r115)"/><rect x="1102.0" y="416.0" width="197.0" height="3.40" fill="url(#r116)"/><rect x="1105.0" y="419.0" width="191.0" height="3.40" fill="url(#r117)"/><rect x="1107.0" y="422.0" width="186.0" height="3.40" fill="url(#r118)"/><rect x="1110.0" y="425.0" width="180.0" height="3.40" fill="url(#r119)"/><rect x="1113.0" y="428.0" width="174.0" height="3.40" fill="url(#r120)"/><rect x="1115.0" y="431.0" width="169.0" height="3.40" fill="url(#r121)"/><rect x="1118.0" y="434.0" width="163.0" height="3.40" fill="url(#r122)"/><rect x="1121.0" y="437.0" width="157.0" height="3.40" fill="url(#r123)"/><rect x="1123.0" y="440.0" width="152.0" height="3.40" fill="url(#r124)"/><rect x="1126.0" y="443.0" width="146.0" height="3.40" fill="url(#r125)"/><rect x="1129.0" y="446.0" width="140.0" height="3.40" fill="url(#r126)"/><rect x="1133.0" y="449.0" width="134.0" height="3.40" fill="url(#r127)"/><rect x="1136.0" y="452.0" width="128.0" height="3.40" fill="url(#r128)"/><rect x="1139.0" y="455.0" width="122.0" height="3.40" fill="url(#r129)"/><rect x="1142.0" y="458.0" width="116.0" height="3.40" fill="url(#r130)"/><rect x="1145.0" y="461.0" width="110.0" height="3.40" fill="url(#r131)"/><rect x="1149.0" y="464.0" width="103.0" height="3.40" fill="url(#r132)"/><rect x="1152.0" y="467.0" width="97.0" height="3.40" fill="url(#r133)"/><rect x="1156.0" y="470.0" width="90.0" height="3.40" fill="url(#r134)"/><rect x="1159.0" y="473.0" width="84.0" height="3.40" fill="url(#r135)"/><rect x="1163.0" y="476.0" width="77.0" height="3.40" fill="url(#r136)"/><rect x="1167.0" y="479.0" width="70.0" height="3.40" fill="url(#r137)"/><rect x="1170.0" y="482.0" width="64.0" height="3.40" fill="url(#r138)"/><rect x="1174.0" y="485.0" width="57.0" height="3.40" fill="url(#r139)"/><rect x="1178.0" y="488.0" width="51.0" height="3.40" fill="url(#r140)"/><rect x="1181.0" y="491.0" width="45.0" height="3.40" fill="url(#r141)"/><rect x="1185.0" y="494.0" width="38.0" height="3.40" fill="url(#r142)"/><rect x="1188.0" y="497.0" width="32.0" height="3.40" fill="url(#r143)"/><rect x="1192.0" y="500.0" width="25.0" height="3.40" fill="url(#r144)"/><rect x="1196.0" y="503.0" width="18.0" height="3.40" fill="url(#r145)"/><rect x="1200.0" y="506.0" width="11.0" height="3.40" fill="url(#r146)"/></g><g clip-path="url(#tri)"><rect x="1074.0" y="87.0" width="23.0" height="2.40" fill="url(#r147)"/><rect x="1074.0" y="89.0" width="44.0" height="2.40" fill="url(#r148)"/><rect x="1074.0" y="91.0" width="66.0" height="2.40" fill="url(#r149)"/><rect x="1074.0" y="93.0" width="87.0" height="2.40" fill="url(#r150)"/><rect x="1075.0" y="95.0" width="108.0" height="2.40" fill="url(#r151)"/><rect x="1075.0" y="97.0" width="129.0" height="2.40" fill="url(#r152)"/><rect x="1075.0" y="99.0" width="150.0" height="2.40" fill="url(#r153)"/><rect x="1076.0" y="101.0" width="171.0" height="2.40" fill="url(#r154)"/><rect x="1076.0" y="103.0" width="192.0" height="2.40" fill="url(#r155)"/><rect x="1076.0" y="105.0" width="214.0" height="2.40" fill="url(#r156)"/><rect x="1077.0" y="107.0" width="234.0" height="2.40" fill="url(#r157)"/><rect x="1077.0" y="109.0" width="255.0" height="2.40" fill="url(#r158)"/><rect x="1077.0" y="111.0" width="277.0" height="2.40" fill="url(#r159)"/><rect x="1078.0" y="113.0" width="297.0" height="2.40" fill="url(#r160)"/><rect x="1078.0" y="115.0" width="319.0" height="2.40" fill="url(#r161)"/><rect x="1078.0" y="117.0" width="326.0" height="2.40" fill="url(#r162)"/><rect x="1079.0" y="119.0" width="324.0" height="2.40" fill="url(#r163)"/><rect x="1079.0" y="121.0" width="322.0" height="2.40" fill="url(#r164)"/><rect x="1079.0" y="123.0" width="320.0" height="2.40" fill="url(#r165)"/><rect x="1080.0" y="125.0" width="317.0" height="2.40" fill="url(#r166)"/><rect x="1080.0" y="127.0" width="315.0" height="2.40" fill="url(#r167)"/><rect x="1080.0" y="129.0" width="313.0" height="2.40" fill="url(#r168)"/><rect x="1081.0" y="131.0" width="310.0" height="2.40" fill="url(#r169)"/><rect x="1081.0" y="133.0" width="308.0" height="2.40" fill="url(#r170)"/><rect x="1081.0" y="135.0" width="306.0" height="2.40" fill="url(#r171)"/><rect x="1082.0" y="137.0" width="303.0" height="2.40" fill="url(#r172)"/><rect x="1082.0" y="139.0" width="301.0" height="2.40" fill="url(#r173)"/><rect x="1082.0" y="141.0" width="299.0" height="2.40" fill="url(#r174)"/><rect x="1083.0" y="143.0" width="296.0" height="2.40" fill="url(#r175)"/><rect x="1083.0" y="145.0" width="294.0" height="2.40" fill="url(#r176)"/><rect x="1083.0" y="147.0" width="292.0" height="2.40" fill="url(#r177)"/><rect x="1084.0" y="149.0" width="289.0" height="2.40" fill="url(#r178)"/><rect x="1084.0" y="151.0" width="288.0" height="2.40" fill="url(#r179)"/><rect x="1084.0" y="153.0" width="286.0" height="2.40" fill="url(#r180)"/><rect x="1084.0" y="155.0" width="284.0" height="2.40" fill="url(#r181)"/><rect x="1085.0" y="157.0" width="281.0" height="2.40" fill="url(#r182)"/><rect x="1085.0" y="159.0" width="279.0" height="2.40" fill="url(#r183)"/><rect x="1085.0" y="161.0" width="277.0" height="2.40" fill="url(#r184)"/><rect x="1086.0" y="163.0" width="274.0" height="2.40" fill="url(#r185)"/><rect x="1086.0" y="165.0" width="272.0" height="2.40" fill="url(#r186)"/><rect x="1086.0" y="167.0" width="270.0" height="2.40" fill="url(#r187)"/><rect x="1087.0" y="169.0" width="267.0" height="2.40" fill="url(#r188)"/><rect x="1087.0" y="171.0" width="265.0" height="2.40" fill="url(#r189)"/><rect x="1087.0" y="173.0" width="263.0" height="2.40" fill="url(#r190)"/><rect x="1088.0" y="175.0" width="260.0" height="2.40" fill="url(#r191)"/><rect x="1088.0" y="177.0" width="258.0" height="2.40" fill="url(#r192)"/><rect x="1088.0" y="179.0" width="256.0" height="2.40" fill="url(#r193)"/><rect x="1089.0" y="181.0" width="253.0" height="2.40" fill="url(#r194)"/><rect x="1089.0" y="183.0" width="251.0" height="2.40" fill="url(#r195)"/><rect x="1089.0" y="185.0" width="249.0" height="2.40" fill="url(#r196)"/><rect x="1090.0" y="187.0" width="246.0" height="2.40" fill="url(#r197)"/><rect x="1090.0" y="189.0" width="244.0" height="2.40" fill="url(#r198)"/><rect x="1090.0" y="191.0" width="242.0" height="2.40" fill="url(#r199)"/><rect x="1091.0" y="193.0" width="239.0" height="2.40" fill="url(#r200)"/><rect x="1091.0" y="195.0" width="237.0" height="2.40" fill="url(#r201)"/><rect x="1091.0" y="197.0" width="235.0" height="2.40" fill="url(#r202)"/><rect x="1092.0" y="199.0" width="232.0" height="2.40" fill="url(#r203)"/><rect x="1092.0" y="201.0" width="230.0" height="2.40" fill="url(#r204)"/><rect x="1092.0" y="203.0" width="228.0" height="2.40" fill="url(#r205)"/><rect x="1093.0" y="205.0" width="226.0" height="2.40" fill="url(#r206)"/><rect x="1093.0" y="207.0" width="224.0" height="2.40" fill="url(#r207)"/><rect x="1093.0" y="209.0" width="222.0" height="2.40" fill="url(#r208)"/><rect x="1094.0" y="211.0" width="219.0" height="2.40" fill="url(#r209)"/><rect x="1094.0" y="213.0" width="217.0" height="2.40" fill="url(#r210)"/><rect x="1094.0" y="215.0" width="215.0" height="2.40" fill="url(#r211)"/><rect x="1095.0" y="217.0" width="212.0" height="2.40" fill="url(#r212)"/><rect x="1095.0" y="219.0" width="210.0" height="2.40" fill="url(#r213)"/><rect x="1095.0" y="221.0" width="208.0" height="2.40" fill="url(#r214)"/><rect x="1096.0" y="223.0" width="205.0" height="2.40" fill="url(#r215)"/><rect x="1096.0" y="225.0" width="203.0" height="2.40" fill="url(#r216)"/><rect x="1096.0" y="227.0" width="201.0" height="2.40" fill="url(#r217)"/><rect x="1096.0" y="229.0" width="199.0" height="2.40" fill="url(#r218)"/><rect x="1097.0" y="231.0" width="196.0" height="2.40" fill="url(#r219)"/><rect x="1097.0" y="233.0" width="194.0" height="2.40" fill="url(#r220)"/><rect x="1097.0" y="235.0" width="192.0" height="2.40" fill="url(#r221)"/><rect x="1098.0" y="237.0" width="189.0" height="2.40" fill="url(#r222)"/><rect x="1098.0" y="239.0" width="187.0" height="2.40" fill="url(#r223)"/><rect x="1098.0" y="241.0" width="185.0" height="2.40" fill="url(#r224)"/><rect x="1099.0" y="243.0" width="182.0" height="2.40" fill="url(#r225)"/><rect x="1099.0" y="245.0" width="180.0" height="2.40" fill="url(#r226)"/><rect x="1099.0" y="247.0" width="178.0" height="2.40" fill="url(#r227)"/><rect x="1100.0" y="249.0" width="175.0" height="2.40" fill="url(#r228)"/><rect x="1100.0" y="251.0" width="173.0" height="2.40" fill="url(#r229)"/><rect x="1100.0" y="253.0" width="171.0" height="2.40" fill="url(#r230)"/><rect x="1101.0" y="255.0" width="168.0" height="2.40" fill="url(#r231)"/><rect x="1101.0" y="257.0" width="166.0" height="2.40" fill="url(#r232)"/><rect x="1101.0" y="259.0" width="165.0" height="2.40" fill="url(#r233)"/><rect x="1102.0" y="261.0" width="162.0" height="2.40" fill="url(#r234)"/><rect x="1102.0" y="263.0" width="160.0" height="2.40" fill="url(#r235)"/><rect x="1102.0" y="265.0" width="158.0" height="2.40" fill="url(#r236)"/><rect x="1103.0" y="267.0" width="155.0" height="2.40" fill="url(#r237)"/><rect x="1103.0" y="269.0" width="153.0" height="2.40" fill="url(#r238)"/><rect x="1103.0" y="271.0" width="151.0" height="2.40" fill="url(#r239)"/><rect x="1104.0" y="273.0" width="148.0" height="2.40" fill="url(#r240)"/><rect x="1104.0" y="275.0" width="146.0" height="2.40" fill="url(#r241)"/><rect x="1104.0" y="277.0" width="144.0" height="2.40" fill="url(#r242)"/><rect x="1105.0" y="279.0" width="141.0" height="2.40" fill="url(#r243)"/><rect x="1105.0" y="281.0" width="139.0" height="2.40" fill="url(#r244)"/><rect x="1105.0" y="283.0" width="137.0" height="2.40" fill="url(#r245)"/><rect x="1106.0" y="285.0" width="134.0" height="2.40" fill="url(#r246)"/><rect x="1106.0" y="287.0" width="132.0" height="2.40" fill="url(#r247)"/><rect x="1106.0" y="289.0" width="130.0" height="2.40" fill="url(#r248)"/><rect x="1107.0" y="291.0" width="127.0" height="2.40" fill="url(#r249)"/><rect x="1107.0" y="293.0" width="125.0" height="2.40" fill="url(#r250)"/><rect x="1107.0" y="295.0" width="123.0" height="2.40" fill="url(#r251)"/><rect x="1108.0" y="297.0" width="120.0" height="2.40" fill="url(#r252)"/><rect x="1108.0" y="299.0" width="118.0" height="2.40" fill="url(#r253)"/><rect x="1108.0" y="301.0" width="116.0" height="2.40" fill="url(#r254)"/><rect x="1108.0" y="303.0" width="114.0" height="2.40" fill="url(#r255)"/><rect x="1109.0" y="305.0" width="111.0" height="2.40" fill="url(#r256)"/><rect x="1109.0" y="307.0" width="109.0" height="2.40" fill="url(#r257)"/><rect x="1109.0" y="309.0" width="107.0" height="2.40" fill="url(#r258)"/><rect x="1110.0" y="311.0" width="104.0" height="2.40" fill="url(#r259)"/><rect x="1110.0" y="313.0" width="103.0" height="2.40" fill="url(#r260)"/><rect x="1110.0" y="315.0" width="101.0" height="2.40" fill="url(#r261)"/><rect x="1111.0" y="317.0" width="98.0" height="2.40" fill="url(#r262)"/><rect x="1111.0" y="319.0" width="96.0" height="2.40" fill="url(#r263)"/><rect x="1111.0" y="321.0" width="94.0" height="2.40" fill="url(#r264)"/><rect x="1112.0" y="323.0" width="91.0" height="2.40" fill="url(#r265)"/><rect x="1112.0" y="325.0" width="89.0" height="2.40" fill="url(#r266)"/><rect x="1112.0" y="327.0" width="87.0" height="2.40" fill="url(#r267)"/><rect x="1113.0" y="329.0" width="84.0" height="2.40" fill="url(#r268)"/><rect x="1113.0" y="331.0" width="82.0" height="2.40" fill="url(#r269)"/><rect x="1113.0" y="333.0" width="80.0" height="2.40" fill="url(#r270)"/><rect x="1114.0" y="335.0" width="77.0" height="2.40" fill="url(#r271)"/><rect x="1114.0" y="337.0" width="75.0" height="2.40" fill="url(#r272)"/><rect x="1114.0" y="339.0" width="73.0" height="2.40" fill="url(#r273)"/><rect x="1115.0" y="341.0" width="70.0" height="2.40" fill="url(#r274)"/><rect x="1115.0" y="343.0" width="68.0" height="2.40" fill="url(#r275)"/><rect x="1115.0" y="345.0" width="66.0" height="2.40" fill="url(#r276)"/><rect x="1116.0" y="347.0" width="63.0" height="2.40" fill="url(#r277)"/><rect x="1116.0" y="349.0" width="61.0" height="2.40" fill="url(#r278)"/><rect x="1116.0" y="351.0" width="59.0" height="2.40" fill="url(#r279)"/><rect x="1117.0" y="353.0" width="56.0" height="2.40" fill="url(#r280)"/><rect x="1117.0" y="355.0" width="54.0" height="2.40" fill="url(#r281)"/><rect x="1117.0" y="357.0" width="52.0" height="2.40" fill="url(#r282)"/><rect x="1118.0" y="359.0" width="49.0" height="2.40" fill="url(#r283)"/><rect x="1118.0" y="361.0" width="47.0" height="2.40" fill="url(#r284)"/><rect x="1118.0" y="363.0" width="45.0" height="2.40" fill="url(#r285)"/><rect x="1119.0" y="365.0" width="42.0" height="2.40" fill="url(#r286)"/><rect x="1119.0" y="367.0" width="41.0" height="2.40" fill="url(#r287)"/><rect x="1119.0" y="369.0" width="39.0" height="2.40" fill="url(#r288)"/><rect x="1120.0" y="371.0" width="36.0" height="2.40" fill="url(#r289)"/><rect x="1120.0" y="373.0" width="34.0" height="2.40" fill="url(#r290)"/><rect x="1120.0" y="375.0" width="32.0" height="2.40" fill="url(#r291)"/><rect x="1121.0" y="377.0" width="29.0" height="2.40" fill="url(#r292)"/><rect x="1121.0" y="379.0" width="27.0" height="2.40" fill="url(#r293)"/><rect x="1121.0" y="381.0" width="25.0" height="2.40" fill="url(#r294)"/><rect x="1121.0" y="383.0" width="23.0" height="2.40" fill="url(#r295)"/><rect x="1122.0" y="385.0" width="20.0" height="2.40" fill="url(#r296)"/><rect x="1122.0" y="387.0" width="18.0" height="2.40" fill="url(#r297)"/><rect x="1122.0" y="389.0" width="16.0" height="2.40" fill="url(#r298)"/><rect x="1123.0" y="391.0" width="13.0" height="2.40" fill="url(#r299)"/><rect x="1123.0" y="393.0" width="11.0" height="2.40" fill="url(#r300)"/><rect x="1123.0" y="395.0" width="9.0" height="2.40" fill="url(#r301)"/><rect x="1124.0" y="397.0" width="6.0" height="2.40" fill="url(#r302)"/></g></g>
<rect x="951.0" y="57.5" width="600.0" height="462.0" fill="none" stroke="#a8a8a8" stroke-width="1.2"/>
<line x1="944.5" y1="519.50" x2="951" y2="519.50" stroke="#d8d8d8" stroke-width="1.3"/>
<text x="938.34" y="526.60" font-size="13.20" fill="#d0d0d0" textLength="7.34" lengthAdjust="spacingAndGlyphs">0</text>
<line x1="951.00" y1="519.5" x2="951.00" y2="526" stroke="#d8d8d8" stroke-width="1.3"/>
<text x="947.30" y="540.00" font-size="13.20" fill="#d0d0d0" textLength="7.34" lengthAdjust="spacingAndGlyphs">0</text>
<line x1="944.5" y1="481.08" x2="951" y2="481.08" stroke="#d8d8d8" stroke-width="1.3"/>
<text x="920.05" y="486.18" font-size="13.20" fill="#d0d0d0" textLength="25.69" lengthAdjust="spacingAndGlyphs">0,05</text>
<line x1="1001.00" y1="519.5" x2="1001.00" y2="526" stroke="#d8d8d8" stroke-width="1.3"/>
<text x="988.16" y="540.00" font-size="13.20" fill="#d0d0d0" textLength="25.69" lengthAdjust="spacingAndGlyphs">0,05</text>
<line x1="944.5" y1="442.66" x2="951" y2="442.66" stroke="#d8d8d8" stroke-width="1.3"/>
<text x="927.45" y="447.76" font-size="13.20" fill="#d0d0d0" textLength="18.35" lengthAdjust="spacingAndGlyphs">0,1</text>
<line x1="1051.00" y1="519.5" x2="1051.00" y2="526" stroke="#d8d8d8" stroke-width="1.3"/>
<text x="1041.86" y="540.00" font-size="13.20" fill="#d0d0d0" textLength="18.35" lengthAdjust="spacingAndGlyphs">0,1</text>
<line x1="944.5" y1="404.24" x2="951" y2="404.24" stroke="#d8d8d8" stroke-width="1.3"/>
<text x="920.05" y="409.34" font-size="13.20" fill="#d0d0d0" textLength="25.69" lengthAdjust="spacingAndGlyphs">0,15</text>
<line x1="1101.00" y1="519.5" x2="1101.00" y2="526" stroke="#d8d8d8" stroke-width="1.3"/>
<text x="1088.16" y="540.00" font-size="13.20" fill="#d0d0d0" textLength="25.69" lengthAdjust="spacingAndGlyphs">0,15</text>
<line x1="944.5" y1="365.82" x2="951" y2="365.82" stroke="#d8d8d8" stroke-width="1.3"/>
<text x="927.51" y="370.92" font-size="13.20" fill="#d0d0d0" textLength="18.35" lengthAdjust="spacingAndGlyphs">0,2</text>
<line x1="1151.00" y1="519.5" x2="1151.00" y2="526" stroke="#d8d8d8" stroke-width="1.3"/>
<text x="1141.89" y="540.00" font-size="13.20" fill="#d0d0d0" textLength="18.35" lengthAdjust="spacingAndGlyphs">0,2</text>
<line x1="944.5" y1="327.40" x2="951" y2="327.40" stroke="#d8d8d8" stroke-width="1.3"/>
<text x="920.05" y="332.50" font-size="13.20" fill="#d0d0d0" textLength="25.69" lengthAdjust="spacingAndGlyphs">0,25</text>
<line x1="1201.00" y1="519.5" x2="1201.00" y2="526" stroke="#d8d8d8" stroke-width="1.3"/>
<text x="1188.16" y="540.00" font-size="13.20" fill="#d0d0d0" textLength="25.69" lengthAdjust="spacingAndGlyphs">0,25</text>
<line x1="944.5" y1="288.98" x2="951" y2="288.98" stroke="#d8d8d8" stroke-width="1.3"/>
<text x="927.38" y="294.08" font-size="13.20" fill="#d0d0d0" textLength="18.35" lengthAdjust="spacingAndGlyphs">0,3</text>
<line x1="1251.00" y1="519.5" x2="1251.00" y2="526" stroke="#d8d8d8" stroke-width="1.3"/>
<text x="1241.83" y="540.00" font-size="13.20" fill="#d0d0d0" textLength="18.35" lengthAdjust="spacingAndGlyphs">0,3</text>
<line x1="944.5" y1="250.56" x2="951" y2="250.56" stroke="#d8d8d8" stroke-width="1.3"/>
<text x="920.05" y="255.66" font-size="13.20" fill="#d0d0d0" textLength="25.69" lengthAdjust="spacingAndGlyphs">0,35</text>
<line x1="1301.00" y1="519.5" x2="1301.00" y2="526" stroke="#d8d8d8" stroke-width="1.3"/>
<text x="1288.16" y="540.00" font-size="13.20" fill="#d0d0d0" textLength="25.69" lengthAdjust="spacingAndGlyphs">0,35</text>
<line x1="944.5" y1="212.14" x2="951" y2="212.14" stroke="#d8d8d8" stroke-width="1.3"/>
<text x="927.25" y="217.24" font-size="13.20" fill="#d0d0d0" textLength="18.35" lengthAdjust="spacingAndGlyphs">0,4</text>
<line x1="1351.00" y1="519.5" x2="1351.00" y2="526" stroke="#d8d8d8" stroke-width="1.3"/>
<text x="1341.76" y="540.00" font-size="13.20" fill="#d0d0d0" textLength="18.35" lengthAdjust="spacingAndGlyphs">0,4</text>
<line x1="944.5" y1="173.72" x2="951" y2="173.72" stroke="#d8d8d8" stroke-width="1.3"/>
<text x="920.05" y="178.82" font-size="13.20" fill="#d0d0d0" textLength="25.69" lengthAdjust="spacingAndGlyphs">0,45</text>
<line x1="1401.00" y1="519.5" x2="1401.00" y2="526" stroke="#d8d8d8" stroke-width="1.3"/>
<text x="1388.16" y="540.00" font-size="13.20" fill="#d0d0d0" textLength="25.69" lengthAdjust="spacingAndGlyphs">0,45</text>
<line x1="944.5" y1="135.30" x2="951" y2="135.30" stroke="#d8d8d8" stroke-width="1.3"/>
<text x="927.38" y="140.40" font-size="13.20" fill="#d0d0d0" textLength="18.35" lengthAdjust="spacingAndGlyphs">0,5</text>
<line x1="1451.00" y1="519.5" x2="1451.00" y2="526" stroke="#d8d8d8" stroke-width="1.3"/>
<text x="1441.83" y="540.00" font-size="13.20" fill="#d0d0d0" textLength="18.35" lengthAdjust="spacingAndGlyphs">0,5</text>
<line x1="944.5" y1="96.88" x2="951" y2="96.88" stroke="#d8d8d8" stroke-width="1.3"/>
<text x="920.05" y="101.98" font-size="13.20" fill="#d0d0d0" textLength="25.69" lengthAdjust="spacingAndGlyphs">0,55</text>
<line x1="1501.00" y1="519.5" x2="1501.00" y2="526" stroke="#d8d8d8" stroke-width="1.3"/>
<text x="1488.16" y="540.00" font-size="13.20" fill="#d0d0d0" textLength="25.69" lengthAdjust="spacingAndGlyphs">0,55</text>
<g clip-path="url(#plot)"><rect x="1069.0" y="79.8" width="12.5" height="12.5" fill="none" stroke="#ffffff" stroke-opacity="0.92" stroke-width="1.7"/><rect x="1092.0" y="102.7" width="12.5" height="12.5" fill="none" stroke="#ffffff" stroke-opacity="0.92" stroke-width="1.7"/><rect x="1129.0" y="94.7" width="12.5" height="12.5" fill="none" stroke="#ffffff" stroke-opacity="0.92" stroke-width="1.7"/><rect x="1126.8" y="114.5" width="12.5" height="12.5" fill="none" stroke="#ffffff" stroke-opacity="0.92" stroke-width="1.7"/><rect x="1148.5" y="86.3" width="12.5" height="12.5" fill="none" stroke="#ffffff" stroke-opacity="0.92" stroke-width="1.7"/><rect x="1173.7" y="90.7" width="12.5" height="12.5" fill="none" stroke="#ffffff" stroke-opacity="0.92" stroke-width="1.7"/><rect x="1203.5" y="96.8" width="12.5" height="12.5" fill="none" stroke="#ffffff" stroke-opacity="0.92" stroke-width="1.7"/><rect x="1243.8" y="100.0" width="12.5" height="12.5" fill="none" stroke="#ffffff" stroke-opacity="0.92" stroke-width="1.7"/><rect x="1243.8" y="104.0" width="12.5" height="12.5" fill="none" stroke="#ffffff" stroke-opacity="0.92" stroke-width="1.7"/><rect x="1098.5" y="144.6" width="12.5" height="12.5" fill="none" stroke="#ffffff" stroke-opacity="0.92" stroke-width="1.7"/><rect x="1083.7" y="162.8" width="12.5" height="12.5" fill="none" stroke="#ffffff" stroke-opacity="0.92" stroke-width="1.7"/><rect x="1088.5" y="191.8" width="12.5" height="12.5" fill="none" stroke="#ffffff" stroke-opacity="0.92" stroke-width="1.7"/><rect x="1120.7" y="188.6" width="12.5" height="12.5" fill="none" stroke="#ffffff" stroke-opacity="0.92" stroke-width="1.7"/><rect x="1139.8" y="194.1" width="12.5" height="12.5" fill="none" stroke="#ffffff" stroke-opacity="0.92" stroke-width="1.7"/><rect x="1172.8" y="208.8" width="12.5" height="12.5" fill="none" stroke="#ffffff" stroke-opacity="0.92" stroke-width="1.7"/><rect x="1231.8" y="183.7" width="12.5" height="12.5" fill="none" stroke="#ffffff" stroke-opacity="0.92" stroke-width="1.7"/><rect x="1394.8" y="109.8" width="12.5" height="12.5" fill="none" stroke="#ffffff" stroke-opacity="0.92" stroke-width="1.7"/><rect x="1319.8" y="128.6" width="12.5" height="12.5" fill="none" stroke="#ffffff" stroke-opacity="0.92" stroke-width="1.7"/><rect x="1261.5" y="140.6" width="12.5" height="12.5" fill="none" stroke="#ffffff" stroke-opacity="0.92" stroke-width="1.7"/><rect x="1226.8" y="113.8" width="12.5" height="12.5" fill="none" stroke="#ffffff" stroke-opacity="0.92" stroke-width="1.7"/><rect x="1219.8" y="121.0" width="12.5" height="12.5" fill="none" stroke="#ffffff" stroke-opacity="0.92" stroke-width="1.7"/><rect x="1122.8" y="238.3" width="12.5" height="12.5" fill="none" stroke="#ffffff" stroke-opacity="0.92" stroke-width="1.7"/><rect x="1249.7" y="257.4" width="12.5" height="12.5" fill="none" stroke="#ffffff" stroke-opacity="0.92" stroke-width="1.7"/><rect x="1122.8" y="285.4" width="12.5" height="12.5" fill="none" stroke="#ffffff" stroke-opacity="0.92" stroke-width="1.7"/><rect x="1120.8" y="390.4" width="12.5" height="12.5" fill="none" stroke="#ffffff" stroke-opacity="0.92" stroke-width="1.7"/><rect x="1178.8" y="133.2" width="12.5" height="12.5" fill="none" stroke="#ffffff" stroke-opacity="0.92" stroke-width="1.7"/><rect x="1187.5" y="128.1" width="12.5" height="12.5" fill="none" stroke="#ffffff" stroke-opacity="0.92" stroke-width="1.7"/><rect x="1201.5" y="122.8" width="12.5" height="12.5" fill="none" stroke="#ffffff" stroke-opacity="0.92" stroke-width="1.7"/><rect x="1218.8" y="115.8" width="12.5" height="12.5" fill="none" stroke="#ffffff" stroke-opacity="0.92" stroke-width="1.7"/><rect x="1215.3" y="124.6" width="12.5" height="12.5" fill="none" stroke="#ffffff" stroke-opacity="0.92" stroke-width="1.7"/><rect x="1205.8" y="118.8" width="12.5" height="12.5" fill="none" stroke="#ffffff" stroke-opacity="0.92" stroke-width="1.7"/><rect x="1193.8" y="126.8" width="12.5" height="12.5" fill="none" stroke="#ffffff" stroke-opacity="0.92" stroke-width="1.7"/><rect x="1183.8" y="130.8" width="12.5" height="12.5" fill="none" stroke="#ffffff" stroke-opacity="0.92" stroke-width="1.7"/><rect x="1208.8" y="111.8" width="12.5" height="12.5" fill="none" stroke="#ffffff" stroke-opacity="0.92" stroke-width="1.7"/><rect x="1223.8" y="107.8" width="12.5" height="12.5" fill="none" stroke="#ffffff" stroke-opacity="0.92" stroke-width="1.7"/><rect x="1176.8" y="134.8" width="12.5" height="12.5" fill="none" stroke="#ffffff" stroke-opacity="0.92" stroke-width="1.7"/><rect x="1196.8" y="120.8" width="12.5" height="12.5" fill="none" stroke="#ffffff" stroke-opacity="0.92" stroke-width="1.7"/><rect x="1211.8" y="117.8" width="12.5" height="12.5" fill="none" stroke="#ffffff" stroke-opacity="0.92" stroke-width="1.7"/><rect x="1141.7" y="151.7" width="12.5" height="12.5" fill="none" stroke="#000" stroke-width="2.2"/><circle cx="1148.3" cy="163.4" r="4.3" fill="#fafafa" stroke="#1a1a1a" stroke-width="1.1"/><circle cx="1107.3" cy="85.6" r="4.3" fill="#22e022" stroke="#1a1a1a" stroke-width="1.1"/><circle cx="1124.0" cy="113.4" r="4.3" fill="#4a7a48" stroke="#1a1a1a" stroke-width="1.1"/><circle cx="1150.4" cy="103.4" r="4.3" fill="#96a050" stroke="#1a1a1a" stroke-width="1.1"/><circle cx="1145.1" cy="125.6" r="4.3" fill="#4a5a38" stroke="#1a1a1a" stroke-width="1.1"/><circle cx="1166.3" cy="93.5" r="4.3" fill="#f0e020" stroke="#1a1a1a" stroke-width="1.1"/><circle cx="1182.5" cy="98.7" r="4.3" fill="#e0b830" stroke="#1a1a1a" stroke-width="1.1"/><circle cx="1200.4" cy="103.4" r="4.3" fill="#e0a040" stroke="#1a1a1a" stroke-width="1.1"/><circle cx="1224.2" cy="108.2" r="4.3" fill="#8a5a30" stroke="#1a1a1a" stroke-width="1.1"/><circle cx="1222.2" cy="146.5" r="4.3" fill="#b45868" stroke="#1a1a1a" stroke-width="1.1"/><circle cx="1122.2" cy="153.4" r="4.3" fill="#60a090" stroke="#1a1a1a" stroke-width="1.1"/><circle cx="1107.3" cy="172.2" r="4.3" fill="#20e0e8" stroke="#1a1a1a" stroke-width="1.1"/><circle cx="1107.3" cy="191.3" r="4.3" fill="#207a8c" stroke="#1a1a1a" stroke-width="1.1"/><circle cx="1130.4" cy="186.1" r="4.3" fill="#5a7090" stroke="#1a1a1a" stroke-width="1.1"/><circle cx="1141.3" cy="189.0" r="4.3" fill="#7a7890" stroke="#1a1a1a" stroke-width="1.1"/><circle cx="1158.7" cy="201.2" r="4.3" fill="#5a3a6a" stroke="#1a1a1a" stroke-width="1.1"/><circle cx="1146.9" cy="205.2" r="4.3" fill="#000000" stroke="#1a1a1a" stroke-width="1.1"/><circle cx="1194.7" cy="181.2" r="4.3" fill="#b05a90" stroke="#1a1a1a" stroke-width="1.1"/><circle cx="1149.6" cy="158.3" r="4.3" fill="#a4a4a4" stroke="#1a1a1a" stroke-width="1.1"/><circle cx="1328.6" cy="112.2" r="4.3" fill="#e82020" stroke="#1a1a1a" stroke-width="1.1"/><circle cx="1264.3" cy="134.3" r="4.3" fill="#b03848" stroke="#1a1a1a" stroke-width="1.1"/><circle cx="1125.2" cy="220.4" r="4.3" fill="#5a6a98" stroke="#1a1a1a" stroke-width="1.1"/><circle cx="1120.8" cy="251.0" r="4.3" fill="#3a4488" stroke="#1a1a1a" stroke-width="1.1"/><circle cx="1191.4" cy="240.3" r="4.3" fill="#f020f0" stroke="#1a1a1a" stroke-width="1.1"/><circle cx="1108.6" cy="315.2" r="4.3" fill="#1818e8" stroke="#1a1a1a" stroke-width="1.1"/><circle cx="1173.0" cy="135.2" r="4.3" fill="#f0c0a0" stroke="#1a1a1a" stroke-width="1.1"/><circle cx="1171.2" cy="143.0" r="4.3" fill="#f0c0a0" stroke="#1a1a1a" stroke-width="1.1"/><circle cx="1181.6" cy="133.4" r="4.3" fill="#a06040" stroke="#1a1a1a" stroke-width="1.1"/><circle cx="1187.7" cy="130.0" r="4.3" fill="#d09870" stroke="#1a1a1a" stroke-width="1.1"/><circle cx="1189.5" cy="124.7" r="4.3" fill="#d09060" stroke="#1a1a1a" stroke-width="1.1"/><circle cx="1198.1" cy="125.6" r="4.3" fill="#d09070" stroke="#1a1a1a" stroke-width="1.1"/><circle cx="1200.7" cy="117.8" r="4.3" fill="#8a5030" stroke="#1a1a1a" stroke-width="1.1"/><circle cx="1208.6" cy="116.0" r="4.3" fill="#7a4a2a" stroke="#1a1a1a" stroke-width="1.1"/><circle cx="1212.9" cy="121.3" r="4.3" fill="#7a4a2a" stroke="#1a1a1a" stroke-width="1.1"/><circle cx="1199.0" cy="130.8" r="4.3" fill="#e0a080" stroke="#1a1a1a" stroke-width="1.1"/><circle cx="1193.0" cy="131.7" r="4.3" fill="#d89878" stroke="#1a1a1a" stroke-width="1.1"/><circle cx="1224.2" cy="106.5" r="4.3" fill="#7a4a2a" stroke="#1a1a1a" stroke-width="1.1"/></g>
<rect x="1359" y="357" width="187" height="122.5" fill="url(#ins)" stroke="#8a8a8a" stroke-width="2"/>
<g clip-path="url(#insc)"><rect x="1399.9" y="397.5" width="12" height="12" fill="none" stroke="#fff8f0" stroke-width="1.6"/><rect x="1473.8" y="385.0" width="12" height="12" fill="none" stroke="#fff8f0" stroke-width="1.6"/><rect x="1507.7" y="385.0" width="12" height="12" fill="none" stroke="#fff8f0" stroke-width="1.6"/><rect x="1445.9" y="411.7" width="12" height="12" fill="none" stroke="#fff8f0" stroke-width="1.6"/><rect x="1458.9" y="421.7" width="12" height="12" fill="none" stroke="#fff8f0" stroke-width="1.6"/><rect x="1507.0" y="411.7" width="12" height="12" fill="none" stroke="#fff8f0" stroke-width="1.6"/><rect x="1447.9" y="439.1" width="12" height="12" fill="none" stroke="#fff8f0" stroke-width="1.6"/><rect x="1373.7" y="421.7" width="12" height="12" fill="none" stroke="#fff8f0" stroke-width="1.6"/><rect x="1384.2" y="421.7" width="12" height="12" fill="none" stroke="#fff8f0" stroke-width="1.6"/><rect x="1389.9" y="426.7" width="12" height="12" fill="none" stroke="#fff8f0" stroke-width="1.6"/><rect x="1396.1" y="435.6" width="12" height="12" fill="none" stroke="#fff8f0" stroke-width="1.6"/><rect x="1361.7" y="431.6" width="12" height="12" fill="none" stroke="#fff8f0" stroke-width="1.6"/><rect x="1355.0" y="422.4" width="12" height="12" fill="none" stroke="#fff8f0" stroke-width="1.6"/><circle cx="1418.3" cy="384.3" r="4.6" fill="#8a5a34" stroke="#1a1a1a" stroke-width="1.1"/><circle cx="1450.2" cy="382.3" r="4.6" fill="#7a4a28" stroke="#1a1a1a" stroke-width="1.1"/><circle cx="1440.2" cy="407.2" r="4.6" fill="#6a3e22" stroke="#1a1a1a" stroke-width="1.1"/><circle cx="1372.2" cy="415.2" r="4.6" fill="#d89070" stroke="#1a1a1a" stroke-width="1.1"/><circle cx="1381.4" cy="421.2" r="4.6" fill="#b07050" stroke="#1a1a1a" stroke-width="1.1"/><circle cx="1542.1" cy="363.7" r="4.6" fill="#9a6038" stroke="#1a1a1a" stroke-width="1.1"/></g>
<rect x="1312" y="489" width="236.5" height="25" fill="#2c2c2c"/>
<text x="1311.51" y="508.90" font-size="18.60" fill="#f0f0f0" textLength="210.04" lengthAdjust="spacingAndGlyphs">RGB Triplet: 217, 140, 94</text>
<text x="43.90" y="582.50" font-size="24.50" fill="#f0f0f0" textLength="219.62" lengthAdjust="spacingAndGlyphs">Avg dE2000: 5,19</text>
<text x="30.54" y="620.90" font-size="24.50" fill="#f0f0f0" textLength="245.52" lengthAdjust="spacingAndGlyphs">Max dE2000: 19,99</text>
<text x="9.19" y="665.40" font-size="25.50" fill="#f0f0f0" textLength="207.63" lengthAdjust="spacingAndGlyphs">Current Reading</text>
<text x="10.37" y="698.70" font-size="21.80" fill="#f0f0f0" textLength="83.36" lengthAdjust="spacingAndGlyphs">x: 0,419</text>
<text x="156.88" y="698.70" font-size="21.80" fill="#f0f0f0" textLength="96.81" lengthAdjust="spacingAndGlyphs">y: 0,3854</text>
<text x="10.25" y="737.00" font-size="22.80" fill="#f0f0f0" textLength="90.85" lengthAdjust="spacingAndGlyphs">fL: 27,41</text>
<text x="9.61" y="768.60" font-size="22.80" fill="#f0f0f0" textLength="136.97" lengthAdjust="spacingAndGlyphs">cd/m²: 93,91</text>
<rect x="297" y="565" width="1262" height="214" fill="#080808"/>
<rect x="299" y="566.5" width="1261" height="23.5" fill="url(#hdr)"/>
<rect x="299" y="590.0" width="1261" height="22.1" fill="#3d3d3d"/>
<rect x="299" y="612.0" width="1261" height="22.1" fill="#7e7e7e"/>
<rect x="299" y="634.0" width="1261" height="22.1" fill="#3d3d3d"/>
<rect x="299" y="656.0" width="1261" height="22.1" fill="#7e7e7e"/>
<rect x="299" y="677.6" width="1261" height="22.1" fill="#3d3d3d"/>
<rect x="299" y="699.4" width="1261" height="22.1" fill="#7e7e7e"/>
<rect x="299" y="721.2" width="1261" height="22.1" fill="#3d3d3d"/>
<rect x="299" y="743.0" width="1261" height="22.1" fill="#7e7e7e"/>
<text x="312.12" y="605.90" font-size="13.00" fill="#f2f2f2" font-weight="bold" textLength="69.82" lengthAdjust="spacingAndGlyphs">x: CIE31</text>
<text x="312.12" y="627.90" font-size="13.00" fill="#f2f2f2" font-weight="bold" textLength="69.82" lengthAdjust="spacingAndGlyphs">y: CIE31</text>
<text x="311.95" y="649.90" font-size="13.00" fill="#f2f2f2" font-weight="bold" textLength="11.80" lengthAdjust="spacingAndGlyphs">Y</text>
<text x="312.12" y="671.90" font-size="13.00" fill="#f2f2f2" font-weight="bold" textLength="122.58" lengthAdjust="spacingAndGlyphs">Target x:CIE31</text>
<text x="312.12" y="693.50" font-size="13.00" fill="#f2f2f2" font-weight="bold" textLength="122.58" lengthAdjust="spacingAndGlyphs">Target y:CIE31</text>
<text x="312.12" y="715.30" font-size="13.00" fill="#f2f2f2" font-weight="bold" textLength="69.16" lengthAdjust="spacingAndGlyphs">Target Y</text>
<text x="311.89" y="737.10" font-size="13.00" fill="#f2f2f2" font-weight="bold" textLength="68.79" lengthAdjust="spacingAndGlyphs">ΔE 2000</text>
<text x="311.89" y="758.90" font-size="13.00" fill="#f2f2f2" font-weight="bold" textLength="56.96" lengthAdjust="spacingAndGlyphs">ΔE ITP</text>
<svg x="298" y="560" width="1261" height="220" overflow="hidden"><g transform="translate(-298 -560)"><text x="468.61" y="582.60" font-size="13.20" fill="#f4f4f4" textLength="44.69" lengthAdjust="spacingAndGlyphs" stroke="#f4f4f4" stroke-width="0.35">White</text><text x="453.50" y="605.90" font-size="13.20" fill="#f2f2f2" textLength="53.24" lengthAdjust="spacingAndGlyphs">0,3077</text><text x="453.51" y="627.90" font-size="13.20" fill="#f2f2f2" textLength="53.06" lengthAdjust="spacingAndGlyphs">0,3208</text><text x="453.33" y="649.90" font-size="13.20" fill="#f2f2f2" textLength="72.48" lengthAdjust="spacingAndGlyphs">276,2203</text><text x="453.50" y="671.90" font-size="13.20" fill="#f2f2f2" textLength="53.24" lengthAdjust="spacingAndGlyphs">0,3127</text><text x="453.51" y="693.50" font-size="13.20" fill="#f2f2f2" textLength="52.98" lengthAdjust="spacingAndGlyphs">0,3290</text><text x="453.33" y="715.30" font-size="13.20" fill="#f2f2f2" textLength="72.48" lengthAdjust="spacingAndGlyphs">276,2203</text><text x="453.85" y="737.10" font-size="13.20" fill="#f2f2f2" textLength="52.80" lengthAdjust="spacingAndGlyphs">4,2641</text><text x="453.51" y="758.90" font-size="13.20" fill="#f2f2f2" textLength="53.06" lengthAdjust="spacingAndGlyphs">3,6026</text><text x="543.88" y="582.60" font-size="13.20" fill="#f4f4f4" textLength="58.02" lengthAdjust="spacingAndGlyphs" stroke="#f4f4f4" stroke-width="0.35">Gray 80</text><text x="535.99" y="605.90" font-size="13.20" fill="#f2f2f2" textLength="53.11" lengthAdjust="spacingAndGlyphs">0,3115</text><text x="536.00" y="627.90" font-size="13.20" fill="#f2f2f2" textLength="53.24" lengthAdjust="spacingAndGlyphs">0,3262</text><text x="535.83" y="649.90" font-size="13.20" fill="#f2f2f2" textLength="72.48" lengthAdjust="spacingAndGlyphs">222,3965</text><text x="536.00" y="671.90" font-size="13.20" fill="#f2f2f2" textLength="53.24" lengthAdjust="spacingAndGlyphs">0,3127</text><text x="536.01" y="693.50" font-size="13.20" fill="#f2f2f2" textLength="52.98" lengthAdjust="spacingAndGlyphs">0,3290</text><text x="535.83" y="715.30" font-size="13.20" fill="#f2f2f2" textLength="72.48" lengthAdjust="spacingAndGlyphs">218,5725</text><text x="535.38" y="737.10" font-size="13.20" fill="#f2f2f2" textLength="53.70" lengthAdjust="spacingAndGlyphs">1,6036</text><text x="535.38" y="758.90" font-size="13.20" fill="#f2f2f2" textLength="53.70" lengthAdjust="spacingAndGlyphs">1,7758</text><text x="626.99" y="582.60" font-size="13.20" fill="#f4f4f4" textLength="57.70" lengthAdjust="spacingAndGlyphs" stroke="#f4f4f4" stroke-width="0.35">Gray 65</text><text x="618.91" y="605.90" font-size="13.20" fill="#f2f2f2" textLength="53.06" lengthAdjust="spacingAndGlyphs">0,3126</text><text x="618.90" y="627.90" font-size="13.20" fill="#f2f2f2" textLength="53.15" lengthAdjust="spacingAndGlyphs">0,3279</text><text x="618.29" y="649.90" font-size="13.20" fill="#f2f2f2" textLength="72.93" lengthAdjust="spacingAndGlyphs">181,4433</text><text x="618.90" y="671.90" font-size="13.20" fill="#f2f2f2" textLength="53.24" lengthAdjust="spacingAndGlyphs">0,3127</text><text x="618.91" y="693.50" font-size="13.20" fill="#f2f2f2" textLength="52.98" lengthAdjust="spacingAndGlyphs">0,3290</text><text x="618.26" y="715.30" font-size="13.20" fill="#f2f2f2" textLength="73.16" lengthAdjust="spacingAndGlyphs">176,1172</text><text x="618.28" y="737.10" font-size="13.20" fill="#f2f2f2" textLength="53.70" lengthAdjust="spacingAndGlyphs">1,0295</text><text x="618.73" y="758.90" font-size="13.20" fill="#f2f2f2" textLength="53.06" lengthAdjust="spacingAndGlyphs">2,3144</text><text x="708.88" y="582.60" font-size="13.20" fill="#f4f4f4" textLength="58.43" lengthAdjust="spacingAndGlyphs" stroke="#f4f4f4" stroke-width="0.35">Gray 50</text><text x="701.61" y="605.90" font-size="13.20" fill="#f2f2f2" textLength="53.06" lengthAdjust="spacingAndGlyphs">0,3133</text><text x="701.61" y="627.90" font-size="13.20" fill="#f2f2f2" textLength="53.06" lengthAdjust="spacingAndGlyphs">0,3288</text><text x="700.99" y="649.90" font-size="13.20" fill="#f2f2f2" textLength="72.75" lengthAdjust="spacingAndGlyphs">140,5044</text><text x="701.60" y="671.90" font-size="13.20" fill="#f2f2f2" textLength="53.24" lengthAdjust="spacingAndGlyphs">0,3127</text><text x="701.61" y="693.50" font-size="13.20" fill="#f2f2f2" textLength="52.98" lengthAdjust="spacingAndGlyphs">0,3290</text><text x="700.99" y="715.30" font-size="13.20" fill="#f2f2f2" textLength="73.02" lengthAdjust="spacingAndGlyphs">135,6299</text><text x="701.61" y="737.10" font-size="13.20" fill="#f2f2f2" textLength="53.06" lengthAdjust="spacingAndGlyphs">0,9286</text><text x="701.43" y="758.90" font-size="13.20" fill="#f2f2f2" textLength="53.42" lengthAdjust="spacingAndGlyphs">2,6572</text><text x="787.14" y="582.60" font-size="13.20" fill="#f4f4f4" textLength="57.59" lengthAdjust="spacingAndGlyphs" stroke="#f4f4f4" stroke-width="0.35">Gray 35</text><text x="783.90" y="605.90" font-size="13.20" fill="#f2f2f2" textLength="53.24" lengthAdjust="spacingAndGlyphs">0,3137</text><text x="783.91" y="627.90" font-size="13.20" fill="#f2f2f2" textLength="53.06" lengthAdjust="spacingAndGlyphs">0,3293</text><text x="783.82" y="649.90" font-size="13.20" fill="#f2f2f2" textLength="62.95" lengthAdjust="spacingAndGlyphs">97,0847</text><text x="783.90" y="671.90" font-size="13.20" fill="#f2f2f2" textLength="53.24" lengthAdjust="spacingAndGlyphs">0,3127</text><text x="783.91" y="693.50" font-size="13.20" fill="#f2f2f2" textLength="52.98" lengthAdjust="spacingAndGlyphs">0,3290</text><text x="783.82" y="715.30" font-size="13.20" fill="#f2f2f2" textLength="62.95" lengthAdjust="spacingAndGlyphs">94,4437</text><text x="783.91" y="737.10" font-size="13.20" fill="#f2f2f2" textLength="52.89" lengthAdjust="spacingAndGlyphs">0,7494</text><text x="783.73" y="758.90" font-size="13.20" fill="#f2f2f2" textLength="53.24" lengthAdjust="spacingAndGlyphs">2,0745</text><text x="868.04" y="582.60" font-size="13.20" fill="#f4f4f4" textLength="40.02" lengthAdjust="spacingAndGlyphs" stroke="#f4f4f4" stroke-width="0.35">Black</text><text x="856.40" y="605.90" font-size="13.20" fill="#f2f2f2" textLength="53.15" lengthAdjust="spacingAndGlyphs">0,2641</text><text x="856.41" y="627.90" font-size="13.20" fill="#f2f2f2" textLength="53.06" lengthAdjust="spacingAndGlyphs">0,2438</text><text x="856.40" y="649.90" font-size="13.20" fill="#f2f2f2" textLength="53.24" lengthAdjust="spacingAndGlyphs">0,3177</text><text x="856.40" y="671.90" font-size="13.20" fill="#f2f2f2" textLength="53.24" lengthAdjust="spacingAndGlyphs">0,3127</text><text x="856.41" y="693.50" font-size="13.20" fill="#f2f2f2" textLength="52.98" lengthAdjust="spacingAndGlyphs">0,3290</text><text x="856.41" y="715.30" font-size="13.20" fill="#f2f2f2" textLength="52.98" lengthAdjust="spacingAndGlyphs">0,0000</text><text x="855.78" y="737.10" font-size="13.20" fill="#f2f2f2" textLength="53.70" lengthAdjust="spacingAndGlyphs">1,8235</text><text x="856.23" y="758.90" font-size="13.20" fill="#f2f2f2" textLength="62.86" lengthAdjust="spacingAndGlyphs">73,5713</text><text x="928.94" y="582.60" font-size="13.20" fill="#f4f4f4" textLength="70.86" lengthAdjust="spacingAndGlyphs" stroke="#f4f4f4" stroke-width="0.35">Dark Skin</text><text x="928.30" y="605.90" font-size="13.20" fill="#f2f2f2" textLength="53.15" lengthAdjust="spacingAndGlyphs">0,3839</text><text x="928.30" y="627.90" font-size="13.20" fill="#f2f2f2" textLength="53.24" lengthAdjust="spacingAndGlyphs">0,3662</text><text x="928.13" y="649.90" font-size="13.20" fill="#f2f2f2" textLength="62.86" lengthAdjust="spacingAndGlyphs">27,6866</text><text x="928.31" y="671.90" font-size="13.20" fill="#f2f2f2" textLength="53.06" lengthAdjust="spacingAndGlyphs">0,4003</text><text x="928.30" y="693.50" font-size="13.20" fill="#f2f2f2" textLength="53.24" lengthAdjust="spacingAndGlyphs">0,3642</text><text x="928.13" y="715.30" font-size="13.20" fill="#f2f2f2" textLength="62.86" lengthAdjust="spacingAndGlyphs">27,8245</text><text x="928.30" y="737.10" font-size="13.20" fill="#f2f2f2" textLength="53.24" lengthAdjust="spacingAndGlyphs">3,4352</text><text x="928.22" y="758.90" font-size="13.20" fill="#f2f2f2" textLength="53.15" lengthAdjust="spacingAndGlyphs">9,2013</text><text x="1007.64" y="582.60" font-size="13.20" fill="#f4f4f4" textLength="72.11" lengthAdjust="spacingAndGlyphs" stroke="#f4f4f4" stroke-width="0.35">Light Skin</text><text x="1008.20" y="605.90" font-size="13.20" fill="#f2f2f2" textLength="53.24" lengthAdjust="spacingAndGlyphs">0,3637</text><text x="1008.21" y="627.90" font-size="13.20" fill="#f2f2f2" textLength="52.98" lengthAdjust="spacingAndGlyphs">0,3550</text><text x="1008.12" y="649.90" font-size="13.20" fill="#f2f2f2" textLength="62.77" lengthAdjust="spacingAndGlyphs">97,7756</text><text x="1008.21" y="671.90" font-size="13.20" fill="#f2f2f2" textLength="53.06" lengthAdjust="spacingAndGlyphs">0,3795</text><text x="1008.20" y="693.50" font-size="13.20" fill="#f2f2f2" textLength="53.24" lengthAdjust="spacingAndGlyphs">0,3562</text><text x="1008.12" y="715.30" font-size="13.20" fill="#f2f2f2" textLength="62.77" lengthAdjust="spacingAndGlyphs">96,3875</text><text x="1008.21" y="737.10" font-size="13.20" fill="#f2f2f2" textLength="53.06" lengthAdjust="spacingAndGlyphs">3,8366</text><text x="1008.12" y="758.90" font-size="13.20" fill="#f2f2f2" textLength="53.33" lengthAdjust="spacingAndGlyphs">9,3337</text><text x="1088.72" y="582.60" font-size="13.20" fill="#f4f4f4" textLength="62.90" lengthAdjust="spacingAndGlyphs" stroke="#f4f4f4" stroke-width="0.35">Blue Sky</text><text x="1088.20" y="605.90" font-size="13.20" fill="#f2f2f2" textLength="53.15" lengthAdjust="spacingAndGlyphs">0,2621</text><text x="1088.21" y="627.90" font-size="13.20" fill="#f2f2f2" textLength="52.89" lengthAdjust="spacingAndGlyphs">0,2804</text><text x="1088.21" y="649.90" font-size="13.20" fill="#f2f2f2" textLength="62.60" lengthAdjust="spacingAndGlyphs">57,4430</text><text x="1088.21" y="671.90" font-size="13.20" fill="#f2f2f2" textLength="53.06" lengthAdjust="spacingAndGlyphs">0,2496</text><text x="1088.21" y="693.50" font-size="13.20" fill="#f2f2f2" textLength="53.06" lengthAdjust="spacingAndGlyphs">0,2656</text><text x="1088.20" y="715.30" font-size="13.20" fill="#f2f2f2" textLength="62.86" lengthAdjust="spacingAndGlyphs">51,6487</text><text x="1088.21" y="737.10" font-size="13.20" fill="#f2f2f2" textLength="53.06" lengthAdjust="spacingAndGlyphs">3,2468</text><text x="1087.59" y="758.90" font-size="13.20" fill="#f2f2f2" textLength="63.31" lengthAdjust="spacingAndGlyphs">10,4065</text><text x="1165.68" y="582.60" font-size="13.20" fill="#f4f4f4" textLength="54.06" lengthAdjust="spacingAndGlyphs" stroke="#f4f4f4" stroke-width="0.35">Foliage</text><text x="1161.11" y="605.90" font-size="13.20" fill="#f2f2f2" textLength="53.06" lengthAdjust="spacingAndGlyphs">0,3523</text><text x="1161.10" y="627.90" font-size="13.20" fill="#f2f2f2" textLength="53.15" lengthAdjust="spacingAndGlyphs">0,4099</text><text x="1161.11" y="649.90" font-size="13.20" fill="#f2f2f2" textLength="62.77" lengthAdjust="spacingAndGlyphs">33,7921</text><text x="1161.11" y="671.90" font-size="13.20" fill="#f2f2f2" textLength="53.06" lengthAdjust="spacingAndGlyphs">0,3395</text><text x="1161.10" y="693.50" font-size="13.20" fill="#f2f2f2" textLength="53.15" lengthAdjust="spacingAndGlyphs">0,4271</text><text x="1161.11" y="715.30" font-size="13.20" fill="#f2f2f2" textLength="62.68" lengthAdjust="spacingAndGlyphs">35,9983</text><text x="1161.45" y="737.10" font-size="13.20" fill="#f2f2f2" textLength="52.89" lengthAdjust="spacingAndGlyphs">4,8292</text><text x="1160.49" y="758.90" font-size="13.20" fill="#f2f2f2" textLength="63.22" lengthAdjust="spacingAndGlyphs">10,9800</text><text x="1233.46" y="582.60" font-size="13.20" fill="#f4f4f4" textLength="88.48" lengthAdjust="spacingAndGlyphs" stroke="#f4f4f4" stroke-width="0.35">Blue Flower</text><text x="1234.11" y="605.90" font-size="13.20" fill="#f2f2f2" textLength="53.06" lengthAdjust="spacingAndGlyphs">0,2728</text><text x="1234.11" y="627.90" font-size="13.20" fill="#f2f2f2" textLength="53.06" lengthAdjust="spacingAndGlyphs">0,2725</text><text x="1233.93" y="649.90" font-size="13.20" fill="#f2f2f2" textLength="62.86" lengthAdjust="spacingAndGlyphs">74,0748</text><text x="1234.10" y="671.90" font-size="13.20" fill="#f2f2f2" textLength="53.15" lengthAdjust="spacingAndGlyphs">0,2681</text><text x="1234.11" y="693.50" font-size="13.20" fill="#f2f2f2" textLength="53.06" lengthAdjust="spacingAndGlyphs">0,2525</text><text x="1233.93" y="715.30" font-size="13.20" fill="#f2f2f2" textLength="62.68" lengthAdjust="spacingAndGlyphs">64,4104</text><text x="1234.11" y="737.10" font-size="13.20" fill="#f2f2f2" textLength="52.89" lengthAdjust="spacingAndGlyphs">5,1284</text><text x="1233.46" y="758.90" font-size="13.20" fill="#f2f2f2" textLength="63.37" lengthAdjust="spacingAndGlyphs">11,9578</text><text x="1330.57" y="582.60" font-size="13.20" fill="#f4f4f4" textLength="95.82" lengthAdjust="spacingAndGlyphs" stroke="#f4f4f4" stroke-width="0.35">Bluish Green</text><text x="1331.21" y="605.90" font-size="13.20" fill="#f2f2f2" textLength="53.06" lengthAdjust="spacingAndGlyphs">0,2843</text><text x="1331.21" y="627.90" font-size="13.20" fill="#f2f2f2" textLength="52.89" lengthAdjust="spacingAndGlyphs">0,3494</text><text x="1330.56" y="649.90" font-size="13.20" fill="#f2f2f2" textLength="72.98" lengthAdjust="spacingAndGlyphs">113,3253</text><text x="1331.21" y="671.90" font-size="13.20" fill="#f2f2f2" textLength="53.06" lengthAdjust="spacingAndGlyphs">0,2626</text><text x="1331.21" y="693.50" font-size="13.20" fill="#f2f2f2" textLength="53.06" lengthAdjust="spacingAndGlyphs">0,3616</text><text x="1330.56" y="715.30" font-size="13.20" fill="#f2f2f2" textLength="72.98" lengthAdjust="spacingAndGlyphs">115,6618</text><text x="1331.03" y="737.10" font-size="13.20" fill="#f2f2f2" textLength="53.24" lengthAdjust="spacingAndGlyphs">6,5865</text><text x="1330.58" y="758.90" font-size="13.20" fill="#f2f2f2" textLength="63.49" lengthAdjust="spacingAndGlyphs">15,9602</text><text x="1438.90" y="582.60" font-size="13.20" fill="#f4f4f4" textLength="55.61" lengthAdjust="spacingAndGlyphs" stroke="#f4f4f4" stroke-width="0.35">Orange</text><text x="1434.91" y="605.90" font-size="13.20" fill="#f2f2f2" textLength="53.06" lengthAdjust="spacingAndGlyphs">0,4836</text><text x="1434.91" y="627.90" font-size="13.20" fill="#f2f2f2" textLength="52.98" lengthAdjust="spacingAndGlyphs">0,4190</text><text x="1434.73" y="649.90" font-size="13.20" fill="#f2f2f2" textLength="62.86" lengthAdjust="spacingAndGlyphs">74,5236</text><text x="1434.90" y="671.90" font-size="13.20" fill="#f2f2f2" textLength="53.24" lengthAdjust="spacingAndGlyphs">0,5122</text><text x="1434.91" y="693.50" font-size="13.20" fill="#f2f2f2" textLength="53.06" lengthAdjust="spacingAndGlyphs">0,4063</text><text x="1434.73" y="715.30" font-size="13.20" fill="#f2f2f2" textLength="62.68" lengthAdjust="spacingAndGlyphs">78,3024</text><text x="1434.91" y="737.10" font-size="13.20" fill="#f2f2f2" textLength="53.06" lengthAdjust="spacingAndGlyphs">5,5835</text><text x="1434.73" y="758.90" font-size="13.20" fill="#f2f2f2" textLength="62.68" lengthAdjust="spacingAndGlyphs">20,1654</text><text x="1506.77" y="582.60" font-size="13.20" fill="#f4f4f4" textLength="97.67" lengthAdjust="spacingAndGlyphs" stroke="#f4f4f4" stroke-width="0.35">Purplish Blue</text><text x="1507.41" y="605.90" font-size="13.20" fill="#f2f2f2" textLength="52.98" lengthAdjust="spacingAndGlyphs">0,2290</text><text x="1507.41" y="627.90" font-size="13.20" fill="#f2f2f2" textLength="52.89" lengthAdjust="spacingAndGlyphs">0,2264</text><text x="1507.76" y="649.90" font-size="13.20" fill="#f2f2f2" textLength="62.24" lengthAdjust="spacingAndGlyphs">40,7370</text><text x="1507.41" y="671.90" font-size="13.20" fill="#f2f2f2" textLength="53.06" lengthAdjust="spacingAndGlyphs">0,2166</text><text x="1507.41" y="693.50" font-size="13.20" fill="#f2f2f2" textLength="52.98" lengthAdjust="spacingAndGlyphs">0,1920</text><text x="1507.41" y="715.30" font-size="13.20" fill="#f2f2f2" textLength="62.60" lengthAdjust="spacingAndGlyphs">32,4660</text><text x="1507.40" y="737.10" font-size="13.20" fill="#f2f2f2" textLength="53.15" lengthAdjust="spacingAndGlyphs">5,3329</text><text x="1506.79" y="758.90" font-size="13.20" fill="#f2f2f2" textLength="63.22" lengthAdjust="spacingAndGlyphs">18,5210</text></g></svg>
<rect x="299" y="765" width="1260" height="13" fill="#5a5a5a"/>
<rect x="300" y="766" width="15" height="11" fill="#6c6c6c"/><path d="M303.5 771.5 L309.5 767.5 L309.5 775.5 Z" fill="#2a2a2a"/>
<rect x="1545" y="766" width="14" height="11" fill="#6c6c6c"/><path d="M1554 771.5 L1548 767.5 L1548 775.5 Z" fill="#2a2a2a"/>
<rect x="319" y="766.5" width="378" height="10" rx="5" fill="#464646"/>
<svg x="0" y="795" width="1239" height="60" overflow="hidden"><g transform="translate(0 -795)"><rect x="0" y="806" width="1239" height="46" fill="#2a2a2a"/><rect x="-8.2" y="802" width="50.2" height="48.6" rx="4" fill="url(#tile)"/><rect x="-2.9" y="807" width="39.6" height="24.0" rx="4" fill="#0a8cac" stroke="#087792" stroke-width="0.8"/><text x="4.42" y="846.00" font-size="11.30" fill="#2c2c2c" textLength="25.06" lengthAdjust="spacingAndGlyphs" stroke="#2c2c2c" stroke-width="0.4">Cyan</text><rect x="43.8" y="802" width="50.2" height="48.6" rx="4" fill="url(#tile)"/><rect x="49.1" y="807" width="39.6" height="24.0" rx="4" fill="#ff0000" stroke="#d90000" stroke-width="0.8"/><text x="44.88" y="846.00" font-size="11.30" fill="#2c2c2c" textLength="47.94" lengthAdjust="spacingAndGlyphs" stroke="#2c2c2c" stroke-width="0.4">100% Red</text><rect x="95.8" y="802" width="50.2" height="48.6" rx="4" fill="url(#tile)"/><rect x="101.1" y="807" width="39.6" height="12.5" rx="4" fill="#00ff00" stroke="#00d900" stroke-width="0.8"/><text x="106.07" y="834.00" font-size="11.30" fill="#2c2c2c" textLength="26.88" lengthAdjust="spacingAndGlyphs" stroke="#2c2c2c" stroke-width="0.4">100%</text><text x="105.20" y="846.00" font-size="11.30" fill="#2c2c2c" textLength="29.21" lengthAdjust="spacingAndGlyphs" stroke="#2c2c2c" stroke-width="0.4">Green</text><rect x="147.9" y="802" width="50.2" height="48.6" rx="4" fill="url(#tile)"/><rect x="153.2" y="807" width="39.6" height="12.5" rx="4" fill="#0000ff" stroke="#0000d9" stroke-width="0.8"/><text x="158.10" y="834.00" font-size="11.30" fill="#2c2c2c" textLength="26.88" lengthAdjust="spacingAndGlyphs" stroke="#2c2c2c" stroke-width="0.4">100%</text><text x="161.07" y="846.00" font-size="11.30" fill="#2c2c2c" textLength="21.03" lengthAdjust="spacingAndGlyphs" stroke="#2c2c2c" stroke-width="0.4">Blue</text><rect x="199.9" y="802" width="50.2" height="48.6" rx="4" fill="url(#tile)"/><rect x="205.2" y="807" width="39.6" height="12.5" rx="4" fill="#00ffff" stroke="#00d9d9" stroke-width="0.8"/><text x="210.13" y="834.00" font-size="11.30" fill="#2c2c2c" textLength="26.88" lengthAdjust="spacingAndGlyphs" stroke="#2c2c2c" stroke-width="0.4">100%</text><text x="211.60" y="846.00" font-size="11.30" fill="#2c2c2c" textLength="24.53" lengthAdjust="spacingAndGlyphs" stroke="#2c2c2c" stroke-width="0.4">Cyan</text><rect x="251.9" y="802" width="50.2" height="48.6" rx="4" fill="url(#tile)"/><rect x="257.2" y="807" width="39.6" height="12.5" rx="4" fill="#ff00ff" stroke="#d900d9" stroke-width="0.8"/><text x="262.16" y="834.00" font-size="11.30" fill="#2c2c2c" textLength="26.88" lengthAdjust="spacingAndGlyphs" stroke="#2c2c2c" stroke-width="0.4">100%</text><text x="254.96" y="846.00" font-size="11.30" fill="#2c2c2c" textLength="40.90" lengthAdjust="spacingAndGlyphs" stroke="#2c2c2c" stroke-width="0.4">Magenta</text><rect x="303.9" y="802" width="50.2" height="48.6" rx="4" fill="url(#tile)"/><rect x="309.2" y="807" width="39.6" height="12.5" rx="4" fill="#ffff00" stroke="#d9d900" stroke-width="0.8"/><text x="314.19" y="834.00" font-size="11.30" fill="#2c2c2c" textLength="26.88" lengthAdjust="spacingAndGlyphs" stroke="#2c2c2c" stroke-width="0.4">100%</text><text x="312.72" y="846.00" font-size="11.30" fill="#2c2c2c" textLength="29.99" lengthAdjust="spacingAndGlyphs" stroke="#2c2c2c" stroke-width="0.4">Yellow</text><rect x="356.0" y="802" width="50.2" height="48.6" rx="4" fill="url(#tile)"/><rect x="361.3" y="807" width="39.6" height="24.0" rx="4" fill="#7a4428" stroke="#683a22" stroke-width="0.8"/><text x="375.03" y="846.00" font-size="11.30" fill="#2c2c2c" textLength="12.03" lengthAdjust="spacingAndGlyphs" stroke="#2c2c2c" stroke-width="0.4">2E</text><rect x="408.0" y="802" width="50.2" height="48.6" rx="4" fill="url(#tile)"/><rect x="413.3" y="807" width="39.6" height="24.0" rx="4" fill="#d28a68" stroke="#b27558" stroke-width="0.8"/><text x="427.33" y="846.00" font-size="11.30" fill="#2c2c2c" textLength="11.47" lengthAdjust="spacingAndGlyphs" stroke="#2c2c2c" stroke-width="0.4">2F</text><rect x="460.0" y="802" width="50.2" height="48.6" rx="4" fill="url(#tile)"/><rect x="465.3" y="807" width="39.6" height="24.0" rx="4" fill="#ffc49a" stroke="#d9a783" stroke-width="0.8"/><text x="478.95" y="846.00" font-size="11.30" fill="#2c2c2c" textLength="12.03" lengthAdjust="spacingAndGlyphs" stroke="#2c2c2c" stroke-width="0.4">2K</text><rect x="512.1" y="802" width="50.2" height="48.6" rx="4" fill="url(#tile)"/><rect x="517.4" y="807" width="39.6" height="24.0" rx="4" fill="#ffc6a4" stroke="#d9a88b" stroke-width="0.8"/><text x="530.93" y="846.00" font-size="11.30" fill="#2c2c2c" textLength="12.57" lengthAdjust="spacingAndGlyphs" stroke="#2c2c2c" stroke-width="0.4">5D</text><rect x="564.1" y="802" width="50.2" height="48.6" rx="4" fill="url(#tile)"/><rect x="569.4" y="807" width="39.6" height="24.0" rx="4" fill="#f5a274" stroke="#d08a63" stroke-width="0.8"/><text x="583.15" y="846.00" font-size="11.30" fill="#2c2c2c" textLength="12.03" lengthAdjust="spacingAndGlyphs" stroke="#2c2c2c" stroke-width="0.4">7E</text><rect x="616.1" y="802" width="50.2" height="48.6" rx="4" fill="url(#tile)"/><rect x="621.4" y="807" width="39.6" height="24.0" rx="4" fill="#d0905c" stroke="#b17a4e" stroke-width="0.8"/><text x="635.45" y="846.00" font-size="11.30" fill="#2c2c2c" textLength="11.47" lengthAdjust="spacingAndGlyphs" stroke="#2c2c2c" stroke-width="0.4">7F</text><rect x="668.2" y="802" width="50.2" height="48.6" rx="4" fill="url(#tile)"/><rect x="673.5" y="807" width="39.6" height="24.0" rx="4" fill="#8c5530" stroke="#774829" stroke-width="0.8"/><text x="686.82" y="846.00" font-size="11.30" fill="#2c2c2c" textLength="13.11" lengthAdjust="spacingAndGlyphs" stroke="#2c2c2c" stroke-width="0.4">7G</text><rect x="720.2" y="802" width="50.2" height="48.6" rx="4" fill="url(#tile)"/><rect x="725.5" y="807" width="39.6" height="24.0" rx="4" fill="#d89b78" stroke="#b88466" stroke-width="0.8"/><text x="739.17" y="846.00" font-size="11.30" fill="#2c2c2c" textLength="12.57" lengthAdjust="spacingAndGlyphs" stroke="#2c2c2c" stroke-width="0.4">7H</text><rect x="772.2" y="802" width="50.2" height="48.6" rx="4" fill="url(#tile)"/><rect x="777.5" y="807" width="39.6" height="24.0" rx="4" fill="#9c5222" stroke="#85461d" stroke-width="0.8"/><text x="793.44" y="846.00" font-size="11.30" fill="#2c2c2c" textLength="8.20" lengthAdjust="spacingAndGlyphs" stroke="#2c2c2c" stroke-width="0.4">7I</text><rect x="824.2" y="802" width="50.2" height="48.6" rx="4" fill="url(#tile)"/><rect x="829.5" y="807" width="39.6" height="24.0" rx="4" fill="#dc8858" stroke="#bb744b" stroke-width="0.8"/><text x="844.29" y="846.00" font-size="11.30" fill="#2c2c2c" textLength="10.38" lengthAdjust="spacingAndGlyphs" stroke="#2c2c2c" stroke-width="0.4">7J</text><rect x="876.3" y="802" width="50.2" height="48.6" rx="4" fill="url(#tile)"/><rect x="881.6" y="807" width="39.6" height="24.0" rx="4" fill="#d48c6c" stroke="#b4775c" stroke-width="0.8"/><text x="895.11" y="846.00" font-size="11.30" fill="#2c2c2c" textLength="12.57" lengthAdjust="spacingAndGlyphs" stroke="#2c2c2c" stroke-width="0.4">8D</text><rect x="928.3" y="802" width="50.2" height="48.6" rx="4" fill="url(#tile)"/><rect x="933.6" y="807" width="39.6" height="24.0" rx="4" fill="#ff9470" stroke="#d97e5f" stroke-width="0.8"/><text x="947.39" y="846.00" font-size="11.30" fill="#2c2c2c" textLength="12.03" lengthAdjust="spacingAndGlyphs" stroke="#2c2c2c" stroke-width="0.4">8E</text><rect x="980.3" y="802" width="50.2" height="48.6" rx="4" fill="url(#tile)"/><rect x="985.6" y="807" width="39.6" height="24.0" rx="4" fill="#cf9470" stroke="#b07e5f" stroke-width="0.8"/><text x="999.69" y="846.00" font-size="11.30" fill="#2c2c2c" textLength="11.47" lengthAdjust="spacingAndGlyphs" stroke="#2c2c2c" stroke-width="0.4">8F</text><rect x="1032.4" y="802" width="50.2" height="48.6" rx="4" fill="url(#tile)"/><rect x="1037.7" y="807" width="39.6" height="24.0" rx="4" fill="#d08c68" stroke="#b17758" stroke-width="0.8"/><text x="1051.06" y="846.00" font-size="11.30" fill="#2c2c2c" textLength="13.11" lengthAdjust="spacingAndGlyphs" stroke="#2c2c2c" stroke-width="0.4">8G</text><rect x="1084.4" y="802" width="50.2" height="48.6" rx="4" fill="url(#tile)"/><rect x="1089.7" y="807" width="39.6" height="24.0" rx="4" fill="#d4986e" stroke="#b4815e" stroke-width="0.8"/><text x="1103.40" y="846.00" font-size="11.30" fill="#2c2c2c" textLength="12.57" lengthAdjust="spacingAndGlyphs" stroke="#2c2c2c" stroke-width="0.4">8H</text><rect x="1136.4" y="802" width="50.2" height="48.6" rx="4" fill="url(#tile)"/><rect x="1141.7" y="807" width="39.6" height="24.0" rx="4" fill="#7a4a26" stroke="#683f20" stroke-width="0.8"/><text x="1157.67" y="846.00" font-size="11.30" fill="#2c2c2c" textLength="8.20" lengthAdjust="spacingAndGlyphs" stroke="#2c2c2c" stroke-width="0.4">8I</text><rect x="1188.5" y="802" width="50.2" height="48.6" rx="4" fill="url(#tsel)"/><rect x="1193.8" y="807" width="39.6" height="24.0" rx="4" fill="#d98c5e" stroke="#b87750" stroke-width="0.8"/><text x="1207.50" y="846.00" font-size="11.00" fill="#ffffff" font-weight="bold" textLength="11.51" lengthAdjust="spacingAndGlyphs">8J</text></g></svg>
<rect x="0" y="851" width="1239" height="12" fill="#5e5e5e"/>
<rect x="608" y="852.5" width="615" height="9" rx="4.5" fill="#3e3e3e"/>
<rect x="0" y="852" width="8" height="11" fill="#6c6c6c"/><path d="M1.5 857.5 L6.5 854 L6.5 861 Z" fill="#2a2a2a"/>
<rect x="1224" y="852" width="14" height="11" fill="#6c6c6c"/><path d="M1233.5 857.5 L1228.5 854 L1228.5 861 Z" fill="#2a2a2a"/>
<rect x="1238" y="800" width="321" height="63" fill="#2c2c2c"/>
<path d="M1239 820 L1239 806 Q1239 802 1243 802 L1283 802 Q1287 802 1287 806 L1287 820 Z" fill="url(#btn)"/>
<rect x="1239" y="821" width="48" height="42" fill="url(#btn)"/>
<circle cx="1263.6" cy="811" r="7.4" fill="url(#circ)"/><path d="M1259.5 814 L1263.6 809 L1267.7 814 Z" fill="#2a2a2a"/>
<rect x="1249.5" y="828" width="28" height="27.5" rx="4" fill="#c6c6c6" stroke="#262626" stroke-width="3"/>
<rect x="1251" y="842" width="25" height="12" fill="#a6a6a6"/>
<rect x="1256.2" y="835.1" width="13.3" height="13.3" fill="#111"/>
<rect x="1288.0" y="802" width="46.0" height="30" rx="3" fill="url(#btn)"/>
<circle cx="1311.0" cy="817.4" r="10" fill="url(#circ)"/>
<rect x="1335.0" y="802" width="44.5" height="30"  fill="url(#btn)"/>
<circle cx="1357.2" cy="817.4" r="10" fill="url(#circ)"/>
<rect x="1380.5" y="802" width="43.5" height="30"  fill="url(#btn)"/>
<circle cx="1402.2" cy="817.4" r="10" fill="url(#circ)"/>
<rect x="1425.0" y="802" width="44.0" height="30"  fill="url(#btn)"/>
<circle cx="1447.0" cy="817.4" r="10" fill="url(#circ)"/>
<rect x="1470.0" y="802" width="44.5" height="30"  fill="url(#btnd)"/>
<circle cx="1492.2" cy="817.4" r="10" fill="url(#circd)"/>
<rect x="1515.5" y="802" width="42.5" height="30"  fill="url(#btn)"/>
<circle cx="1536.8" cy="817.4" r="10" fill="url(#circ)"/>
<rect x="1307" y="813.2" width="8.2" height="8.2" fill="#2e2e2e"/>
<path d="M1354 812.4 L1362.5 817.4 L1354 822.5 Z" fill="#2a2a2a"/>
<path d="M1398 812.5 L1396.5 812.5 L1396.5 822.5 L1398 822.5 M1405.5 812.5 L1407 812.5 L1407 822.5 L1405.5 822.5" fill="none" stroke="#2a2a2a" stroke-width="1.8"/><rect x="1399.6" y="816.6" width="1.6" height="1.6" fill="#2a2a2a"/><rect x="1402.6" y="816.6" width="1.6" height="1.6" fill="#2a2a2a"/>
<path d="M1447 817.4 C1445 814.4 1441.5 814.4 1441.5 817.4 C1441.5 820.4 1445 820.4 1447 817.4 C1449 814.4 1452.5 814.4 1452.5 817.4 C1452.5 820.4 1449 820.4 1447 817.4 Z" fill="none" stroke="#2a2a2a" stroke-width="1.6"/>
<path d="M1487 818.3 A5 5 0 0 1 1496 814.2" fill="none" stroke="#151515" stroke-width="1.9"/><path d="M1498.2 811.2 L1497.8 816.8 L1493 815.2 Z" fill="#151515"/><path d="M1497 816.5 A5 5 0 0 1 1488 820.6" fill="none" stroke="#151515" stroke-width="1.9"/><path d="M1485.8 823.6 L1486.2 818 L1491 819.6 Z" fill="#151515"/>
<rect x="1288" y="833" width="136" height="30" rx="3" fill="url(#btn)"/>
<rect x="1425" y="833" width="134" height="30" rx="3" fill="url(#btn)"/>
<circle cx="1318.9" cy="848.1" r="10" fill="url(#circ)"/><circle cx="1531.9" cy="848.1" r="10" fill="url(#circ)"/>
<path d="M1318 843.5 L1314 848 L1318 852.5 M1322 843.5 L1318 848 L1322 852.5" fill="none" stroke="#2a2a2a" stroke-width="1.3"/>
<path d="M1529 843.5 L1533 848 L1529 852.5 M1533 843.5 L1537 848 L1533 852.5" fill="none" stroke="#2a2a2a" stroke-width="1.3"/>
<text x="1344.24" y="855.50" font-size="22.50" fill="#2e2e2e" textLength="51.62" lengthAdjust="spacingAndGlyphs" stroke="#2e2e2e" stroke-width="0.6">Back</text>
<text x="1450.72" y="855.50" font-size="22.50" fill="#2e2e2e" textLength="53.44" lengthAdjust="spacingAndGlyphs" stroke="#2e2e2e" stroke-width="0.6">Next</text></svg>
</body></html>
